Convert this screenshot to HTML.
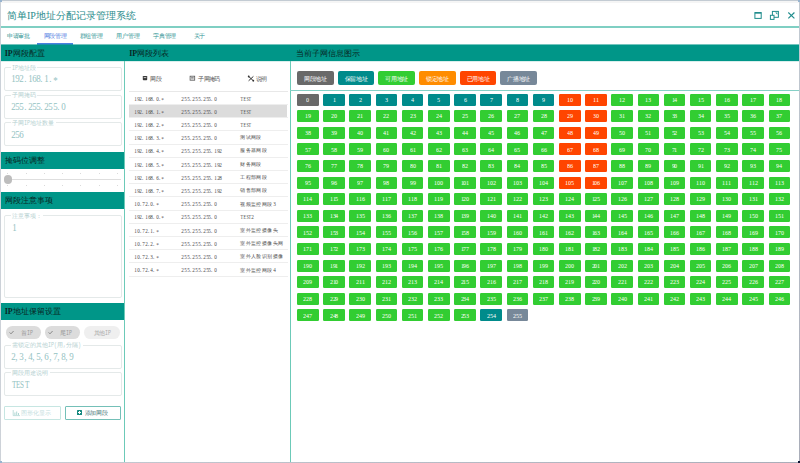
<!DOCTYPE html>
<html><head><meta charset="utf-8"><style>
*{box-sizing:border-box}
html,body{margin:0;padding:0;width:800px;height:463px;overflow:hidden;background:#fff}
body{position:relative;font-family:"Liberation Sans",sans-serif}
.a{position:absolute}
.t{line-height:1;white-space:nowrap}
.m{display:inline-block}
.g{display:inline-block;text-align:center}
.gi{display:inline-block;font-family:'Liberation Serif',serif;transform-origin:50% 50%}
.mi{display:inline-block;font-family:'Liberation Mono',monospace;transform-origin:0 50%}
.hdr{position:absolute;background:#009688}
.fs{position:absolute;border:1px solid #e4e9e9;border-radius:2px}
.vl{position:absolute;background:#6ccab8;width:1.3px}
.c{position:absolute;width:21.5px;height:12px;border-radius:1.2px}
.lb{position:absolute;top:71.3px;width:36.8px;height:13.4px;border-radius:2px}
.chip{position:absolute;top:326px;height:12.7px;border-radius:6.4px}
</style></head><body>

<div class="a" style="left:0;top:0;width:800px;height:1px;background:#c3cbd3"></div>
<div class="a" style="left:1px;top:1px;width:798px;height:2px;background:#f5f5f5"></div>
<div class="a" style="left:0;top:0;width:1px;height:463px;background:linear-gradient(#cbd1d8,#cdd2d8)"></div>
<div class="a" style="left:799px;top:0;width:1px;height:463px;background:linear-gradient(#c3cbd3,#a9adb9)"></div>
<div class="a" style="left:0;top:462px;width:800px;height:1px;background:linear-gradient(90deg,#c6ccd4,#a9adb9)"></div>
<div class="a" style="left:0;top:0;width:2px;height:2px;background:#98b4d0"></div>
<div class="a" style="left:798px;top:0;width:2px;height:2px;background:#98b4d0"></div>
<div class="a" style="left:0;top:461px;width:2px;height:2px;background:#98b4d0"></div>
<div class="a" style="left:798px;top:461px;width:2px;height:2px;background:#0c1232"></div>
<div class="a t" style="left:7.00px;top:10.55px;font-size:10.00px;color:#2a8c8c;font-weight:normal;">简单<span style="font-family:'Liberation Serif',serif;">IP</span>地址分配记录管理系统</div>
<div class="a" style="left:1px;top:26.1px;width:798px;height:1.8px;background:#7fcfc3"></div>
<svg class="a" style="left:750px;top:5px" width="50" height="20" viewBox="0 0 50 20">
<g fill="none" stroke="#1f8c8c" stroke-width="1">
<rect x="4.9" y="7.6" width="6.3" height="5.8"/>
<line x1="4.9" y1="7.9" x2="11.2" y2="7.9" stroke-width="1.5"/>
<rect x="22.4" y="6.4" width="6" height="5.9"/>
<rect x="20.4" y="10.3" width="3.6" height="4.1" fill="#fff"/>
<line x1="38.3" y1="7.5" x2="44.4" y2="13.4" stroke-width="1.1"/>
<line x1="44.4" y1="7.5" x2="38.3" y2="13.4" stroke-width="1.1"/>
</g>
<path d="M25.2 7.5 L27.4 7.5 L27.4 9.7 Z" fill="#1f8c8c"/>
</svg>
<div class="a t" style="left:6.75px;top:33.06px;font-size:5.80px;color:#2e9494;font-weight:normal;"><span style="font-size:6px;letter-spacing:-0.20px">申请审批</span></div>
<div class="a t" style="left:43.50px;top:33.06px;font-size:5.80px;color:#4d7be2;font-weight:normal;"><span style="font-size:6px;letter-spacing:-0.20px">网段管理</span></div>
<div class="a t" style="left:79.50px;top:33.06px;font-size:5.80px;color:#2e9494;font-weight:normal;"><span style="font-size:6px;letter-spacing:-0.20px">群组管理</span></div>
<div class="a t" style="left:116.40px;top:33.06px;font-size:5.80px;color:#2e9494;font-weight:normal;"><span style="font-size:6px;letter-spacing:-0.20px">用户管理</span></div>
<div class="a t" style="left:153.00px;top:33.06px;font-size:5.80px;color:#2e9494;font-weight:normal;"><span style="font-size:6px;letter-spacing:-0.20px">字典管理</span></div>
<div class="a t" style="left:193.50px;top:33.06px;font-size:5.80px;color:#2e9494;font-weight:normal;"><span style="font-size:6px;letter-spacing:-0.20px">关于</span></div>
<div class="a" style="left:37.2px;top:43.4px;width:36.3px;height:1.3px;background:#4a80e0"></div>
<div class="hdr" style="left:1px;top:45px;width:798px;height:16px"></div>
<div class="a" style="left:1px;top:44px;width:798px;height:1px;background:rgba(0,150,136,0.55)"></div>
<div class="a" style="left:1px;top:61px;width:798px;height:1px;background:rgba(0,150,136,0.15)"></div>
<div class="a t" style="left:4.70px;top:49.88px;font-size:8.00px;color:#082624;font-weight:500;"><span style="font-family:'Liberation Serif',serif;font-weight:bold">IP</span>网段配置</div>
<div class="a t" style="left:129.20px;top:49.88px;font-size:8.00px;color:#082624;font-weight:500;"><span style="font-family:'Liberation Serif',serif;font-weight:bold">IP</span>网段列表</div>
<div class="a t" style="left:296.00px;top:49.88px;font-size:8.00px;color:#082624;font-weight:500;">当前子网信息图示</div>
<div class="vl" style="left:123.8px;top:61px;height:401px"></div>
<div class="vl" style="left:289.8px;top:61px;height:401px"></div>
<div class="fs" style="left:4.3px;top:67.0px;width:117.3px;height:24.0px"></div>
<div class="a" style="left:11px;top:66.0px;width:26.4px;height:3px;background:#fff"></div>
<div class="a t" style="left:12.20px;top:64.56px;font-size:6.00px;color:#b4d0d0;font-weight:normal;"><span class="m" style="width:6.00px"><span class="mi" style="font-size:6.45px;transform:scaleX(0.775)">IP</span></span>地址段</div>
<div class="a t" style="left:11.20px;top:74.43px;font-size:8.30px;color:#94c2c2;font-weight:normal;"><span class="g" style="width:4.15px"><span class="gi" style="font-size:10.38px;transform:scaleX(0.860);">1</span></span><span class="g" style="width:4.15px"><span class="gi" style="font-size:10.38px;transform:scaleX(0.860);">9</span></span><span class="g" style="width:4.15px"><span class="gi" style="font-size:10.38px;transform:scaleX(0.860);">2</span></span><span class="g" style="width:4.15px"><span class="gi" style="font-size:10.38px;transform:scaleX(0.860);position:relative;left:-0.06em;">.</span></span><span class="g" style="width:4.15px"><span class="gi" style="font-size:10.38px;transform:scaleX(0.860);">1</span></span><span class="g" style="width:4.15px"><span class="gi" style="font-size:10.38px;transform:scaleX(0.860);">6</span></span><span class="g" style="width:4.15px"><span class="gi" style="font-size:10.38px;transform:scaleX(0.860);">8</span></span><span class="g" style="width:4.15px"><span class="gi" style="font-size:10.38px;transform:scaleX(0.860);position:relative;left:-0.06em;">.</span></span><span class="g" style="width:4.15px"><span class="gi" style="font-size:10.38px;transform:scaleX(0.860);">1</span></span><span class="g" style="width:4.15px"><span class="gi" style="font-size:10.38px;transform:scaleX(0.860);position:relative;left:-0.06em;">.</span></span><span class="g" style="width:4.15px"><span class="gi" style="font-size:10.38px;transform:scaleX(0.860);position:relative;top:0.15em;">*</span></span></div>
<div class="fs" style="left:4.3px;top:94.9px;width:117.3px;height:24.2px"></div>
<div class="a" style="left:11px;top:93.9px;width:26.4px;height:3px;background:#fff"></div>
<div class="a t" style="left:12.20px;top:92.46px;font-size:6.00px;color:#b4d0d0;font-weight:normal;">子网掩码</div>
<div class="a t" style="left:11.20px;top:102.33px;font-size:8.30px;color:#94c2c2;font-weight:normal;"><span class="g" style="width:4.15px"><span class="gi" style="font-size:10.38px;transform:scaleX(0.860);">2</span></span><span class="g" style="width:4.15px"><span class="gi" style="font-size:10.38px;transform:scaleX(0.860);">5</span></span><span class="g" style="width:4.15px"><span class="gi" style="font-size:10.38px;transform:scaleX(0.860);">5</span></span><span class="g" style="width:4.15px"><span class="gi" style="font-size:10.38px;transform:scaleX(0.860);position:relative;left:-0.06em;">.</span></span><span class="g" style="width:4.15px"><span class="gi" style="font-size:10.38px;transform:scaleX(0.860);">2</span></span><span class="g" style="width:4.15px"><span class="gi" style="font-size:10.38px;transform:scaleX(0.860);">5</span></span><span class="g" style="width:4.15px"><span class="gi" style="font-size:10.38px;transform:scaleX(0.860);">5</span></span><span class="g" style="width:4.15px"><span class="gi" style="font-size:10.38px;transform:scaleX(0.860);position:relative;left:-0.06em;">.</span></span><span class="g" style="width:4.15px"><span class="gi" style="font-size:10.38px;transform:scaleX(0.860);">2</span></span><span class="g" style="width:4.15px"><span class="gi" style="font-size:10.38px;transform:scaleX(0.860);">5</span></span><span class="g" style="width:4.15px"><span class="gi" style="font-size:10.38px;transform:scaleX(0.860);">5</span></span><span class="g" style="width:4.15px"><span class="gi" style="font-size:10.38px;transform:scaleX(0.860);position:relative;left:-0.06em;">.</span></span><span class="g" style="width:4.15px"><span class="gi" style="font-size:10.38px;transform:scaleX(0.860);">0</span></span></div>
<div class="fs" style="left:4.3px;top:122.1px;width:117.3px;height:23.6px"></div>
<div class="a" style="left:11px;top:121.1px;width:44.7px;height:3px;background:#fff"></div>
<div class="a t" style="left:12.20px;top:119.66px;font-size:6.00px;color:#b4d0d0;font-weight:normal;">子网<span class="m" style="width:6.00px"><span class="mi" style="font-size:6.45px;transform:scaleX(0.775)">IP</span></span>地址数量</div>
<div class="a t" style="left:11.20px;top:129.53px;font-size:8.30px;color:#94c2c2;font-weight:normal;"><span class="g" style="width:4.15px"><span class="gi" style="font-size:10.38px;transform:scaleX(0.860);">2</span></span><span class="g" style="width:4.15px"><span class="gi" style="font-size:10.38px;transform:scaleX(0.860);">5</span></span><span class="g" style="width:4.15px"><span class="gi" style="font-size:10.38px;transform:scaleX(0.860);">6</span></span></div>
<div class="hdr" style="left:1px;top:151.9px;width:123px;height:16.9px"></div>
<div class="a t" style="left:4.70px;top:156.78px;font-size:8.00px;color:#082624;font-weight:500;">掩码位调整</div>
<div class="a" style="left:7.8px;top:178.9px;width:113.4px;height:1.2px;background:#dedede"></div>
<div class="a" style="left:7.40px;top:173.2px;width:0.8px;height:1px;background:#dadada"></div>
<div class="a" style="left:7.40px;top:184.6px;width:0.8px;height:1px;background:#dadada"></div>
<div class="a" style="left:25.65px;top:173.2px;width:0.8px;height:1px;background:#dadada"></div>
<div class="a" style="left:25.65px;top:184.6px;width:0.8px;height:1px;background:#dadada"></div>
<div class="a" style="left:43.90px;top:173.2px;width:0.8px;height:1px;background:#dadada"></div>
<div class="a" style="left:43.90px;top:184.6px;width:0.8px;height:1px;background:#dadada"></div>
<div class="a" style="left:62.15px;top:173.2px;width:0.8px;height:1px;background:#dadada"></div>
<div class="a" style="left:62.15px;top:184.6px;width:0.8px;height:1px;background:#dadada"></div>
<div class="a" style="left:80.40px;top:173.2px;width:0.8px;height:1px;background:#dadada"></div>
<div class="a" style="left:80.40px;top:184.6px;width:0.8px;height:1px;background:#dadada"></div>
<div class="a" style="left:98.65px;top:173.2px;width:0.8px;height:1px;background:#dadada"></div>
<div class="a" style="left:98.65px;top:184.6px;width:0.8px;height:1px;background:#dadada"></div>
<div class="a" style="left:116.90px;top:173.2px;width:0.8px;height:1px;background:#dadada"></div>
<div class="a" style="left:116.90px;top:184.6px;width:0.8px;height:1px;background:#dadada"></div>
<div class="a" style="left:3.6px;top:175.3px;width:8.4px;height:8.4px;border-radius:50%;background:#bdbdbd"></div>
<div class="hdr" style="left:1px;top:191.7px;width:123px;height:17.1px"></div>
<div class="a t" style="left:4.70px;top:196.78px;font-size:8.00px;color:#082624;font-weight:500;">网段注意事项</div>
<div class="fs" style="left:4.2px;top:214.6px;width:117.5px;height:83.0px"></div>
<div class="a" style="left:11px;top:213.6px;width:32px;height:3px;background:#fff"></div>
<div class="a t" style="left:12.30px;top:212.66px;font-size:6.00px;color:#b4d0d0;font-weight:normal;">注意事项：</div>
<div class="a t" style="left:12.00px;top:222.93px;font-size:8.30px;color:#94c2c2;font-weight:normal;"><span class="g" style="width:4.15px"><span class="gi" style="font-size:10.38px;transform:scaleX(0.860);">1</span></span></div>
<div class="hdr" style="left:1px;top:303.3px;width:123px;height:16.6px"></div>
<div class="a t" style="left:4.70px;top:308.48px;font-size:8.00px;color:#082624;font-weight:500;"><span style="font-family:'Liberation Serif',serif;font-weight:bold">IP</span>地址保留设置</div>
<div class="chip" style="left:6px;width:35.4px;background:#dcdcdc"></div>
<div class="chip" style="left:45px;width:35.4px;background:#dcdcdc"></div>
<div class="chip" style="left:84px;width:35.8px;background:#efefef"></div>
<svg class="a" style="left:0;top:320px" width="60" height="20"><path d="M9.6 12.4 L11 13.8 L13.6 11" fill="none" stroke="#666" stroke-width="0.7"/><path d="M48.6 12.4 L50 13.8 L52.6 11" fill="none" stroke="#666" stroke-width="0.7"/></svg>
<div class="a t" style="left:21.40px;top:329.51px;font-size:5.90px;color:#999999;font-weight:normal;"><span style="font-size:6px;letter-spacing:-0.10px">首</span><span class="m" style="width:5.90px"><span class="mi" style="font-size:6.34px;transform:scaleX(0.775)">IP</span></span></div>
<div class="a t" style="left:60.40px;top:329.51px;font-size:5.90px;color:#999999;font-weight:normal;"><span style="font-size:6px;letter-spacing:-0.10px">尾</span><span class="m" style="width:5.90px"><span class="mi" style="font-size:6.34px;transform:scaleX(0.775)">IP</span></span></div>
<div class="a t" style="left:93.60px;top:329.51px;font-size:5.90px;color:#aaaaaa;font-weight:normal;"><span style="font-size:6px;letter-spacing:-0.10px">其他</span><span class="m" style="width:5.90px"><span class="mi" style="font-size:6.34px;transform:scaleX(0.775)">IP</span></span></div>
<div class="fs" style="left:4.3px;top:344.7px;width:117.3px;height:24.3px"></div>
<div class="a" style="left:11px;top:343.7px;width:72.1px;height:3px;background:#fff"></div>
<div class="a t" style="left:12.20px;top:342.26px;font-size:6.00px;color:#b4d0d0;font-weight:normal;">需锁定的其他<span class="m" style="width:9.00px"><span class="mi" style="font-size:6.45px;transform:scaleX(0.775)">IP(</span></span>用<span class="m" style="width:3.00px"><span class="mi" style="font-size:6.45px;transform:scaleX(0.775)">,</span></span>分隔<span class="m" style="width:3.00px"><span class="mi" style="font-size:6.45px;transform:scaleX(0.775)">)</span></span></div>
<div class="a t" style="left:11.20px;top:352.13px;font-size:8.30px;color:#94c2c2;font-weight:normal;"><span class="g" style="width:4.15px"><span class="gi" style="font-size:10.38px;transform:scaleX(0.860);">2</span></span><span class="g" style="width:4.15px"><span class="gi" style="font-size:10.38px;transform:scaleX(0.860);position:relative;left:-0.06em;">,</span></span><span class="g" style="width:4.15px"><span class="gi" style="font-size:10.38px;transform:scaleX(0.860);">3</span></span><span class="g" style="width:4.15px"><span class="gi" style="font-size:10.38px;transform:scaleX(0.860);position:relative;left:-0.06em;">,</span></span><span class="g" style="width:4.15px"><span class="gi" style="font-size:10.38px;transform:scaleX(0.860);">4</span></span><span class="g" style="width:4.15px"><span class="gi" style="font-size:10.38px;transform:scaleX(0.860);position:relative;left:-0.06em;">,</span></span><span class="g" style="width:4.15px"><span class="gi" style="font-size:10.38px;transform:scaleX(0.860);">5</span></span><span class="g" style="width:4.15px"><span class="gi" style="font-size:10.38px;transform:scaleX(0.860);position:relative;left:-0.06em;">,</span></span><span class="g" style="width:4.15px"><span class="gi" style="font-size:10.38px;transform:scaleX(0.860);">6</span></span><span class="g" style="width:4.15px"><span class="gi" style="font-size:10.38px;transform:scaleX(0.860);position:relative;left:-0.06em;">,</span></span><span class="g" style="width:4.15px"><span class="gi" style="font-size:10.38px;transform:scaleX(0.860);">7</span></span><span class="g" style="width:4.15px"><span class="gi" style="font-size:10.38px;transform:scaleX(0.860);position:relative;left:-0.06em;">,</span></span><span class="g" style="width:4.15px"><span class="gi" style="font-size:10.38px;transform:scaleX(0.860);">8</span></span><span class="g" style="width:4.15px"><span class="gi" style="font-size:10.38px;transform:scaleX(0.860);position:relative;left:-0.06em;">,</span></span><span class="g" style="width:4.15px"><span class="gi" style="font-size:10.38px;transform:scaleX(0.860);">9</span></span></div>
<div class="fs" style="left:4.3px;top:372.3px;width:117.3px;height:23.4px"></div>
<div class="a" style="left:11px;top:371.3px;width:38.6px;height:3px;background:#fff"></div>
<div class="a t" style="left:12.20px;top:369.86px;font-size:6.00px;color:#b4d0d0;font-weight:normal;">网段用途说明</div>
<div class="a t" style="left:11.20px;top:379.73px;font-size:8.30px;color:#94c2c2;font-weight:normal;"><span class="g" style="width:4.15px"><span class="gi" style="font-size:10.38px;transform:scaleX(0.688);">T</span></span><span class="g" style="width:4.15px"><span class="gi" style="font-size:10.38px;transform:scaleX(0.688);">E</span></span><span class="g" style="width:4.15px"><span class="gi" style="font-size:10.38px;transform:scaleX(0.688);">S</span></span><span class="g" style="width:4.15px"><span class="gi" style="font-size:10.38px;transform:scaleX(0.688);">T</span></span></div>
<div class="a" style="left:4.4px;top:406px;width:56.2px;height:13.6px;border:1px solid #c6e6e2;border-radius:1px"></div>
<svg class="a" style="left:12px;top:408px" width="10" height="10"><path d="M1.2 2 L1.2 7.6 L8 7.6" fill="none" stroke="#b0d8d4" stroke-width="0.8"/><rect x="2.4" y="4.5" width="1" height="2.6" fill="#b0d8d4"/><rect x="4.2" y="3.5" width="1" height="3.6" fill="#b0d8d4"/><rect x="6" y="5" width="1" height="2.1" fill="#b0d8d4"/></svg>
<div class="a t" style="left:21.00px;top:410.41px;font-size:5.90px;color:#c4dede;font-weight:normal;"><span style="font-size:6px;letter-spacing:-0.10px">图形化显示</span></div>
<div class="a" style="left:64.7px;top:406px;width:56.3px;height:13.6px;border:1.1px solid #74c0b8;border-radius:1px"></div>
<div class="a" style="left:76.9px;top:410.2px;width:5px;height:5px;background:#16897f;border-radius:0.6px"></div>
<div class="a" style="left:77.9px;top:412.3px;width:3px;height:0.8px;background:#fff"></div>
<div class="a" style="left:79px;top:411.2px;width:0.8px;height:3px;background:#fff"></div>
<div class="a t" style="left:84.50px;top:410.41px;font-size:5.90px;color:#4c7c7c;font-weight:normal;"><span style="font-size:6px;letter-spacing:-0.10px">添加网段</span></div>
<svg class="a" style="left:142px;top:75px" width="6" height="6" viewBox="0 0 6 6"><rect x="0.8" y="0.9" width="4.4" height="4.4" rx="0.7" fill="#3a3a3a"/><rect x="1.7" y="2" width="2.6" height="1.1" fill="#bbb"/></svg>
<div class="a t" style="left:150.40px;top:75.73px;font-size:5.45px;color:#555;font-weight:normal;"><span style="font-size:6px;letter-spacing:-0.55px">网段</span></div>
<svg class="a" style="left:189px;top:75px" width="7" height="6" viewBox="0 0 7 6"><rect x="1.1" y="1.2" width="4.6" height="4" fill="none" stroke="#555" stroke-width="0.8"/><rect x="2.1" y="2.1" width="2.6" height="0.7" fill="#666"/><rect x="2.1" y="3.5" width="2.6" height="0.7" fill="#666"/></svg>
<div class="a t" style="left:198.10px;top:75.73px;font-size:5.45px;color:#555;font-weight:normal;"><span style="font-size:6px;letter-spacing:-0.55px">子网掩码</span></div>
<svg class="a" style="left:247px;top:74.8px" width="8" height="7" viewBox="0 0 8 7"><path d="M1.6 1.4 L6.4 5.8 M6.4 1.4 L1.6 5.8" stroke="#333" stroke-width="1"/><circle cx="1.7" cy="1.5" r="0.9" fill="#333"/><circle cx="6.3" cy="5.7" r="0.9" fill="#333"/></svg>
<div class="a t" style="left:255.80px;top:75.73px;font-size:5.45px;color:#555;font-weight:normal;"><span style="font-size:6px;letter-spacing:-0.55px">说明</span></div>
<div class="a" style="left:129px;top:90.8px;width:158.5px;height:0.8px;background:#e8e8e8"></div>
<div class="a" style="left:129px;top:104.00px;width:158.5px;height:0.8px;background:#eeeeee"></div>
<div class="a t" style="left:134.00px;top:95.64px;font-size:5.42px;color:#4a4a4a;font-weight:normal;"><span class="g" style="width:2.71px"><span class="gi" style="font-size:6.07px;transform:scaleX(0.850);">1</span></span><span class="g" style="width:2.71px"><span class="gi" style="font-size:6.07px;transform:scaleX(0.850);">9</span></span><span class="g" style="width:2.71px"><span class="gi" style="font-size:6.07px;transform:scaleX(0.850);">2</span></span><span class="g" style="width:2.71px"><span class="gi" style="font-size:6.07px;transform:scaleX(0.850);position:relative;left:-0.06em;">.</span></span><span class="g" style="width:2.71px"><span class="gi" style="font-size:6.07px;transform:scaleX(0.850);">1</span></span><span class="g" style="width:2.71px"><span class="gi" style="font-size:6.07px;transform:scaleX(0.850);">6</span></span><span class="g" style="width:2.71px"><span class="gi" style="font-size:6.07px;transform:scaleX(0.850);">8</span></span><span class="g" style="width:2.71px"><span class="gi" style="font-size:6.07px;transform:scaleX(0.850);position:relative;left:-0.06em;">.</span></span><span class="g" style="width:2.71px"><span class="gi" style="font-size:6.07px;transform:scaleX(0.850);">0</span></span><span class="g" style="width:2.71px"><span class="gi" style="font-size:6.07px;transform:scaleX(0.850);position:relative;left:-0.06em;">.</span></span><span class="g" style="width:2.71px"><span class="gi" style="font-size:6.07px;transform:scaleX(0.850);position:relative;top:0.15em;">*</span></span></div>
<div class="a t" style="left:181.40px;top:95.64px;font-size:5.42px;color:#4a4a4a;font-weight:normal;"><span class="g" style="width:2.71px"><span class="gi" style="font-size:6.07px;transform:scaleX(0.850);">2</span></span><span class="g" style="width:2.71px"><span class="gi" style="font-size:6.07px;transform:scaleX(0.850);">5</span></span><span class="g" style="width:2.71px"><span class="gi" style="font-size:6.07px;transform:scaleX(0.850);">5</span></span><span class="g" style="width:2.71px"><span class="gi" style="font-size:6.07px;transform:scaleX(0.850);position:relative;left:-0.06em;">.</span></span><span class="g" style="width:2.71px"><span class="gi" style="font-size:6.07px;transform:scaleX(0.850);">2</span></span><span class="g" style="width:2.71px"><span class="gi" style="font-size:6.07px;transform:scaleX(0.850);">5</span></span><span class="g" style="width:2.71px"><span class="gi" style="font-size:6.07px;transform:scaleX(0.850);">5</span></span><span class="g" style="width:2.71px"><span class="gi" style="font-size:6.07px;transform:scaleX(0.850);position:relative;left:-0.06em;">.</span></span><span class="g" style="width:2.71px"><span class="gi" style="font-size:6.07px;transform:scaleX(0.850);">2</span></span><span class="g" style="width:2.71px"><span class="gi" style="font-size:6.07px;transform:scaleX(0.850);">5</span></span><span class="g" style="width:2.71px"><span class="gi" style="font-size:6.07px;transform:scaleX(0.850);">5</span></span><span class="g" style="width:2.71px"><span class="gi" style="font-size:6.07px;transform:scaleX(0.850);position:relative;left:-0.06em;">.</span></span><span class="g" style="width:2.71px"><span class="gi" style="font-size:6.07px;transform:scaleX(0.850);">0</span></span></div>
<div class="a t" style="left:240.20px;top:95.64px;font-size:5.42px;color:#4a4a4a;font-weight:normal;"><span class="g" style="width:2.71px"><span class="gi" style="font-size:6.07px;transform:scaleX(0.680);">T</span></span><span class="g" style="width:2.71px"><span class="gi" style="font-size:6.07px;transform:scaleX(0.680);">E</span></span><span class="g" style="width:2.71px"><span class="gi" style="font-size:6.07px;transform:scaleX(0.680);">S</span></span><span class="g" style="width:2.71px"><span class="gi" style="font-size:6.07px;transform:scaleX(0.680);">T</span></span></div>
<div class="a" style="left:128.9px;top:105.30px;width:158.6px;height:12.8px;background:#dcdcdc"></div>
<div class="a" style="left:129px;top:117.20px;width:158.5px;height:0.8px;background:#eeeeee"></div>
<div class="a t" style="left:134.00px;top:108.84px;font-size:5.42px;color:#4a4a4a;font-weight:normal;"><span class="g" style="width:2.71px"><span class="gi" style="font-size:6.07px;transform:scaleX(0.850);">1</span></span><span class="g" style="width:2.71px"><span class="gi" style="font-size:6.07px;transform:scaleX(0.850);">9</span></span><span class="g" style="width:2.71px"><span class="gi" style="font-size:6.07px;transform:scaleX(0.850);">2</span></span><span class="g" style="width:2.71px"><span class="gi" style="font-size:6.07px;transform:scaleX(0.850);position:relative;left:-0.06em;">.</span></span><span class="g" style="width:2.71px"><span class="gi" style="font-size:6.07px;transform:scaleX(0.850);">1</span></span><span class="g" style="width:2.71px"><span class="gi" style="font-size:6.07px;transform:scaleX(0.850);">6</span></span><span class="g" style="width:2.71px"><span class="gi" style="font-size:6.07px;transform:scaleX(0.850);">8</span></span><span class="g" style="width:2.71px"><span class="gi" style="font-size:6.07px;transform:scaleX(0.850);position:relative;left:-0.06em;">.</span></span><span class="g" style="width:2.71px"><span class="gi" style="font-size:6.07px;transform:scaleX(0.850);">1</span></span><span class="g" style="width:2.71px"><span class="gi" style="font-size:6.07px;transform:scaleX(0.850);position:relative;left:-0.06em;">.</span></span><span class="g" style="width:2.71px"><span class="gi" style="font-size:6.07px;transform:scaleX(0.850);position:relative;top:0.15em;">*</span></span></div>
<div class="a t" style="left:181.40px;top:108.84px;font-size:5.42px;color:#4a4a4a;font-weight:normal;"><span class="g" style="width:2.71px"><span class="gi" style="font-size:6.07px;transform:scaleX(0.850);">2</span></span><span class="g" style="width:2.71px"><span class="gi" style="font-size:6.07px;transform:scaleX(0.850);">5</span></span><span class="g" style="width:2.71px"><span class="gi" style="font-size:6.07px;transform:scaleX(0.850);">5</span></span><span class="g" style="width:2.71px"><span class="gi" style="font-size:6.07px;transform:scaleX(0.850);position:relative;left:-0.06em;">.</span></span><span class="g" style="width:2.71px"><span class="gi" style="font-size:6.07px;transform:scaleX(0.850);">2</span></span><span class="g" style="width:2.71px"><span class="gi" style="font-size:6.07px;transform:scaleX(0.850);">5</span></span><span class="g" style="width:2.71px"><span class="gi" style="font-size:6.07px;transform:scaleX(0.850);">5</span></span><span class="g" style="width:2.71px"><span class="gi" style="font-size:6.07px;transform:scaleX(0.850);position:relative;left:-0.06em;">.</span></span><span class="g" style="width:2.71px"><span class="gi" style="font-size:6.07px;transform:scaleX(0.850);">2</span></span><span class="g" style="width:2.71px"><span class="gi" style="font-size:6.07px;transform:scaleX(0.850);">5</span></span><span class="g" style="width:2.71px"><span class="gi" style="font-size:6.07px;transform:scaleX(0.850);">5</span></span><span class="g" style="width:2.71px"><span class="gi" style="font-size:6.07px;transform:scaleX(0.850);position:relative;left:-0.06em;">.</span></span><span class="g" style="width:2.71px"><span class="gi" style="font-size:6.07px;transform:scaleX(0.850);">0</span></span></div>
<div class="a t" style="left:240.20px;top:108.84px;font-size:5.42px;color:#4a4a4a;font-weight:normal;"><span class="g" style="width:2.71px"><span class="gi" style="font-size:6.07px;transform:scaleX(0.680);">T</span></span><span class="g" style="width:2.71px"><span class="gi" style="font-size:6.07px;transform:scaleX(0.680);">E</span></span><span class="g" style="width:2.71px"><span class="gi" style="font-size:6.07px;transform:scaleX(0.680);">S</span></span><span class="g" style="width:2.71px"><span class="gi" style="font-size:6.07px;transform:scaleX(0.680);">T</span></span></div>
<div class="a" style="left:129px;top:130.40px;width:158.5px;height:0.8px;background:#eeeeee"></div>
<div class="a t" style="left:134.00px;top:122.04px;font-size:5.42px;color:#4a4a4a;font-weight:normal;"><span class="g" style="width:2.71px"><span class="gi" style="font-size:6.07px;transform:scaleX(0.850);">1</span></span><span class="g" style="width:2.71px"><span class="gi" style="font-size:6.07px;transform:scaleX(0.850);">9</span></span><span class="g" style="width:2.71px"><span class="gi" style="font-size:6.07px;transform:scaleX(0.850);">2</span></span><span class="g" style="width:2.71px"><span class="gi" style="font-size:6.07px;transform:scaleX(0.850);position:relative;left:-0.06em;">.</span></span><span class="g" style="width:2.71px"><span class="gi" style="font-size:6.07px;transform:scaleX(0.850);">1</span></span><span class="g" style="width:2.71px"><span class="gi" style="font-size:6.07px;transform:scaleX(0.850);">6</span></span><span class="g" style="width:2.71px"><span class="gi" style="font-size:6.07px;transform:scaleX(0.850);">8</span></span><span class="g" style="width:2.71px"><span class="gi" style="font-size:6.07px;transform:scaleX(0.850);position:relative;left:-0.06em;">.</span></span><span class="g" style="width:2.71px"><span class="gi" style="font-size:6.07px;transform:scaleX(0.850);">2</span></span><span class="g" style="width:2.71px"><span class="gi" style="font-size:6.07px;transform:scaleX(0.850);position:relative;left:-0.06em;">.</span></span><span class="g" style="width:2.71px"><span class="gi" style="font-size:6.07px;transform:scaleX(0.850);position:relative;top:0.15em;">*</span></span></div>
<div class="a t" style="left:181.40px;top:122.04px;font-size:5.42px;color:#4a4a4a;font-weight:normal;"><span class="g" style="width:2.71px"><span class="gi" style="font-size:6.07px;transform:scaleX(0.850);">2</span></span><span class="g" style="width:2.71px"><span class="gi" style="font-size:6.07px;transform:scaleX(0.850);">5</span></span><span class="g" style="width:2.71px"><span class="gi" style="font-size:6.07px;transform:scaleX(0.850);">5</span></span><span class="g" style="width:2.71px"><span class="gi" style="font-size:6.07px;transform:scaleX(0.850);position:relative;left:-0.06em;">.</span></span><span class="g" style="width:2.71px"><span class="gi" style="font-size:6.07px;transform:scaleX(0.850);">2</span></span><span class="g" style="width:2.71px"><span class="gi" style="font-size:6.07px;transform:scaleX(0.850);">5</span></span><span class="g" style="width:2.71px"><span class="gi" style="font-size:6.07px;transform:scaleX(0.850);">5</span></span><span class="g" style="width:2.71px"><span class="gi" style="font-size:6.07px;transform:scaleX(0.850);position:relative;left:-0.06em;">.</span></span><span class="g" style="width:2.71px"><span class="gi" style="font-size:6.07px;transform:scaleX(0.850);">2</span></span><span class="g" style="width:2.71px"><span class="gi" style="font-size:6.07px;transform:scaleX(0.850);">5</span></span><span class="g" style="width:2.71px"><span class="gi" style="font-size:6.07px;transform:scaleX(0.850);">5</span></span><span class="g" style="width:2.71px"><span class="gi" style="font-size:6.07px;transform:scaleX(0.850);position:relative;left:-0.06em;">.</span></span><span class="g" style="width:2.71px"><span class="gi" style="font-size:6.07px;transform:scaleX(0.850);">0</span></span></div>
<div class="a t" style="left:240.20px;top:122.04px;font-size:5.42px;color:#4a4a4a;font-weight:normal;"><span class="g" style="width:2.71px"><span class="gi" style="font-size:6.07px;transform:scaleX(0.680);">T</span></span><span class="g" style="width:2.71px"><span class="gi" style="font-size:6.07px;transform:scaleX(0.680);">E</span></span><span class="g" style="width:2.71px"><span class="gi" style="font-size:6.07px;transform:scaleX(0.680);">S</span></span><span class="g" style="width:2.71px"><span class="gi" style="font-size:6.07px;transform:scaleX(0.680);">T</span></span></div>
<div class="a" style="left:129px;top:143.60px;width:158.5px;height:0.8px;background:#eeeeee"></div>
<div class="a t" style="left:134.00px;top:135.24px;font-size:5.42px;color:#4a4a4a;font-weight:normal;"><span class="g" style="width:2.71px"><span class="gi" style="font-size:6.07px;transform:scaleX(0.850);">1</span></span><span class="g" style="width:2.71px"><span class="gi" style="font-size:6.07px;transform:scaleX(0.850);">9</span></span><span class="g" style="width:2.71px"><span class="gi" style="font-size:6.07px;transform:scaleX(0.850);">2</span></span><span class="g" style="width:2.71px"><span class="gi" style="font-size:6.07px;transform:scaleX(0.850);position:relative;left:-0.06em;">.</span></span><span class="g" style="width:2.71px"><span class="gi" style="font-size:6.07px;transform:scaleX(0.850);">1</span></span><span class="g" style="width:2.71px"><span class="gi" style="font-size:6.07px;transform:scaleX(0.850);">6</span></span><span class="g" style="width:2.71px"><span class="gi" style="font-size:6.07px;transform:scaleX(0.850);">8</span></span><span class="g" style="width:2.71px"><span class="gi" style="font-size:6.07px;transform:scaleX(0.850);position:relative;left:-0.06em;">.</span></span><span class="g" style="width:2.71px"><span class="gi" style="font-size:6.07px;transform:scaleX(0.850);">3</span></span><span class="g" style="width:2.71px"><span class="gi" style="font-size:6.07px;transform:scaleX(0.850);position:relative;left:-0.06em;">.</span></span><span class="g" style="width:2.71px"><span class="gi" style="font-size:6.07px;transform:scaleX(0.850);position:relative;top:0.15em;">*</span></span></div>
<div class="a t" style="left:181.40px;top:135.24px;font-size:5.42px;color:#4a4a4a;font-weight:normal;"><span class="g" style="width:2.71px"><span class="gi" style="font-size:6.07px;transform:scaleX(0.850);">2</span></span><span class="g" style="width:2.71px"><span class="gi" style="font-size:6.07px;transform:scaleX(0.850);">5</span></span><span class="g" style="width:2.71px"><span class="gi" style="font-size:6.07px;transform:scaleX(0.850);">5</span></span><span class="g" style="width:2.71px"><span class="gi" style="font-size:6.07px;transform:scaleX(0.850);position:relative;left:-0.06em;">.</span></span><span class="g" style="width:2.71px"><span class="gi" style="font-size:6.07px;transform:scaleX(0.850);">2</span></span><span class="g" style="width:2.71px"><span class="gi" style="font-size:6.07px;transform:scaleX(0.850);">5</span></span><span class="g" style="width:2.71px"><span class="gi" style="font-size:6.07px;transform:scaleX(0.850);">5</span></span><span class="g" style="width:2.71px"><span class="gi" style="font-size:6.07px;transform:scaleX(0.850);position:relative;left:-0.06em;">.</span></span><span class="g" style="width:2.71px"><span class="gi" style="font-size:6.07px;transform:scaleX(0.850);">2</span></span><span class="g" style="width:2.71px"><span class="gi" style="font-size:6.07px;transform:scaleX(0.850);">5</span></span><span class="g" style="width:2.71px"><span class="gi" style="font-size:6.07px;transform:scaleX(0.850);">5</span></span><span class="g" style="width:2.71px"><span class="gi" style="font-size:6.07px;transform:scaleX(0.850);position:relative;left:-0.06em;">.</span></span><span class="g" style="width:2.71px"><span class="gi" style="font-size:6.07px;transform:scaleX(0.850);">0</span></span></div>
<div class="a t" style="left:240.20px;top:135.24px;font-size:5.42px;color:#4a4a4a;font-weight:normal;"><span style="font-size:5px;letter-spacing:0.42px">测试网段</span></div>
<div class="a" style="left:129px;top:156.80px;width:158.5px;height:0.8px;background:#eeeeee"></div>
<div class="a t" style="left:134.00px;top:148.44px;font-size:5.42px;color:#4a4a4a;font-weight:normal;"><span class="g" style="width:2.71px"><span class="gi" style="font-size:6.07px;transform:scaleX(0.850);">1</span></span><span class="g" style="width:2.71px"><span class="gi" style="font-size:6.07px;transform:scaleX(0.850);">9</span></span><span class="g" style="width:2.71px"><span class="gi" style="font-size:6.07px;transform:scaleX(0.850);">2</span></span><span class="g" style="width:2.71px"><span class="gi" style="font-size:6.07px;transform:scaleX(0.850);position:relative;left:-0.06em;">.</span></span><span class="g" style="width:2.71px"><span class="gi" style="font-size:6.07px;transform:scaleX(0.850);">1</span></span><span class="g" style="width:2.71px"><span class="gi" style="font-size:6.07px;transform:scaleX(0.850);">6</span></span><span class="g" style="width:2.71px"><span class="gi" style="font-size:6.07px;transform:scaleX(0.850);">8</span></span><span class="g" style="width:2.71px"><span class="gi" style="font-size:6.07px;transform:scaleX(0.850);position:relative;left:-0.06em;">.</span></span><span class="g" style="width:2.71px"><span class="gi" style="font-size:6.07px;transform:scaleX(0.850);">4</span></span><span class="g" style="width:2.71px"><span class="gi" style="font-size:6.07px;transform:scaleX(0.850);position:relative;left:-0.06em;">.</span></span><span class="g" style="width:2.71px"><span class="gi" style="font-size:6.07px;transform:scaleX(0.850);position:relative;top:0.15em;">*</span></span></div>
<div class="a t" style="left:181.40px;top:148.44px;font-size:5.42px;color:#4a4a4a;font-weight:normal;"><span class="g" style="width:2.71px"><span class="gi" style="font-size:6.07px;transform:scaleX(0.850);">2</span></span><span class="g" style="width:2.71px"><span class="gi" style="font-size:6.07px;transform:scaleX(0.850);">5</span></span><span class="g" style="width:2.71px"><span class="gi" style="font-size:6.07px;transform:scaleX(0.850);">5</span></span><span class="g" style="width:2.71px"><span class="gi" style="font-size:6.07px;transform:scaleX(0.850);position:relative;left:-0.06em;">.</span></span><span class="g" style="width:2.71px"><span class="gi" style="font-size:6.07px;transform:scaleX(0.850);">2</span></span><span class="g" style="width:2.71px"><span class="gi" style="font-size:6.07px;transform:scaleX(0.850);">5</span></span><span class="g" style="width:2.71px"><span class="gi" style="font-size:6.07px;transform:scaleX(0.850);">5</span></span><span class="g" style="width:2.71px"><span class="gi" style="font-size:6.07px;transform:scaleX(0.850);position:relative;left:-0.06em;">.</span></span><span class="g" style="width:2.71px"><span class="gi" style="font-size:6.07px;transform:scaleX(0.850);">2</span></span><span class="g" style="width:2.71px"><span class="gi" style="font-size:6.07px;transform:scaleX(0.850);">5</span></span><span class="g" style="width:2.71px"><span class="gi" style="font-size:6.07px;transform:scaleX(0.850);">5</span></span><span class="g" style="width:2.71px"><span class="gi" style="font-size:6.07px;transform:scaleX(0.850);position:relative;left:-0.06em;">.</span></span><span class="g" style="width:2.71px"><span class="gi" style="font-size:6.07px;transform:scaleX(0.850);">1</span></span><span class="g" style="width:2.71px"><span class="gi" style="font-size:6.07px;transform:scaleX(0.850);">9</span></span><span class="g" style="width:2.71px"><span class="gi" style="font-size:6.07px;transform:scaleX(0.850);">2</span></span></div>
<div class="a t" style="left:240.20px;top:148.44px;font-size:5.42px;color:#4a4a4a;font-weight:normal;"><span style="font-size:5px;letter-spacing:0.42px">服务器网段</span></div>
<div class="a" style="left:129px;top:170.00px;width:158.5px;height:0.8px;background:#eeeeee"></div>
<div class="a t" style="left:134.00px;top:161.64px;font-size:5.42px;color:#4a4a4a;font-weight:normal;"><span class="g" style="width:2.71px"><span class="gi" style="font-size:6.07px;transform:scaleX(0.850);">1</span></span><span class="g" style="width:2.71px"><span class="gi" style="font-size:6.07px;transform:scaleX(0.850);">9</span></span><span class="g" style="width:2.71px"><span class="gi" style="font-size:6.07px;transform:scaleX(0.850);">2</span></span><span class="g" style="width:2.71px"><span class="gi" style="font-size:6.07px;transform:scaleX(0.850);position:relative;left:-0.06em;">.</span></span><span class="g" style="width:2.71px"><span class="gi" style="font-size:6.07px;transform:scaleX(0.850);">1</span></span><span class="g" style="width:2.71px"><span class="gi" style="font-size:6.07px;transform:scaleX(0.850);">6</span></span><span class="g" style="width:2.71px"><span class="gi" style="font-size:6.07px;transform:scaleX(0.850);">8</span></span><span class="g" style="width:2.71px"><span class="gi" style="font-size:6.07px;transform:scaleX(0.850);position:relative;left:-0.06em;">.</span></span><span class="g" style="width:2.71px"><span class="gi" style="font-size:6.07px;transform:scaleX(0.850);">5</span></span><span class="g" style="width:2.71px"><span class="gi" style="font-size:6.07px;transform:scaleX(0.850);position:relative;left:-0.06em;">.</span></span><span class="g" style="width:2.71px"><span class="gi" style="font-size:6.07px;transform:scaleX(0.850);position:relative;top:0.15em;">*</span></span></div>
<div class="a t" style="left:181.40px;top:161.64px;font-size:5.42px;color:#4a4a4a;font-weight:normal;"><span class="g" style="width:2.71px"><span class="gi" style="font-size:6.07px;transform:scaleX(0.850);">2</span></span><span class="g" style="width:2.71px"><span class="gi" style="font-size:6.07px;transform:scaleX(0.850);">5</span></span><span class="g" style="width:2.71px"><span class="gi" style="font-size:6.07px;transform:scaleX(0.850);">5</span></span><span class="g" style="width:2.71px"><span class="gi" style="font-size:6.07px;transform:scaleX(0.850);position:relative;left:-0.06em;">.</span></span><span class="g" style="width:2.71px"><span class="gi" style="font-size:6.07px;transform:scaleX(0.850);">2</span></span><span class="g" style="width:2.71px"><span class="gi" style="font-size:6.07px;transform:scaleX(0.850);">5</span></span><span class="g" style="width:2.71px"><span class="gi" style="font-size:6.07px;transform:scaleX(0.850);">5</span></span><span class="g" style="width:2.71px"><span class="gi" style="font-size:6.07px;transform:scaleX(0.850);position:relative;left:-0.06em;">.</span></span><span class="g" style="width:2.71px"><span class="gi" style="font-size:6.07px;transform:scaleX(0.850);">2</span></span><span class="g" style="width:2.71px"><span class="gi" style="font-size:6.07px;transform:scaleX(0.850);">5</span></span><span class="g" style="width:2.71px"><span class="gi" style="font-size:6.07px;transform:scaleX(0.850);">5</span></span><span class="g" style="width:2.71px"><span class="gi" style="font-size:6.07px;transform:scaleX(0.850);position:relative;left:-0.06em;">.</span></span><span class="g" style="width:2.71px"><span class="gi" style="font-size:6.07px;transform:scaleX(0.850);">1</span></span><span class="g" style="width:2.71px"><span class="gi" style="font-size:6.07px;transform:scaleX(0.850);">9</span></span><span class="g" style="width:2.71px"><span class="gi" style="font-size:6.07px;transform:scaleX(0.850);">2</span></span></div>
<div class="a t" style="left:240.20px;top:161.64px;font-size:5.42px;color:#4a4a4a;font-weight:normal;"><span style="font-size:5px;letter-spacing:0.42px">财务网段</span></div>
<div class="a" style="left:129px;top:183.20px;width:158.5px;height:0.8px;background:#eeeeee"></div>
<div class="a t" style="left:134.00px;top:174.84px;font-size:5.42px;color:#4a4a4a;font-weight:normal;"><span class="g" style="width:2.71px"><span class="gi" style="font-size:6.07px;transform:scaleX(0.850);">1</span></span><span class="g" style="width:2.71px"><span class="gi" style="font-size:6.07px;transform:scaleX(0.850);">9</span></span><span class="g" style="width:2.71px"><span class="gi" style="font-size:6.07px;transform:scaleX(0.850);">2</span></span><span class="g" style="width:2.71px"><span class="gi" style="font-size:6.07px;transform:scaleX(0.850);position:relative;left:-0.06em;">.</span></span><span class="g" style="width:2.71px"><span class="gi" style="font-size:6.07px;transform:scaleX(0.850);">1</span></span><span class="g" style="width:2.71px"><span class="gi" style="font-size:6.07px;transform:scaleX(0.850);">6</span></span><span class="g" style="width:2.71px"><span class="gi" style="font-size:6.07px;transform:scaleX(0.850);">8</span></span><span class="g" style="width:2.71px"><span class="gi" style="font-size:6.07px;transform:scaleX(0.850);position:relative;left:-0.06em;">.</span></span><span class="g" style="width:2.71px"><span class="gi" style="font-size:6.07px;transform:scaleX(0.850);">6</span></span><span class="g" style="width:2.71px"><span class="gi" style="font-size:6.07px;transform:scaleX(0.850);position:relative;left:-0.06em;">.</span></span><span class="g" style="width:2.71px"><span class="gi" style="font-size:6.07px;transform:scaleX(0.850);position:relative;top:0.15em;">*</span></span></div>
<div class="a t" style="left:181.40px;top:174.84px;font-size:5.42px;color:#4a4a4a;font-weight:normal;"><span class="g" style="width:2.71px"><span class="gi" style="font-size:6.07px;transform:scaleX(0.850);">2</span></span><span class="g" style="width:2.71px"><span class="gi" style="font-size:6.07px;transform:scaleX(0.850);">5</span></span><span class="g" style="width:2.71px"><span class="gi" style="font-size:6.07px;transform:scaleX(0.850);">5</span></span><span class="g" style="width:2.71px"><span class="gi" style="font-size:6.07px;transform:scaleX(0.850);position:relative;left:-0.06em;">.</span></span><span class="g" style="width:2.71px"><span class="gi" style="font-size:6.07px;transform:scaleX(0.850);">2</span></span><span class="g" style="width:2.71px"><span class="gi" style="font-size:6.07px;transform:scaleX(0.850);">5</span></span><span class="g" style="width:2.71px"><span class="gi" style="font-size:6.07px;transform:scaleX(0.850);">5</span></span><span class="g" style="width:2.71px"><span class="gi" style="font-size:6.07px;transform:scaleX(0.850);position:relative;left:-0.06em;">.</span></span><span class="g" style="width:2.71px"><span class="gi" style="font-size:6.07px;transform:scaleX(0.850);">2</span></span><span class="g" style="width:2.71px"><span class="gi" style="font-size:6.07px;transform:scaleX(0.850);">5</span></span><span class="g" style="width:2.71px"><span class="gi" style="font-size:6.07px;transform:scaleX(0.850);">5</span></span><span class="g" style="width:2.71px"><span class="gi" style="font-size:6.07px;transform:scaleX(0.850);position:relative;left:-0.06em;">.</span></span><span class="g" style="width:2.71px"><span class="gi" style="font-size:6.07px;transform:scaleX(0.850);">1</span></span><span class="g" style="width:2.71px"><span class="gi" style="font-size:6.07px;transform:scaleX(0.850);">2</span></span><span class="g" style="width:2.71px"><span class="gi" style="font-size:6.07px;transform:scaleX(0.850);">8</span></span></div>
<div class="a t" style="left:240.20px;top:174.84px;font-size:5.42px;color:#4a4a4a;font-weight:normal;"><span style="font-size:5px;letter-spacing:0.42px">工程部网段</span></div>
<div class="a" style="left:129px;top:196.40px;width:158.5px;height:0.8px;background:#eeeeee"></div>
<div class="a t" style="left:134.00px;top:188.04px;font-size:5.42px;color:#4a4a4a;font-weight:normal;"><span class="g" style="width:2.71px"><span class="gi" style="font-size:6.07px;transform:scaleX(0.850);">1</span></span><span class="g" style="width:2.71px"><span class="gi" style="font-size:6.07px;transform:scaleX(0.850);">9</span></span><span class="g" style="width:2.71px"><span class="gi" style="font-size:6.07px;transform:scaleX(0.850);">2</span></span><span class="g" style="width:2.71px"><span class="gi" style="font-size:6.07px;transform:scaleX(0.850);position:relative;left:-0.06em;">.</span></span><span class="g" style="width:2.71px"><span class="gi" style="font-size:6.07px;transform:scaleX(0.850);">1</span></span><span class="g" style="width:2.71px"><span class="gi" style="font-size:6.07px;transform:scaleX(0.850);">6</span></span><span class="g" style="width:2.71px"><span class="gi" style="font-size:6.07px;transform:scaleX(0.850);">8</span></span><span class="g" style="width:2.71px"><span class="gi" style="font-size:6.07px;transform:scaleX(0.850);position:relative;left:-0.06em;">.</span></span><span class="g" style="width:2.71px"><span class="gi" style="font-size:6.07px;transform:scaleX(0.850);">7</span></span><span class="g" style="width:2.71px"><span class="gi" style="font-size:6.07px;transform:scaleX(0.850);position:relative;left:-0.06em;">.</span></span><span class="g" style="width:2.71px"><span class="gi" style="font-size:6.07px;transform:scaleX(0.850);position:relative;top:0.15em;">*</span></span></div>
<div class="a t" style="left:181.40px;top:188.04px;font-size:5.42px;color:#4a4a4a;font-weight:normal;"><span class="g" style="width:2.71px"><span class="gi" style="font-size:6.07px;transform:scaleX(0.850);">2</span></span><span class="g" style="width:2.71px"><span class="gi" style="font-size:6.07px;transform:scaleX(0.850);">5</span></span><span class="g" style="width:2.71px"><span class="gi" style="font-size:6.07px;transform:scaleX(0.850);">5</span></span><span class="g" style="width:2.71px"><span class="gi" style="font-size:6.07px;transform:scaleX(0.850);position:relative;left:-0.06em;">.</span></span><span class="g" style="width:2.71px"><span class="gi" style="font-size:6.07px;transform:scaleX(0.850);">2</span></span><span class="g" style="width:2.71px"><span class="gi" style="font-size:6.07px;transform:scaleX(0.850);">5</span></span><span class="g" style="width:2.71px"><span class="gi" style="font-size:6.07px;transform:scaleX(0.850);">5</span></span><span class="g" style="width:2.71px"><span class="gi" style="font-size:6.07px;transform:scaleX(0.850);position:relative;left:-0.06em;">.</span></span><span class="g" style="width:2.71px"><span class="gi" style="font-size:6.07px;transform:scaleX(0.850);">2</span></span><span class="g" style="width:2.71px"><span class="gi" style="font-size:6.07px;transform:scaleX(0.850);">5</span></span><span class="g" style="width:2.71px"><span class="gi" style="font-size:6.07px;transform:scaleX(0.850);">5</span></span><span class="g" style="width:2.71px"><span class="gi" style="font-size:6.07px;transform:scaleX(0.850);position:relative;left:-0.06em;">.</span></span><span class="g" style="width:2.71px"><span class="gi" style="font-size:6.07px;transform:scaleX(0.850);">1</span></span><span class="g" style="width:2.71px"><span class="gi" style="font-size:6.07px;transform:scaleX(0.850);">9</span></span><span class="g" style="width:2.71px"><span class="gi" style="font-size:6.07px;transform:scaleX(0.850);">2</span></span></div>
<div class="a t" style="left:240.20px;top:188.04px;font-size:5.42px;color:#4a4a4a;font-weight:normal;"><span style="font-size:5px;letter-spacing:0.42px">销售部网段</span></div>
<div class="a" style="left:129px;top:209.60px;width:158.5px;height:0.8px;background:#eeeeee"></div>
<div class="a t" style="left:134.00px;top:201.24px;font-size:5.42px;color:#4a4a4a;font-weight:normal;"><span class="g" style="width:2.71px"><span class="gi" style="font-size:6.07px;transform:scaleX(0.850);">1</span></span><span class="g" style="width:2.71px"><span class="gi" style="font-size:6.07px;transform:scaleX(0.850);">0</span></span><span class="g" style="width:2.71px"><span class="gi" style="font-size:6.07px;transform:scaleX(0.850);position:relative;left:-0.06em;">.</span></span><span class="g" style="width:2.71px"><span class="gi" style="font-size:6.07px;transform:scaleX(0.850);">7</span></span><span class="g" style="width:2.71px"><span class="gi" style="font-size:6.07px;transform:scaleX(0.850);">2</span></span><span class="g" style="width:2.71px"><span class="gi" style="font-size:6.07px;transform:scaleX(0.850);position:relative;left:-0.06em;">.</span></span><span class="g" style="width:2.71px"><span class="gi" style="font-size:6.07px;transform:scaleX(0.850);">0</span></span><span class="g" style="width:2.71px"><span class="gi" style="font-size:6.07px;transform:scaleX(0.850);position:relative;left:-0.06em;">.</span></span><span class="g" style="width:2.71px"><span class="gi" style="font-size:6.07px;transform:scaleX(0.850);position:relative;top:0.15em;">*</span></span></div>
<div class="a t" style="left:181.40px;top:201.24px;font-size:5.42px;color:#4a4a4a;font-weight:normal;"><span class="g" style="width:2.71px"><span class="gi" style="font-size:6.07px;transform:scaleX(0.850);">2</span></span><span class="g" style="width:2.71px"><span class="gi" style="font-size:6.07px;transform:scaleX(0.850);">5</span></span><span class="g" style="width:2.71px"><span class="gi" style="font-size:6.07px;transform:scaleX(0.850);">5</span></span><span class="g" style="width:2.71px"><span class="gi" style="font-size:6.07px;transform:scaleX(0.850);position:relative;left:-0.06em;">.</span></span><span class="g" style="width:2.71px"><span class="gi" style="font-size:6.07px;transform:scaleX(0.850);">2</span></span><span class="g" style="width:2.71px"><span class="gi" style="font-size:6.07px;transform:scaleX(0.850);">5</span></span><span class="g" style="width:2.71px"><span class="gi" style="font-size:6.07px;transform:scaleX(0.850);">5</span></span><span class="g" style="width:2.71px"><span class="gi" style="font-size:6.07px;transform:scaleX(0.850);position:relative;left:-0.06em;">.</span></span><span class="g" style="width:2.71px"><span class="gi" style="font-size:6.07px;transform:scaleX(0.850);">2</span></span><span class="g" style="width:2.71px"><span class="gi" style="font-size:6.07px;transform:scaleX(0.850);">5</span></span><span class="g" style="width:2.71px"><span class="gi" style="font-size:6.07px;transform:scaleX(0.850);">5</span></span><span class="g" style="width:2.71px"><span class="gi" style="font-size:6.07px;transform:scaleX(0.850);position:relative;left:-0.06em;">.</span></span><span class="g" style="width:2.71px"><span class="gi" style="font-size:6.07px;transform:scaleX(0.850);">0</span></span></div>
<div class="a t" style="left:240.20px;top:201.24px;font-size:5.42px;color:#4a4a4a;font-weight:normal;"><span style="font-size:5px;letter-spacing:0.42px">视频监控网段</span><span class="g" style="width:2.71px"><span class="gi" style="font-size:6.07px;transform:scaleX(0.850);">3</span></span></div>
<div class="a" style="left:129px;top:222.80px;width:158.5px;height:0.8px;background:#eeeeee"></div>
<div class="a t" style="left:134.00px;top:214.44px;font-size:5.42px;color:#4a4a4a;font-weight:normal;"><span class="g" style="width:2.71px"><span class="gi" style="font-size:6.07px;transform:scaleX(0.850);">1</span></span><span class="g" style="width:2.71px"><span class="gi" style="font-size:6.07px;transform:scaleX(0.850);">9</span></span><span class="g" style="width:2.71px"><span class="gi" style="font-size:6.07px;transform:scaleX(0.850);">2</span></span><span class="g" style="width:2.71px"><span class="gi" style="font-size:6.07px;transform:scaleX(0.850);position:relative;left:-0.06em;">.</span></span><span class="g" style="width:2.71px"><span class="gi" style="font-size:6.07px;transform:scaleX(0.850);">1</span></span><span class="g" style="width:2.71px"><span class="gi" style="font-size:6.07px;transform:scaleX(0.850);">6</span></span><span class="g" style="width:2.71px"><span class="gi" style="font-size:6.07px;transform:scaleX(0.850);">8</span></span><span class="g" style="width:2.71px"><span class="gi" style="font-size:6.07px;transform:scaleX(0.850);position:relative;left:-0.06em;">.</span></span><span class="g" style="width:2.71px"><span class="gi" style="font-size:6.07px;transform:scaleX(0.850);">0</span></span><span class="g" style="width:2.71px"><span class="gi" style="font-size:6.07px;transform:scaleX(0.850);position:relative;left:-0.06em;">.</span></span><span class="g" style="width:2.71px"><span class="gi" style="font-size:6.07px;transform:scaleX(0.850);position:relative;top:0.15em;">*</span></span></div>
<div class="a t" style="left:181.40px;top:214.44px;font-size:5.42px;color:#4a4a4a;font-weight:normal;"><span class="g" style="width:2.71px"><span class="gi" style="font-size:6.07px;transform:scaleX(0.850);">2</span></span><span class="g" style="width:2.71px"><span class="gi" style="font-size:6.07px;transform:scaleX(0.850);">5</span></span><span class="g" style="width:2.71px"><span class="gi" style="font-size:6.07px;transform:scaleX(0.850);">5</span></span><span class="g" style="width:2.71px"><span class="gi" style="font-size:6.07px;transform:scaleX(0.850);position:relative;left:-0.06em;">.</span></span><span class="g" style="width:2.71px"><span class="gi" style="font-size:6.07px;transform:scaleX(0.850);">2</span></span><span class="g" style="width:2.71px"><span class="gi" style="font-size:6.07px;transform:scaleX(0.850);">5</span></span><span class="g" style="width:2.71px"><span class="gi" style="font-size:6.07px;transform:scaleX(0.850);">5</span></span><span class="g" style="width:2.71px"><span class="gi" style="font-size:6.07px;transform:scaleX(0.850);position:relative;left:-0.06em;">.</span></span><span class="g" style="width:2.71px"><span class="gi" style="font-size:6.07px;transform:scaleX(0.850);">2</span></span><span class="g" style="width:2.71px"><span class="gi" style="font-size:6.07px;transform:scaleX(0.850);">5</span></span><span class="g" style="width:2.71px"><span class="gi" style="font-size:6.07px;transform:scaleX(0.850);">5</span></span><span class="g" style="width:2.71px"><span class="gi" style="font-size:6.07px;transform:scaleX(0.850);position:relative;left:-0.06em;">.</span></span><span class="g" style="width:2.71px"><span class="gi" style="font-size:6.07px;transform:scaleX(0.850);">0</span></span></div>
<div class="a t" style="left:240.20px;top:214.44px;font-size:5.42px;color:#4a4a4a;font-weight:normal;"><span class="g" style="width:2.71px"><span class="gi" style="font-size:6.07px;transform:scaleX(0.680);">T</span></span><span class="g" style="width:2.71px"><span class="gi" style="font-size:6.07px;transform:scaleX(0.680);">E</span></span><span class="g" style="width:2.71px"><span class="gi" style="font-size:6.07px;transform:scaleX(0.680);">S</span></span><span class="g" style="width:2.71px"><span class="gi" style="font-size:6.07px;transform:scaleX(0.680);">T</span></span><span class="g" style="width:2.71px"><span class="gi" style="font-size:6.07px;transform:scaleX(0.850);">2</span></span></div>
<div class="a" style="left:129px;top:236.00px;width:158.5px;height:0.8px;background:#eeeeee"></div>
<div class="a t" style="left:134.00px;top:227.64px;font-size:5.42px;color:#4a4a4a;font-weight:normal;"><span class="g" style="width:2.71px"><span class="gi" style="font-size:6.07px;transform:scaleX(0.850);">1</span></span><span class="g" style="width:2.71px"><span class="gi" style="font-size:6.07px;transform:scaleX(0.850);">0</span></span><span class="g" style="width:2.71px"><span class="gi" style="font-size:6.07px;transform:scaleX(0.850);position:relative;left:-0.06em;">.</span></span><span class="g" style="width:2.71px"><span class="gi" style="font-size:6.07px;transform:scaleX(0.850);">7</span></span><span class="g" style="width:2.71px"><span class="gi" style="font-size:6.07px;transform:scaleX(0.850);">2</span></span><span class="g" style="width:2.71px"><span class="gi" style="font-size:6.07px;transform:scaleX(0.850);position:relative;left:-0.06em;">.</span></span><span class="g" style="width:2.71px"><span class="gi" style="font-size:6.07px;transform:scaleX(0.850);">1</span></span><span class="g" style="width:2.71px"><span class="gi" style="font-size:6.07px;transform:scaleX(0.850);position:relative;left:-0.06em;">.</span></span><span class="g" style="width:2.71px"><span class="gi" style="font-size:6.07px;transform:scaleX(0.850);position:relative;top:0.15em;">*</span></span></div>
<div class="a t" style="left:181.40px;top:227.64px;font-size:5.42px;color:#4a4a4a;font-weight:normal;"><span class="g" style="width:2.71px"><span class="gi" style="font-size:6.07px;transform:scaleX(0.850);">2</span></span><span class="g" style="width:2.71px"><span class="gi" style="font-size:6.07px;transform:scaleX(0.850);">5</span></span><span class="g" style="width:2.71px"><span class="gi" style="font-size:6.07px;transform:scaleX(0.850);">5</span></span><span class="g" style="width:2.71px"><span class="gi" style="font-size:6.07px;transform:scaleX(0.850);position:relative;left:-0.06em;">.</span></span><span class="g" style="width:2.71px"><span class="gi" style="font-size:6.07px;transform:scaleX(0.850);">2</span></span><span class="g" style="width:2.71px"><span class="gi" style="font-size:6.07px;transform:scaleX(0.850);">5</span></span><span class="g" style="width:2.71px"><span class="gi" style="font-size:6.07px;transform:scaleX(0.850);">5</span></span><span class="g" style="width:2.71px"><span class="gi" style="font-size:6.07px;transform:scaleX(0.850);position:relative;left:-0.06em;">.</span></span><span class="g" style="width:2.71px"><span class="gi" style="font-size:6.07px;transform:scaleX(0.850);">2</span></span><span class="g" style="width:2.71px"><span class="gi" style="font-size:6.07px;transform:scaleX(0.850);">5</span></span><span class="g" style="width:2.71px"><span class="gi" style="font-size:6.07px;transform:scaleX(0.850);">5</span></span><span class="g" style="width:2.71px"><span class="gi" style="font-size:6.07px;transform:scaleX(0.850);position:relative;left:-0.06em;">.</span></span><span class="g" style="width:2.71px"><span class="gi" style="font-size:6.07px;transform:scaleX(0.850);">0</span></span></div>
<div class="a t" style="left:240.20px;top:227.64px;font-size:5.42px;color:#4a4a4a;font-weight:normal;"><span style="font-size:5px;letter-spacing:0.42px">室外监控摄像头</span></div>
<div class="a" style="left:129px;top:249.20px;width:158.5px;height:0.8px;background:#eeeeee"></div>
<div class="a t" style="left:134.00px;top:240.84px;font-size:5.42px;color:#4a4a4a;font-weight:normal;"><span class="g" style="width:2.71px"><span class="gi" style="font-size:6.07px;transform:scaleX(0.850);">1</span></span><span class="g" style="width:2.71px"><span class="gi" style="font-size:6.07px;transform:scaleX(0.850);">0</span></span><span class="g" style="width:2.71px"><span class="gi" style="font-size:6.07px;transform:scaleX(0.850);position:relative;left:-0.06em;">.</span></span><span class="g" style="width:2.71px"><span class="gi" style="font-size:6.07px;transform:scaleX(0.850);">7</span></span><span class="g" style="width:2.71px"><span class="gi" style="font-size:6.07px;transform:scaleX(0.850);">2</span></span><span class="g" style="width:2.71px"><span class="gi" style="font-size:6.07px;transform:scaleX(0.850);position:relative;left:-0.06em;">.</span></span><span class="g" style="width:2.71px"><span class="gi" style="font-size:6.07px;transform:scaleX(0.850);">2</span></span><span class="g" style="width:2.71px"><span class="gi" style="font-size:6.07px;transform:scaleX(0.850);position:relative;left:-0.06em;">.</span></span><span class="g" style="width:2.71px"><span class="gi" style="font-size:6.07px;transform:scaleX(0.850);position:relative;top:0.15em;">*</span></span></div>
<div class="a t" style="left:181.40px;top:240.84px;font-size:5.42px;color:#4a4a4a;font-weight:normal;"><span class="g" style="width:2.71px"><span class="gi" style="font-size:6.07px;transform:scaleX(0.850);">2</span></span><span class="g" style="width:2.71px"><span class="gi" style="font-size:6.07px;transform:scaleX(0.850);">5</span></span><span class="g" style="width:2.71px"><span class="gi" style="font-size:6.07px;transform:scaleX(0.850);">5</span></span><span class="g" style="width:2.71px"><span class="gi" style="font-size:6.07px;transform:scaleX(0.850);position:relative;left:-0.06em;">.</span></span><span class="g" style="width:2.71px"><span class="gi" style="font-size:6.07px;transform:scaleX(0.850);">2</span></span><span class="g" style="width:2.71px"><span class="gi" style="font-size:6.07px;transform:scaleX(0.850);">5</span></span><span class="g" style="width:2.71px"><span class="gi" style="font-size:6.07px;transform:scaleX(0.850);">5</span></span><span class="g" style="width:2.71px"><span class="gi" style="font-size:6.07px;transform:scaleX(0.850);position:relative;left:-0.06em;">.</span></span><span class="g" style="width:2.71px"><span class="gi" style="font-size:6.07px;transform:scaleX(0.850);">2</span></span><span class="g" style="width:2.71px"><span class="gi" style="font-size:6.07px;transform:scaleX(0.850);">5</span></span><span class="g" style="width:2.71px"><span class="gi" style="font-size:6.07px;transform:scaleX(0.850);">5</span></span><span class="g" style="width:2.71px"><span class="gi" style="font-size:6.07px;transform:scaleX(0.850);position:relative;left:-0.06em;">.</span></span><span class="g" style="width:2.71px"><span class="gi" style="font-size:6.07px;transform:scaleX(0.850);">0</span></span></div>
<div class="a t" style="left:240.20px;top:240.84px;font-size:5.42px;color:#4a4a4a;font-weight:normal;"><span style="font-size:5px;letter-spacing:0.42px">室外监控摄像头网</span></div>
<div class="a" style="left:129px;top:262.40px;width:158.5px;height:0.8px;background:#eeeeee"></div>
<div class="a t" style="left:134.00px;top:254.04px;font-size:5.42px;color:#4a4a4a;font-weight:normal;"><span class="g" style="width:2.71px"><span class="gi" style="font-size:6.07px;transform:scaleX(0.850);">1</span></span><span class="g" style="width:2.71px"><span class="gi" style="font-size:6.07px;transform:scaleX(0.850);">0</span></span><span class="g" style="width:2.71px"><span class="gi" style="font-size:6.07px;transform:scaleX(0.850);position:relative;left:-0.06em;">.</span></span><span class="g" style="width:2.71px"><span class="gi" style="font-size:6.07px;transform:scaleX(0.850);">7</span></span><span class="g" style="width:2.71px"><span class="gi" style="font-size:6.07px;transform:scaleX(0.850);">2</span></span><span class="g" style="width:2.71px"><span class="gi" style="font-size:6.07px;transform:scaleX(0.850);position:relative;left:-0.06em;">.</span></span><span class="g" style="width:2.71px"><span class="gi" style="font-size:6.07px;transform:scaleX(0.850);">3</span></span><span class="g" style="width:2.71px"><span class="gi" style="font-size:6.07px;transform:scaleX(0.850);position:relative;left:-0.06em;">.</span></span><span class="g" style="width:2.71px"><span class="gi" style="font-size:6.07px;transform:scaleX(0.850);position:relative;top:0.15em;">*</span></span></div>
<div class="a t" style="left:181.40px;top:254.04px;font-size:5.42px;color:#4a4a4a;font-weight:normal;"><span class="g" style="width:2.71px"><span class="gi" style="font-size:6.07px;transform:scaleX(0.850);">2</span></span><span class="g" style="width:2.71px"><span class="gi" style="font-size:6.07px;transform:scaleX(0.850);">5</span></span><span class="g" style="width:2.71px"><span class="gi" style="font-size:6.07px;transform:scaleX(0.850);">5</span></span><span class="g" style="width:2.71px"><span class="gi" style="font-size:6.07px;transform:scaleX(0.850);position:relative;left:-0.06em;">.</span></span><span class="g" style="width:2.71px"><span class="gi" style="font-size:6.07px;transform:scaleX(0.850);">2</span></span><span class="g" style="width:2.71px"><span class="gi" style="font-size:6.07px;transform:scaleX(0.850);">5</span></span><span class="g" style="width:2.71px"><span class="gi" style="font-size:6.07px;transform:scaleX(0.850);">5</span></span><span class="g" style="width:2.71px"><span class="gi" style="font-size:6.07px;transform:scaleX(0.850);position:relative;left:-0.06em;">.</span></span><span class="g" style="width:2.71px"><span class="gi" style="font-size:6.07px;transform:scaleX(0.850);">2</span></span><span class="g" style="width:2.71px"><span class="gi" style="font-size:6.07px;transform:scaleX(0.850);">5</span></span><span class="g" style="width:2.71px"><span class="gi" style="font-size:6.07px;transform:scaleX(0.850);">5</span></span><span class="g" style="width:2.71px"><span class="gi" style="font-size:6.07px;transform:scaleX(0.850);position:relative;left:-0.06em;">.</span></span><span class="g" style="width:2.71px"><span class="gi" style="font-size:6.07px;transform:scaleX(0.850);">0</span></span></div>
<div class="a t" style="left:240.20px;top:254.04px;font-size:5.42px;color:#4a4a4a;font-weight:normal;"><span style="font-size:5px;letter-spacing:0.42px">室外人脸识别摄像</span></div>
<div class="a" style="left:129px;top:275.60px;width:158.5px;height:0.8px;background:#eeeeee"></div>
<div class="a t" style="left:134.00px;top:267.24px;font-size:5.42px;color:#4a4a4a;font-weight:normal;"><span class="g" style="width:2.71px"><span class="gi" style="font-size:6.07px;transform:scaleX(0.850);">1</span></span><span class="g" style="width:2.71px"><span class="gi" style="font-size:6.07px;transform:scaleX(0.850);">0</span></span><span class="g" style="width:2.71px"><span class="gi" style="font-size:6.07px;transform:scaleX(0.850);position:relative;left:-0.06em;">.</span></span><span class="g" style="width:2.71px"><span class="gi" style="font-size:6.07px;transform:scaleX(0.850);">7</span></span><span class="g" style="width:2.71px"><span class="gi" style="font-size:6.07px;transform:scaleX(0.850);">2</span></span><span class="g" style="width:2.71px"><span class="gi" style="font-size:6.07px;transform:scaleX(0.850);position:relative;left:-0.06em;">.</span></span><span class="g" style="width:2.71px"><span class="gi" style="font-size:6.07px;transform:scaleX(0.850);">4</span></span><span class="g" style="width:2.71px"><span class="gi" style="font-size:6.07px;transform:scaleX(0.850);position:relative;left:-0.06em;">.</span></span><span class="g" style="width:2.71px"><span class="gi" style="font-size:6.07px;transform:scaleX(0.850);position:relative;top:0.15em;">*</span></span></div>
<div class="a t" style="left:181.40px;top:267.24px;font-size:5.42px;color:#4a4a4a;font-weight:normal;"><span class="g" style="width:2.71px"><span class="gi" style="font-size:6.07px;transform:scaleX(0.850);">2</span></span><span class="g" style="width:2.71px"><span class="gi" style="font-size:6.07px;transform:scaleX(0.850);">5</span></span><span class="g" style="width:2.71px"><span class="gi" style="font-size:6.07px;transform:scaleX(0.850);">5</span></span><span class="g" style="width:2.71px"><span class="gi" style="font-size:6.07px;transform:scaleX(0.850);position:relative;left:-0.06em;">.</span></span><span class="g" style="width:2.71px"><span class="gi" style="font-size:6.07px;transform:scaleX(0.850);">2</span></span><span class="g" style="width:2.71px"><span class="gi" style="font-size:6.07px;transform:scaleX(0.850);">5</span></span><span class="g" style="width:2.71px"><span class="gi" style="font-size:6.07px;transform:scaleX(0.850);">5</span></span><span class="g" style="width:2.71px"><span class="gi" style="font-size:6.07px;transform:scaleX(0.850);position:relative;left:-0.06em;">.</span></span><span class="g" style="width:2.71px"><span class="gi" style="font-size:6.07px;transform:scaleX(0.850);">2</span></span><span class="g" style="width:2.71px"><span class="gi" style="font-size:6.07px;transform:scaleX(0.850);">5</span></span><span class="g" style="width:2.71px"><span class="gi" style="font-size:6.07px;transform:scaleX(0.850);">5</span></span><span class="g" style="width:2.71px"><span class="gi" style="font-size:6.07px;transform:scaleX(0.850);position:relative;left:-0.06em;">.</span></span><span class="g" style="width:2.71px"><span class="gi" style="font-size:6.07px;transform:scaleX(0.850);">0</span></span></div>
<div class="a t" style="left:240.20px;top:267.24px;font-size:5.42px;color:#4a4a4a;font-weight:normal;"><span style="font-size:5px;letter-spacing:0.42px">室外监控网段</span><span class="g" style="width:2.71px"><span class="gi" style="font-size:6.07px;transform:scaleX(0.850);">4</span></span></div>
<div class="lb" style="left:297.00px;background:#696969"></div>
<div class="a t" style="left:304.00px;top:75.91px;font-size:5.70px;color:#ffffff;font-weight:normal;"><span style="font-size:6px;letter-spacing:-0.30px">网段地址</span></div>
<div class="lb" style="left:337.65px;background:#008b8b"></div>
<div class="a t" style="left:344.65px;top:75.91px;font-size:5.70px;color:#ffffff;font-weight:normal;"><span style="font-size:6px;letter-spacing:-0.30px">保留地址</span></div>
<div class="lb" style="left:378.30px;background:#32cd32"></div>
<div class="a t" style="left:385.30px;top:75.91px;font-size:5.70px;color:#ffffff;font-weight:normal;"><span style="font-size:6px;letter-spacing:-0.30px">可用地址</span></div>
<div class="lb" style="left:418.95px;background:#ff8c00"></div>
<div class="a t" style="left:425.95px;top:75.91px;font-size:5.70px;color:#ffffff;font-weight:normal;"><span style="font-size:6px;letter-spacing:-0.30px">锁定地址</span></div>
<div class="lb" style="left:459.60px;background:#ff4500"></div>
<div class="a t" style="left:466.60px;top:75.91px;font-size:5.70px;color:#ffffff;font-weight:normal;"><span style="font-size:6px;letter-spacing:-0.30px">已用地址</span></div>
<div class="lb" style="left:500.25px;background:#778899"></div>
<div class="a t" style="left:507.25px;top:75.91px;font-size:5.70px;color:#ffffff;font-weight:normal;"><span style="font-size:6px;letter-spacing:-0.30px">广播地址</span></div>
<div class="a" style="left:290px;top:90.1px;width:509px;height:1.3px;background:#86d0c6"></div>
<div class="c" style="left:297.10px;top:93.50px;background:#696969"></div>
<div class="a t" style="left:306.38px;top:96.71px;font-size:5.90px;color:#ffffff;font-weight:normal;"><span class="g" style="width:2.95px"><span class="gi" style="font-size:6.37px;transform:scaleX(0.950);">0</span></span></div>
<div class="c" style="left:323.29px;top:93.50px;background:#008b8b"></div>
<div class="a t" style="left:332.56px;top:96.71px;font-size:5.90px;color:#ffffff;font-weight:normal;"><span class="g" style="width:2.95px"><span class="gi" style="font-size:6.37px;transform:scaleX(0.950);">1</span></span></div>
<div class="c" style="left:349.48px;top:93.50px;background:#008b8b"></div>
<div class="a t" style="left:358.75px;top:96.71px;font-size:5.90px;color:#ffffff;font-weight:normal;"><span class="g" style="width:2.95px"><span class="gi" style="font-size:6.37px;transform:scaleX(0.950);">2</span></span></div>
<div class="c" style="left:375.67px;top:93.50px;background:#008b8b"></div>
<div class="a t" style="left:384.94px;top:96.71px;font-size:5.90px;color:#ffffff;font-weight:normal;"><span class="g" style="width:2.95px"><span class="gi" style="font-size:6.37px;transform:scaleX(0.950);">3</span></span></div>
<div class="c" style="left:401.86px;top:93.50px;background:#008b8b"></div>
<div class="a t" style="left:411.13px;top:96.71px;font-size:5.90px;color:#ffffff;font-weight:normal;"><span class="g" style="width:2.95px"><span class="gi" style="font-size:6.37px;transform:scaleX(0.950);">4</span></span></div>
<div class="c" style="left:428.05px;top:93.50px;background:#008b8b"></div>
<div class="a t" style="left:437.33px;top:96.71px;font-size:5.90px;color:#ffffff;font-weight:normal;"><span class="g" style="width:2.95px"><span class="gi" style="font-size:6.37px;transform:scaleX(0.950);">5</span></span></div>
<div class="c" style="left:454.24px;top:93.50px;background:#008b8b"></div>
<div class="a t" style="left:463.51px;top:96.71px;font-size:5.90px;color:#ffffff;font-weight:normal;"><span class="g" style="width:2.95px"><span class="gi" style="font-size:6.37px;transform:scaleX(0.950);">6</span></span></div>
<div class="c" style="left:480.43px;top:93.50px;background:#008b8b"></div>
<div class="a t" style="left:489.71px;top:96.71px;font-size:5.90px;color:#ffffff;font-weight:normal;"><span class="g" style="width:2.95px"><span class="gi" style="font-size:6.37px;transform:scaleX(0.950);">7</span></span></div>
<div class="c" style="left:506.62px;top:93.50px;background:#008b8b"></div>
<div class="a t" style="left:515.89px;top:96.71px;font-size:5.90px;color:#ffffff;font-weight:normal;"><span class="g" style="width:2.95px"><span class="gi" style="font-size:6.37px;transform:scaleX(0.950);">8</span></span></div>
<div class="c" style="left:532.81px;top:93.50px;background:#008b8b"></div>
<div class="a t" style="left:542.09px;top:96.71px;font-size:5.90px;color:#ffffff;font-weight:normal;"><span class="g" style="width:2.95px"><span class="gi" style="font-size:6.37px;transform:scaleX(0.950);">9</span></span></div>
<div class="c" style="left:559.00px;top:93.50px;background:#ff4500"></div>
<div class="a t" style="left:566.80px;top:96.71px;font-size:5.90px;color:#ffffff;font-weight:normal;"><span class="g" style="width:2.95px"><span class="gi" style="font-size:6.37px;transform:scaleX(0.950);">1</span></span><span class="g" style="width:2.95px"><span class="gi" style="font-size:6.37px;transform:scaleX(0.950);">0</span></span></div>
<div class="c" style="left:585.19px;top:93.50px;background:#ff4500"></div>
<div class="a t" style="left:592.99px;top:96.71px;font-size:5.90px;color:#ffffff;font-weight:normal;"><span class="g" style="width:2.95px"><span class="gi" style="font-size:6.37px;transform:scaleX(0.950);">1</span></span><span class="g" style="width:2.95px"><span class="gi" style="font-size:6.37px;transform:scaleX(0.950);">1</span></span></div>
<div class="c" style="left:611.38px;top:93.50px;background:#32cd32"></div>
<div class="a t" style="left:619.18px;top:96.71px;font-size:5.90px;color:#ffffff;font-weight:normal;"><span class="g" style="width:2.95px"><span class="gi" style="font-size:6.37px;transform:scaleX(0.950);">1</span></span><span class="g" style="width:2.95px"><span class="gi" style="font-size:6.37px;transform:scaleX(0.950);">2</span></span></div>
<div class="c" style="left:637.57px;top:93.50px;background:#32cd32"></div>
<div class="a t" style="left:645.37px;top:96.71px;font-size:5.90px;color:#ffffff;font-weight:normal;"><span class="g" style="width:2.95px"><span class="gi" style="font-size:6.37px;transform:scaleX(0.950);">1</span></span><span class="g" style="width:2.95px"><span class="gi" style="font-size:6.37px;transform:scaleX(0.950);">3</span></span></div>
<div class="c" style="left:663.76px;top:93.50px;background:#32cd32"></div>
<div class="a t" style="left:671.56px;top:96.71px;font-size:5.90px;color:#ffffff;font-weight:normal;"><span class="g" style="width:2.95px"><span class="gi" style="font-size:6.37px;transform:scaleX(0.950);">1</span></span><span class="g" style="width:2.95px"><span class="gi" style="font-size:6.37px;transform:scaleX(0.950);">4</span></span></div>
<div class="c" style="left:689.95px;top:93.50px;background:#32cd32"></div>
<div class="a t" style="left:697.75px;top:96.71px;font-size:5.90px;color:#ffffff;font-weight:normal;"><span class="g" style="width:2.95px"><span class="gi" style="font-size:6.37px;transform:scaleX(0.950);">1</span></span><span class="g" style="width:2.95px"><span class="gi" style="font-size:6.37px;transform:scaleX(0.950);">5</span></span></div>
<div class="c" style="left:716.14px;top:93.50px;background:#32cd32"></div>
<div class="a t" style="left:723.94px;top:96.71px;font-size:5.90px;color:#ffffff;font-weight:normal;"><span class="g" style="width:2.95px"><span class="gi" style="font-size:6.37px;transform:scaleX(0.950);">1</span></span><span class="g" style="width:2.95px"><span class="gi" style="font-size:6.37px;transform:scaleX(0.950);">6</span></span></div>
<div class="c" style="left:742.33px;top:93.50px;background:#32cd32"></div>
<div class="a t" style="left:750.13px;top:96.71px;font-size:5.90px;color:#ffffff;font-weight:normal;"><span class="g" style="width:2.95px"><span class="gi" style="font-size:6.37px;transform:scaleX(0.950);">1</span></span><span class="g" style="width:2.95px"><span class="gi" style="font-size:6.37px;transform:scaleX(0.950);">7</span></span></div>
<div class="c" style="left:768.52px;top:93.50px;background:#32cd32"></div>
<div class="a t" style="left:776.32px;top:96.71px;font-size:5.90px;color:#ffffff;font-weight:normal;"><span class="g" style="width:2.95px"><span class="gi" style="font-size:6.37px;transform:scaleX(0.950);">1</span></span><span class="g" style="width:2.95px"><span class="gi" style="font-size:6.37px;transform:scaleX(0.950);">8</span></span></div>
<div class="c" style="left:297.10px;top:110.10px;background:#32cd32"></div>
<div class="a t" style="left:304.90px;top:113.31px;font-size:5.90px;color:#ffffff;font-weight:normal;"><span class="g" style="width:2.95px"><span class="gi" style="font-size:6.37px;transform:scaleX(0.950);">1</span></span><span class="g" style="width:2.95px"><span class="gi" style="font-size:6.37px;transform:scaleX(0.950);">9</span></span></div>
<div class="c" style="left:323.29px;top:110.10px;background:#32cd32"></div>
<div class="a t" style="left:331.09px;top:113.31px;font-size:5.90px;color:#ffffff;font-weight:normal;"><span class="g" style="width:2.95px"><span class="gi" style="font-size:6.37px;transform:scaleX(0.950);">2</span></span><span class="g" style="width:2.95px"><span class="gi" style="font-size:6.37px;transform:scaleX(0.950);">0</span></span></div>
<div class="c" style="left:349.48px;top:110.10px;background:#32cd32"></div>
<div class="a t" style="left:357.28px;top:113.31px;font-size:5.90px;color:#ffffff;font-weight:normal;"><span class="g" style="width:2.95px"><span class="gi" style="font-size:6.37px;transform:scaleX(0.950);">2</span></span><span class="g" style="width:2.95px"><span class="gi" style="font-size:6.37px;transform:scaleX(0.950);">1</span></span></div>
<div class="c" style="left:375.67px;top:110.10px;background:#32cd32"></div>
<div class="a t" style="left:383.47px;top:113.31px;font-size:5.90px;color:#ffffff;font-weight:normal;"><span class="g" style="width:2.95px"><span class="gi" style="font-size:6.37px;transform:scaleX(0.950);">2</span></span><span class="g" style="width:2.95px"><span class="gi" style="font-size:6.37px;transform:scaleX(0.950);">2</span></span></div>
<div class="c" style="left:401.86px;top:110.10px;background:#32cd32"></div>
<div class="a t" style="left:409.66px;top:113.31px;font-size:5.90px;color:#ffffff;font-weight:normal;"><span class="g" style="width:2.95px"><span class="gi" style="font-size:6.37px;transform:scaleX(0.950);">2</span></span><span class="g" style="width:2.95px"><span class="gi" style="font-size:6.37px;transform:scaleX(0.950);">3</span></span></div>
<div class="c" style="left:428.05px;top:110.10px;background:#32cd32"></div>
<div class="a t" style="left:435.85px;top:113.31px;font-size:5.90px;color:#ffffff;font-weight:normal;"><span class="g" style="width:2.95px"><span class="gi" style="font-size:6.37px;transform:scaleX(0.950);">2</span></span><span class="g" style="width:2.95px"><span class="gi" style="font-size:6.37px;transform:scaleX(0.950);">4</span></span></div>
<div class="c" style="left:454.24px;top:110.10px;background:#32cd32"></div>
<div class="a t" style="left:462.04px;top:113.31px;font-size:5.90px;color:#ffffff;font-weight:normal;"><span class="g" style="width:2.95px"><span class="gi" style="font-size:6.37px;transform:scaleX(0.950);">2</span></span><span class="g" style="width:2.95px"><span class="gi" style="font-size:6.37px;transform:scaleX(0.950);">5</span></span></div>
<div class="c" style="left:480.43px;top:110.10px;background:#32cd32"></div>
<div class="a t" style="left:488.23px;top:113.31px;font-size:5.90px;color:#ffffff;font-weight:normal;"><span class="g" style="width:2.95px"><span class="gi" style="font-size:6.37px;transform:scaleX(0.950);">2</span></span><span class="g" style="width:2.95px"><span class="gi" style="font-size:6.37px;transform:scaleX(0.950);">6</span></span></div>
<div class="c" style="left:506.62px;top:110.10px;background:#32cd32"></div>
<div class="a t" style="left:514.42px;top:113.31px;font-size:5.90px;color:#ffffff;font-weight:normal;"><span class="g" style="width:2.95px"><span class="gi" style="font-size:6.37px;transform:scaleX(0.950);">2</span></span><span class="g" style="width:2.95px"><span class="gi" style="font-size:6.37px;transform:scaleX(0.950);">7</span></span></div>
<div class="c" style="left:532.81px;top:110.10px;background:#32cd32"></div>
<div class="a t" style="left:540.61px;top:113.31px;font-size:5.90px;color:#ffffff;font-weight:normal;"><span class="g" style="width:2.95px"><span class="gi" style="font-size:6.37px;transform:scaleX(0.950);">2</span></span><span class="g" style="width:2.95px"><span class="gi" style="font-size:6.37px;transform:scaleX(0.950);">8</span></span></div>
<div class="c" style="left:559.00px;top:110.10px;background:#ff4500"></div>
<div class="a t" style="left:566.80px;top:113.31px;font-size:5.90px;color:#ffffff;font-weight:normal;"><span class="g" style="width:2.95px"><span class="gi" style="font-size:6.37px;transform:scaleX(0.950);">2</span></span><span class="g" style="width:2.95px"><span class="gi" style="font-size:6.37px;transform:scaleX(0.950);">9</span></span></div>
<div class="c" style="left:585.19px;top:110.10px;background:#ff4500"></div>
<div class="a t" style="left:592.99px;top:113.31px;font-size:5.90px;color:#ffffff;font-weight:normal;"><span class="g" style="width:2.95px"><span class="gi" style="font-size:6.37px;transform:scaleX(0.950);">3</span></span><span class="g" style="width:2.95px"><span class="gi" style="font-size:6.37px;transform:scaleX(0.950);">0</span></span></div>
<div class="c" style="left:611.38px;top:110.10px;background:#32cd32"></div>
<div class="a t" style="left:619.18px;top:113.31px;font-size:5.90px;color:#ffffff;font-weight:normal;"><span class="g" style="width:2.95px"><span class="gi" style="font-size:6.37px;transform:scaleX(0.950);">3</span></span><span class="g" style="width:2.95px"><span class="gi" style="font-size:6.37px;transform:scaleX(0.950);">1</span></span></div>
<div class="c" style="left:637.57px;top:110.10px;background:#32cd32"></div>
<div class="a t" style="left:645.37px;top:113.31px;font-size:5.90px;color:#ffffff;font-weight:normal;"><span class="g" style="width:2.95px"><span class="gi" style="font-size:6.37px;transform:scaleX(0.950);">3</span></span><span class="g" style="width:2.95px"><span class="gi" style="font-size:6.37px;transform:scaleX(0.950);">2</span></span></div>
<div class="c" style="left:663.76px;top:110.10px;background:#32cd32"></div>
<div class="a t" style="left:671.56px;top:113.31px;font-size:5.90px;color:#ffffff;font-weight:normal;"><span class="g" style="width:2.95px"><span class="gi" style="font-size:6.37px;transform:scaleX(0.950);">3</span></span><span class="g" style="width:2.95px"><span class="gi" style="font-size:6.37px;transform:scaleX(0.950);">3</span></span></div>
<div class="c" style="left:689.95px;top:110.10px;background:#32cd32"></div>
<div class="a t" style="left:697.75px;top:113.31px;font-size:5.90px;color:#ffffff;font-weight:normal;"><span class="g" style="width:2.95px"><span class="gi" style="font-size:6.37px;transform:scaleX(0.950);">3</span></span><span class="g" style="width:2.95px"><span class="gi" style="font-size:6.37px;transform:scaleX(0.950);">4</span></span></div>
<div class="c" style="left:716.14px;top:110.10px;background:#32cd32"></div>
<div class="a t" style="left:723.94px;top:113.31px;font-size:5.90px;color:#ffffff;font-weight:normal;"><span class="g" style="width:2.95px"><span class="gi" style="font-size:6.37px;transform:scaleX(0.950);">3</span></span><span class="g" style="width:2.95px"><span class="gi" style="font-size:6.37px;transform:scaleX(0.950);">5</span></span></div>
<div class="c" style="left:742.33px;top:110.10px;background:#32cd32"></div>
<div class="a t" style="left:750.13px;top:113.31px;font-size:5.90px;color:#ffffff;font-weight:normal;"><span class="g" style="width:2.95px"><span class="gi" style="font-size:6.37px;transform:scaleX(0.950);">3</span></span><span class="g" style="width:2.95px"><span class="gi" style="font-size:6.37px;transform:scaleX(0.950);">6</span></span></div>
<div class="c" style="left:768.52px;top:110.10px;background:#32cd32"></div>
<div class="a t" style="left:776.32px;top:113.31px;font-size:5.90px;color:#ffffff;font-weight:normal;"><span class="g" style="width:2.95px"><span class="gi" style="font-size:6.37px;transform:scaleX(0.950);">3</span></span><span class="g" style="width:2.95px"><span class="gi" style="font-size:6.37px;transform:scaleX(0.950);">7</span></span></div>
<div class="c" style="left:297.10px;top:126.70px;background:#32cd32"></div>
<div class="a t" style="left:304.90px;top:129.91px;font-size:5.90px;color:#ffffff;font-weight:normal;"><span class="g" style="width:2.95px"><span class="gi" style="font-size:6.37px;transform:scaleX(0.950);">3</span></span><span class="g" style="width:2.95px"><span class="gi" style="font-size:6.37px;transform:scaleX(0.950);">8</span></span></div>
<div class="c" style="left:323.29px;top:126.70px;background:#32cd32"></div>
<div class="a t" style="left:331.09px;top:129.91px;font-size:5.90px;color:#ffffff;font-weight:normal;"><span class="g" style="width:2.95px"><span class="gi" style="font-size:6.37px;transform:scaleX(0.950);">3</span></span><span class="g" style="width:2.95px"><span class="gi" style="font-size:6.37px;transform:scaleX(0.950);">9</span></span></div>
<div class="c" style="left:349.48px;top:126.70px;background:#32cd32"></div>
<div class="a t" style="left:357.28px;top:129.91px;font-size:5.90px;color:#ffffff;font-weight:normal;"><span class="g" style="width:2.95px"><span class="gi" style="font-size:6.37px;transform:scaleX(0.950);">4</span></span><span class="g" style="width:2.95px"><span class="gi" style="font-size:6.37px;transform:scaleX(0.950);">0</span></span></div>
<div class="c" style="left:375.67px;top:126.70px;background:#32cd32"></div>
<div class="a t" style="left:383.47px;top:129.91px;font-size:5.90px;color:#ffffff;font-weight:normal;"><span class="g" style="width:2.95px"><span class="gi" style="font-size:6.37px;transform:scaleX(0.950);">4</span></span><span class="g" style="width:2.95px"><span class="gi" style="font-size:6.37px;transform:scaleX(0.950);">1</span></span></div>
<div class="c" style="left:401.86px;top:126.70px;background:#32cd32"></div>
<div class="a t" style="left:409.66px;top:129.91px;font-size:5.90px;color:#ffffff;font-weight:normal;"><span class="g" style="width:2.95px"><span class="gi" style="font-size:6.37px;transform:scaleX(0.950);">4</span></span><span class="g" style="width:2.95px"><span class="gi" style="font-size:6.37px;transform:scaleX(0.950);">2</span></span></div>
<div class="c" style="left:428.05px;top:126.70px;background:#32cd32"></div>
<div class="a t" style="left:435.85px;top:129.91px;font-size:5.90px;color:#ffffff;font-weight:normal;"><span class="g" style="width:2.95px"><span class="gi" style="font-size:6.37px;transform:scaleX(0.950);">4</span></span><span class="g" style="width:2.95px"><span class="gi" style="font-size:6.37px;transform:scaleX(0.950);">3</span></span></div>
<div class="c" style="left:454.24px;top:126.70px;background:#32cd32"></div>
<div class="a t" style="left:462.04px;top:129.91px;font-size:5.90px;color:#ffffff;font-weight:normal;"><span class="g" style="width:2.95px"><span class="gi" style="font-size:6.37px;transform:scaleX(0.950);">4</span></span><span class="g" style="width:2.95px"><span class="gi" style="font-size:6.37px;transform:scaleX(0.950);">4</span></span></div>
<div class="c" style="left:480.43px;top:126.70px;background:#32cd32"></div>
<div class="a t" style="left:488.23px;top:129.91px;font-size:5.90px;color:#ffffff;font-weight:normal;"><span class="g" style="width:2.95px"><span class="gi" style="font-size:6.37px;transform:scaleX(0.950);">4</span></span><span class="g" style="width:2.95px"><span class="gi" style="font-size:6.37px;transform:scaleX(0.950);">5</span></span></div>
<div class="c" style="left:506.62px;top:126.70px;background:#32cd32"></div>
<div class="a t" style="left:514.42px;top:129.91px;font-size:5.90px;color:#ffffff;font-weight:normal;"><span class="g" style="width:2.95px"><span class="gi" style="font-size:6.37px;transform:scaleX(0.950);">4</span></span><span class="g" style="width:2.95px"><span class="gi" style="font-size:6.37px;transform:scaleX(0.950);">6</span></span></div>
<div class="c" style="left:532.81px;top:126.70px;background:#32cd32"></div>
<div class="a t" style="left:540.61px;top:129.91px;font-size:5.90px;color:#ffffff;font-weight:normal;"><span class="g" style="width:2.95px"><span class="gi" style="font-size:6.37px;transform:scaleX(0.950);">4</span></span><span class="g" style="width:2.95px"><span class="gi" style="font-size:6.37px;transform:scaleX(0.950);">7</span></span></div>
<div class="c" style="left:559.00px;top:126.70px;background:#ff4500"></div>
<div class="a t" style="left:566.80px;top:129.91px;font-size:5.90px;color:#ffffff;font-weight:normal;"><span class="g" style="width:2.95px"><span class="gi" style="font-size:6.37px;transform:scaleX(0.950);">4</span></span><span class="g" style="width:2.95px"><span class="gi" style="font-size:6.37px;transform:scaleX(0.950);">8</span></span></div>
<div class="c" style="left:585.19px;top:126.70px;background:#ff4500"></div>
<div class="a t" style="left:592.99px;top:129.91px;font-size:5.90px;color:#ffffff;font-weight:normal;"><span class="g" style="width:2.95px"><span class="gi" style="font-size:6.37px;transform:scaleX(0.950);">4</span></span><span class="g" style="width:2.95px"><span class="gi" style="font-size:6.37px;transform:scaleX(0.950);">9</span></span></div>
<div class="c" style="left:611.38px;top:126.70px;background:#32cd32"></div>
<div class="a t" style="left:619.18px;top:129.91px;font-size:5.90px;color:#ffffff;font-weight:normal;"><span class="g" style="width:2.95px"><span class="gi" style="font-size:6.37px;transform:scaleX(0.950);">5</span></span><span class="g" style="width:2.95px"><span class="gi" style="font-size:6.37px;transform:scaleX(0.950);">0</span></span></div>
<div class="c" style="left:637.57px;top:126.70px;background:#32cd32"></div>
<div class="a t" style="left:645.37px;top:129.91px;font-size:5.90px;color:#ffffff;font-weight:normal;"><span class="g" style="width:2.95px"><span class="gi" style="font-size:6.37px;transform:scaleX(0.950);">5</span></span><span class="g" style="width:2.95px"><span class="gi" style="font-size:6.37px;transform:scaleX(0.950);">1</span></span></div>
<div class="c" style="left:663.76px;top:126.70px;background:#32cd32"></div>
<div class="a t" style="left:671.56px;top:129.91px;font-size:5.90px;color:#ffffff;font-weight:normal;"><span class="g" style="width:2.95px"><span class="gi" style="font-size:6.37px;transform:scaleX(0.950);">5</span></span><span class="g" style="width:2.95px"><span class="gi" style="font-size:6.37px;transform:scaleX(0.950);">2</span></span></div>
<div class="c" style="left:689.95px;top:126.70px;background:#32cd32"></div>
<div class="a t" style="left:697.75px;top:129.91px;font-size:5.90px;color:#ffffff;font-weight:normal;"><span class="g" style="width:2.95px"><span class="gi" style="font-size:6.37px;transform:scaleX(0.950);">5</span></span><span class="g" style="width:2.95px"><span class="gi" style="font-size:6.37px;transform:scaleX(0.950);">3</span></span></div>
<div class="c" style="left:716.14px;top:126.70px;background:#32cd32"></div>
<div class="a t" style="left:723.94px;top:129.91px;font-size:5.90px;color:#ffffff;font-weight:normal;"><span class="g" style="width:2.95px"><span class="gi" style="font-size:6.37px;transform:scaleX(0.950);">5</span></span><span class="g" style="width:2.95px"><span class="gi" style="font-size:6.37px;transform:scaleX(0.950);">4</span></span></div>
<div class="c" style="left:742.33px;top:126.70px;background:#32cd32"></div>
<div class="a t" style="left:750.13px;top:129.91px;font-size:5.90px;color:#ffffff;font-weight:normal;"><span class="g" style="width:2.95px"><span class="gi" style="font-size:6.37px;transform:scaleX(0.950);">5</span></span><span class="g" style="width:2.95px"><span class="gi" style="font-size:6.37px;transform:scaleX(0.950);">5</span></span></div>
<div class="c" style="left:768.52px;top:126.70px;background:#32cd32"></div>
<div class="a t" style="left:776.32px;top:129.91px;font-size:5.90px;color:#ffffff;font-weight:normal;"><span class="g" style="width:2.95px"><span class="gi" style="font-size:6.37px;transform:scaleX(0.950);">5</span></span><span class="g" style="width:2.95px"><span class="gi" style="font-size:6.37px;transform:scaleX(0.950);">6</span></span></div>
<div class="c" style="left:297.10px;top:143.30px;background:#32cd32"></div>
<div class="a t" style="left:304.90px;top:146.51px;font-size:5.90px;color:#ffffff;font-weight:normal;"><span class="g" style="width:2.95px"><span class="gi" style="font-size:6.37px;transform:scaleX(0.950);">5</span></span><span class="g" style="width:2.95px"><span class="gi" style="font-size:6.37px;transform:scaleX(0.950);">7</span></span></div>
<div class="c" style="left:323.29px;top:143.30px;background:#32cd32"></div>
<div class="a t" style="left:331.09px;top:146.51px;font-size:5.90px;color:#ffffff;font-weight:normal;"><span class="g" style="width:2.95px"><span class="gi" style="font-size:6.37px;transform:scaleX(0.950);">5</span></span><span class="g" style="width:2.95px"><span class="gi" style="font-size:6.37px;transform:scaleX(0.950);">8</span></span></div>
<div class="c" style="left:349.48px;top:143.30px;background:#32cd32"></div>
<div class="a t" style="left:357.28px;top:146.51px;font-size:5.90px;color:#ffffff;font-weight:normal;"><span class="g" style="width:2.95px"><span class="gi" style="font-size:6.37px;transform:scaleX(0.950);">5</span></span><span class="g" style="width:2.95px"><span class="gi" style="font-size:6.37px;transform:scaleX(0.950);">9</span></span></div>
<div class="c" style="left:375.67px;top:143.30px;background:#32cd32"></div>
<div class="a t" style="left:383.47px;top:146.51px;font-size:5.90px;color:#ffffff;font-weight:normal;"><span class="g" style="width:2.95px"><span class="gi" style="font-size:6.37px;transform:scaleX(0.950);">6</span></span><span class="g" style="width:2.95px"><span class="gi" style="font-size:6.37px;transform:scaleX(0.950);">0</span></span></div>
<div class="c" style="left:401.86px;top:143.30px;background:#32cd32"></div>
<div class="a t" style="left:409.66px;top:146.51px;font-size:5.90px;color:#ffffff;font-weight:normal;"><span class="g" style="width:2.95px"><span class="gi" style="font-size:6.37px;transform:scaleX(0.950);">6</span></span><span class="g" style="width:2.95px"><span class="gi" style="font-size:6.37px;transform:scaleX(0.950);">1</span></span></div>
<div class="c" style="left:428.05px;top:143.30px;background:#32cd32"></div>
<div class="a t" style="left:435.85px;top:146.51px;font-size:5.90px;color:#ffffff;font-weight:normal;"><span class="g" style="width:2.95px"><span class="gi" style="font-size:6.37px;transform:scaleX(0.950);">6</span></span><span class="g" style="width:2.95px"><span class="gi" style="font-size:6.37px;transform:scaleX(0.950);">2</span></span></div>
<div class="c" style="left:454.24px;top:143.30px;background:#32cd32"></div>
<div class="a t" style="left:462.04px;top:146.51px;font-size:5.90px;color:#ffffff;font-weight:normal;"><span class="g" style="width:2.95px"><span class="gi" style="font-size:6.37px;transform:scaleX(0.950);">6</span></span><span class="g" style="width:2.95px"><span class="gi" style="font-size:6.37px;transform:scaleX(0.950);">3</span></span></div>
<div class="c" style="left:480.43px;top:143.30px;background:#32cd32"></div>
<div class="a t" style="left:488.23px;top:146.51px;font-size:5.90px;color:#ffffff;font-weight:normal;"><span class="g" style="width:2.95px"><span class="gi" style="font-size:6.37px;transform:scaleX(0.950);">6</span></span><span class="g" style="width:2.95px"><span class="gi" style="font-size:6.37px;transform:scaleX(0.950);">4</span></span></div>
<div class="c" style="left:506.62px;top:143.30px;background:#32cd32"></div>
<div class="a t" style="left:514.42px;top:146.51px;font-size:5.90px;color:#ffffff;font-weight:normal;"><span class="g" style="width:2.95px"><span class="gi" style="font-size:6.37px;transform:scaleX(0.950);">6</span></span><span class="g" style="width:2.95px"><span class="gi" style="font-size:6.37px;transform:scaleX(0.950);">5</span></span></div>
<div class="c" style="left:532.81px;top:143.30px;background:#32cd32"></div>
<div class="a t" style="left:540.61px;top:146.51px;font-size:5.90px;color:#ffffff;font-weight:normal;"><span class="g" style="width:2.95px"><span class="gi" style="font-size:6.37px;transform:scaleX(0.950);">6</span></span><span class="g" style="width:2.95px"><span class="gi" style="font-size:6.37px;transform:scaleX(0.950);">6</span></span></div>
<div class="c" style="left:559.00px;top:143.30px;background:#ff4500"></div>
<div class="a t" style="left:566.80px;top:146.51px;font-size:5.90px;color:#ffffff;font-weight:normal;"><span class="g" style="width:2.95px"><span class="gi" style="font-size:6.37px;transform:scaleX(0.950);">6</span></span><span class="g" style="width:2.95px"><span class="gi" style="font-size:6.37px;transform:scaleX(0.950);">7</span></span></div>
<div class="c" style="left:585.19px;top:143.30px;background:#ff4500"></div>
<div class="a t" style="left:592.99px;top:146.51px;font-size:5.90px;color:#ffffff;font-weight:normal;"><span class="g" style="width:2.95px"><span class="gi" style="font-size:6.37px;transform:scaleX(0.950);">6</span></span><span class="g" style="width:2.95px"><span class="gi" style="font-size:6.37px;transform:scaleX(0.950);">8</span></span></div>
<div class="c" style="left:611.38px;top:143.30px;background:#32cd32"></div>
<div class="a t" style="left:619.18px;top:146.51px;font-size:5.90px;color:#ffffff;font-weight:normal;"><span class="g" style="width:2.95px"><span class="gi" style="font-size:6.37px;transform:scaleX(0.950);">6</span></span><span class="g" style="width:2.95px"><span class="gi" style="font-size:6.37px;transform:scaleX(0.950);">9</span></span></div>
<div class="c" style="left:637.57px;top:143.30px;background:#32cd32"></div>
<div class="a t" style="left:645.37px;top:146.51px;font-size:5.90px;color:#ffffff;font-weight:normal;"><span class="g" style="width:2.95px"><span class="gi" style="font-size:6.37px;transform:scaleX(0.950);">7</span></span><span class="g" style="width:2.95px"><span class="gi" style="font-size:6.37px;transform:scaleX(0.950);">0</span></span></div>
<div class="c" style="left:663.76px;top:143.30px;background:#32cd32"></div>
<div class="a t" style="left:671.56px;top:146.51px;font-size:5.90px;color:#ffffff;font-weight:normal;"><span class="g" style="width:2.95px"><span class="gi" style="font-size:6.37px;transform:scaleX(0.950);">7</span></span><span class="g" style="width:2.95px"><span class="gi" style="font-size:6.37px;transform:scaleX(0.950);">1</span></span></div>
<div class="c" style="left:689.95px;top:143.30px;background:#32cd32"></div>
<div class="a t" style="left:697.75px;top:146.51px;font-size:5.90px;color:#ffffff;font-weight:normal;"><span class="g" style="width:2.95px"><span class="gi" style="font-size:6.37px;transform:scaleX(0.950);">7</span></span><span class="g" style="width:2.95px"><span class="gi" style="font-size:6.37px;transform:scaleX(0.950);">2</span></span></div>
<div class="c" style="left:716.14px;top:143.30px;background:#32cd32"></div>
<div class="a t" style="left:723.94px;top:146.51px;font-size:5.90px;color:#ffffff;font-weight:normal;"><span class="g" style="width:2.95px"><span class="gi" style="font-size:6.37px;transform:scaleX(0.950);">7</span></span><span class="g" style="width:2.95px"><span class="gi" style="font-size:6.37px;transform:scaleX(0.950);">3</span></span></div>
<div class="c" style="left:742.33px;top:143.30px;background:#32cd32"></div>
<div class="a t" style="left:750.13px;top:146.51px;font-size:5.90px;color:#ffffff;font-weight:normal;"><span class="g" style="width:2.95px"><span class="gi" style="font-size:6.37px;transform:scaleX(0.950);">7</span></span><span class="g" style="width:2.95px"><span class="gi" style="font-size:6.37px;transform:scaleX(0.950);">4</span></span></div>
<div class="c" style="left:768.52px;top:143.30px;background:#32cd32"></div>
<div class="a t" style="left:776.32px;top:146.51px;font-size:5.90px;color:#ffffff;font-weight:normal;"><span class="g" style="width:2.95px"><span class="gi" style="font-size:6.37px;transform:scaleX(0.950);">7</span></span><span class="g" style="width:2.95px"><span class="gi" style="font-size:6.37px;transform:scaleX(0.950);">5</span></span></div>
<div class="c" style="left:297.10px;top:159.90px;background:#32cd32"></div>
<div class="a t" style="left:304.90px;top:163.11px;font-size:5.90px;color:#ffffff;font-weight:normal;"><span class="g" style="width:2.95px"><span class="gi" style="font-size:6.37px;transform:scaleX(0.950);">7</span></span><span class="g" style="width:2.95px"><span class="gi" style="font-size:6.37px;transform:scaleX(0.950);">6</span></span></div>
<div class="c" style="left:323.29px;top:159.90px;background:#32cd32"></div>
<div class="a t" style="left:331.09px;top:163.11px;font-size:5.90px;color:#ffffff;font-weight:normal;"><span class="g" style="width:2.95px"><span class="gi" style="font-size:6.37px;transform:scaleX(0.950);">7</span></span><span class="g" style="width:2.95px"><span class="gi" style="font-size:6.37px;transform:scaleX(0.950);">7</span></span></div>
<div class="c" style="left:349.48px;top:159.90px;background:#32cd32"></div>
<div class="a t" style="left:357.28px;top:163.11px;font-size:5.90px;color:#ffffff;font-weight:normal;"><span class="g" style="width:2.95px"><span class="gi" style="font-size:6.37px;transform:scaleX(0.950);">7</span></span><span class="g" style="width:2.95px"><span class="gi" style="font-size:6.37px;transform:scaleX(0.950);">8</span></span></div>
<div class="c" style="left:375.67px;top:159.90px;background:#32cd32"></div>
<div class="a t" style="left:383.47px;top:163.11px;font-size:5.90px;color:#ffffff;font-weight:normal;"><span class="g" style="width:2.95px"><span class="gi" style="font-size:6.37px;transform:scaleX(0.950);">7</span></span><span class="g" style="width:2.95px"><span class="gi" style="font-size:6.37px;transform:scaleX(0.950);">9</span></span></div>
<div class="c" style="left:401.86px;top:159.90px;background:#32cd32"></div>
<div class="a t" style="left:409.66px;top:163.11px;font-size:5.90px;color:#ffffff;font-weight:normal;"><span class="g" style="width:2.95px"><span class="gi" style="font-size:6.37px;transform:scaleX(0.950);">8</span></span><span class="g" style="width:2.95px"><span class="gi" style="font-size:6.37px;transform:scaleX(0.950);">0</span></span></div>
<div class="c" style="left:428.05px;top:159.90px;background:#32cd32"></div>
<div class="a t" style="left:435.85px;top:163.11px;font-size:5.90px;color:#ffffff;font-weight:normal;"><span class="g" style="width:2.95px"><span class="gi" style="font-size:6.37px;transform:scaleX(0.950);">8</span></span><span class="g" style="width:2.95px"><span class="gi" style="font-size:6.37px;transform:scaleX(0.950);">1</span></span></div>
<div class="c" style="left:454.24px;top:159.90px;background:#32cd32"></div>
<div class="a t" style="left:462.04px;top:163.11px;font-size:5.90px;color:#ffffff;font-weight:normal;"><span class="g" style="width:2.95px"><span class="gi" style="font-size:6.37px;transform:scaleX(0.950);">8</span></span><span class="g" style="width:2.95px"><span class="gi" style="font-size:6.37px;transform:scaleX(0.950);">2</span></span></div>
<div class="c" style="left:480.43px;top:159.90px;background:#32cd32"></div>
<div class="a t" style="left:488.23px;top:163.11px;font-size:5.90px;color:#ffffff;font-weight:normal;"><span class="g" style="width:2.95px"><span class="gi" style="font-size:6.37px;transform:scaleX(0.950);">8</span></span><span class="g" style="width:2.95px"><span class="gi" style="font-size:6.37px;transform:scaleX(0.950);">3</span></span></div>
<div class="c" style="left:506.62px;top:159.90px;background:#32cd32"></div>
<div class="a t" style="left:514.42px;top:163.11px;font-size:5.90px;color:#ffffff;font-weight:normal;"><span class="g" style="width:2.95px"><span class="gi" style="font-size:6.37px;transform:scaleX(0.950);">8</span></span><span class="g" style="width:2.95px"><span class="gi" style="font-size:6.37px;transform:scaleX(0.950);">4</span></span></div>
<div class="c" style="left:532.81px;top:159.90px;background:#32cd32"></div>
<div class="a t" style="left:540.61px;top:163.11px;font-size:5.90px;color:#ffffff;font-weight:normal;"><span class="g" style="width:2.95px"><span class="gi" style="font-size:6.37px;transform:scaleX(0.950);">8</span></span><span class="g" style="width:2.95px"><span class="gi" style="font-size:6.37px;transform:scaleX(0.950);">5</span></span></div>
<div class="c" style="left:559.00px;top:159.90px;background:#ff4500"></div>
<div class="a t" style="left:566.80px;top:163.11px;font-size:5.90px;color:#ffffff;font-weight:normal;"><span class="g" style="width:2.95px"><span class="gi" style="font-size:6.37px;transform:scaleX(0.950);">8</span></span><span class="g" style="width:2.95px"><span class="gi" style="font-size:6.37px;transform:scaleX(0.950);">6</span></span></div>
<div class="c" style="left:585.19px;top:159.90px;background:#ff4500"></div>
<div class="a t" style="left:592.99px;top:163.11px;font-size:5.90px;color:#ffffff;font-weight:normal;"><span class="g" style="width:2.95px"><span class="gi" style="font-size:6.37px;transform:scaleX(0.950);">8</span></span><span class="g" style="width:2.95px"><span class="gi" style="font-size:6.37px;transform:scaleX(0.950);">7</span></span></div>
<div class="c" style="left:611.38px;top:159.90px;background:#32cd32"></div>
<div class="a t" style="left:619.18px;top:163.11px;font-size:5.90px;color:#ffffff;font-weight:normal;"><span class="g" style="width:2.95px"><span class="gi" style="font-size:6.37px;transform:scaleX(0.950);">8</span></span><span class="g" style="width:2.95px"><span class="gi" style="font-size:6.37px;transform:scaleX(0.950);">8</span></span></div>
<div class="c" style="left:637.57px;top:159.90px;background:#32cd32"></div>
<div class="a t" style="left:645.37px;top:163.11px;font-size:5.90px;color:#ffffff;font-weight:normal;"><span class="g" style="width:2.95px"><span class="gi" style="font-size:6.37px;transform:scaleX(0.950);">8</span></span><span class="g" style="width:2.95px"><span class="gi" style="font-size:6.37px;transform:scaleX(0.950);">9</span></span></div>
<div class="c" style="left:663.76px;top:159.90px;background:#32cd32"></div>
<div class="a t" style="left:671.56px;top:163.11px;font-size:5.90px;color:#ffffff;font-weight:normal;"><span class="g" style="width:2.95px"><span class="gi" style="font-size:6.37px;transform:scaleX(0.950);">9</span></span><span class="g" style="width:2.95px"><span class="gi" style="font-size:6.37px;transform:scaleX(0.950);">0</span></span></div>
<div class="c" style="left:689.95px;top:159.90px;background:#32cd32"></div>
<div class="a t" style="left:697.75px;top:163.11px;font-size:5.90px;color:#ffffff;font-weight:normal;"><span class="g" style="width:2.95px"><span class="gi" style="font-size:6.37px;transform:scaleX(0.950);">9</span></span><span class="g" style="width:2.95px"><span class="gi" style="font-size:6.37px;transform:scaleX(0.950);">1</span></span></div>
<div class="c" style="left:716.14px;top:159.90px;background:#32cd32"></div>
<div class="a t" style="left:723.94px;top:163.11px;font-size:5.90px;color:#ffffff;font-weight:normal;"><span class="g" style="width:2.95px"><span class="gi" style="font-size:6.37px;transform:scaleX(0.950);">9</span></span><span class="g" style="width:2.95px"><span class="gi" style="font-size:6.37px;transform:scaleX(0.950);">2</span></span></div>
<div class="c" style="left:742.33px;top:159.90px;background:#32cd32"></div>
<div class="a t" style="left:750.13px;top:163.11px;font-size:5.90px;color:#ffffff;font-weight:normal;"><span class="g" style="width:2.95px"><span class="gi" style="font-size:6.37px;transform:scaleX(0.950);">9</span></span><span class="g" style="width:2.95px"><span class="gi" style="font-size:6.37px;transform:scaleX(0.950);">3</span></span></div>
<div class="c" style="left:768.52px;top:159.90px;background:#32cd32"></div>
<div class="a t" style="left:776.32px;top:163.11px;font-size:5.90px;color:#ffffff;font-weight:normal;"><span class="g" style="width:2.95px"><span class="gi" style="font-size:6.37px;transform:scaleX(0.950);">9</span></span><span class="g" style="width:2.95px"><span class="gi" style="font-size:6.37px;transform:scaleX(0.950);">4</span></span></div>
<div class="c" style="left:297.10px;top:176.50px;background:#32cd32"></div>
<div class="a t" style="left:304.90px;top:179.71px;font-size:5.90px;color:#ffffff;font-weight:normal;"><span class="g" style="width:2.95px"><span class="gi" style="font-size:6.37px;transform:scaleX(0.950);">9</span></span><span class="g" style="width:2.95px"><span class="gi" style="font-size:6.37px;transform:scaleX(0.950);">5</span></span></div>
<div class="c" style="left:323.29px;top:176.50px;background:#32cd32"></div>
<div class="a t" style="left:331.09px;top:179.71px;font-size:5.90px;color:#ffffff;font-weight:normal;"><span class="g" style="width:2.95px"><span class="gi" style="font-size:6.37px;transform:scaleX(0.950);">9</span></span><span class="g" style="width:2.95px"><span class="gi" style="font-size:6.37px;transform:scaleX(0.950);">6</span></span></div>
<div class="c" style="left:349.48px;top:176.50px;background:#32cd32"></div>
<div class="a t" style="left:357.28px;top:179.71px;font-size:5.90px;color:#ffffff;font-weight:normal;"><span class="g" style="width:2.95px"><span class="gi" style="font-size:6.37px;transform:scaleX(0.950);">9</span></span><span class="g" style="width:2.95px"><span class="gi" style="font-size:6.37px;transform:scaleX(0.950);">7</span></span></div>
<div class="c" style="left:375.67px;top:176.50px;background:#32cd32"></div>
<div class="a t" style="left:383.47px;top:179.71px;font-size:5.90px;color:#ffffff;font-weight:normal;"><span class="g" style="width:2.95px"><span class="gi" style="font-size:6.37px;transform:scaleX(0.950);">9</span></span><span class="g" style="width:2.95px"><span class="gi" style="font-size:6.37px;transform:scaleX(0.950);">8</span></span></div>
<div class="c" style="left:401.86px;top:176.50px;background:#32cd32"></div>
<div class="a t" style="left:409.66px;top:179.71px;font-size:5.90px;color:#ffffff;font-weight:normal;"><span class="g" style="width:2.95px"><span class="gi" style="font-size:6.37px;transform:scaleX(0.950);">9</span></span><span class="g" style="width:2.95px"><span class="gi" style="font-size:6.37px;transform:scaleX(0.950);">9</span></span></div>
<div class="c" style="left:428.05px;top:176.50px;background:#32cd32"></div>
<div class="a t" style="left:434.38px;top:179.71px;font-size:5.90px;color:#ffffff;font-weight:normal;"><span class="g" style="width:2.95px"><span class="gi" style="font-size:6.37px;transform:scaleX(0.950);">1</span></span><span class="g" style="width:2.95px"><span class="gi" style="font-size:6.37px;transform:scaleX(0.950);">0</span></span><span class="g" style="width:2.95px"><span class="gi" style="font-size:6.37px;transform:scaleX(0.950);">0</span></span></div>
<div class="c" style="left:454.24px;top:176.50px;background:#32cd32"></div>
<div class="a t" style="left:460.56px;top:179.71px;font-size:5.90px;color:#ffffff;font-weight:normal;"><span class="g" style="width:2.95px"><span class="gi" style="font-size:6.37px;transform:scaleX(0.950);">1</span></span><span class="g" style="width:2.95px"><span class="gi" style="font-size:6.37px;transform:scaleX(0.950);">0</span></span><span class="g" style="width:2.95px"><span class="gi" style="font-size:6.37px;transform:scaleX(0.950);">1</span></span></div>
<div class="c" style="left:480.43px;top:176.50px;background:#32cd32"></div>
<div class="a t" style="left:486.76px;top:179.71px;font-size:5.90px;color:#ffffff;font-weight:normal;"><span class="g" style="width:2.95px"><span class="gi" style="font-size:6.37px;transform:scaleX(0.950);">1</span></span><span class="g" style="width:2.95px"><span class="gi" style="font-size:6.37px;transform:scaleX(0.950);">0</span></span><span class="g" style="width:2.95px"><span class="gi" style="font-size:6.37px;transform:scaleX(0.950);">2</span></span></div>
<div class="c" style="left:506.62px;top:176.50px;background:#32cd32"></div>
<div class="a t" style="left:512.95px;top:179.71px;font-size:5.90px;color:#ffffff;font-weight:normal;"><span class="g" style="width:2.95px"><span class="gi" style="font-size:6.37px;transform:scaleX(0.950);">1</span></span><span class="g" style="width:2.95px"><span class="gi" style="font-size:6.37px;transform:scaleX(0.950);">0</span></span><span class="g" style="width:2.95px"><span class="gi" style="font-size:6.37px;transform:scaleX(0.950);">3</span></span></div>
<div class="c" style="left:532.81px;top:176.50px;background:#32cd32"></div>
<div class="a t" style="left:539.14px;top:179.71px;font-size:5.90px;color:#ffffff;font-weight:normal;"><span class="g" style="width:2.95px"><span class="gi" style="font-size:6.37px;transform:scaleX(0.950);">1</span></span><span class="g" style="width:2.95px"><span class="gi" style="font-size:6.37px;transform:scaleX(0.950);">0</span></span><span class="g" style="width:2.95px"><span class="gi" style="font-size:6.37px;transform:scaleX(0.950);">4</span></span></div>
<div class="c" style="left:559.00px;top:176.50px;background:#ff4500"></div>
<div class="a t" style="left:565.33px;top:179.71px;font-size:5.90px;color:#ffffff;font-weight:normal;"><span class="g" style="width:2.95px"><span class="gi" style="font-size:6.37px;transform:scaleX(0.950);">1</span></span><span class="g" style="width:2.95px"><span class="gi" style="font-size:6.37px;transform:scaleX(0.950);">0</span></span><span class="g" style="width:2.95px"><span class="gi" style="font-size:6.37px;transform:scaleX(0.950);">5</span></span></div>
<div class="c" style="left:585.19px;top:176.50px;background:#ff4500"></div>
<div class="a t" style="left:591.52px;top:179.71px;font-size:5.90px;color:#ffffff;font-weight:normal;"><span class="g" style="width:2.95px"><span class="gi" style="font-size:6.37px;transform:scaleX(0.950);">1</span></span><span class="g" style="width:2.95px"><span class="gi" style="font-size:6.37px;transform:scaleX(0.950);">0</span></span><span class="g" style="width:2.95px"><span class="gi" style="font-size:6.37px;transform:scaleX(0.950);">6</span></span></div>
<div class="c" style="left:611.38px;top:176.50px;background:#32cd32"></div>
<div class="a t" style="left:617.71px;top:179.71px;font-size:5.90px;color:#ffffff;font-weight:normal;"><span class="g" style="width:2.95px"><span class="gi" style="font-size:6.37px;transform:scaleX(0.950);">1</span></span><span class="g" style="width:2.95px"><span class="gi" style="font-size:6.37px;transform:scaleX(0.950);">0</span></span><span class="g" style="width:2.95px"><span class="gi" style="font-size:6.37px;transform:scaleX(0.950);">7</span></span></div>
<div class="c" style="left:637.57px;top:176.50px;background:#32cd32"></div>
<div class="a t" style="left:643.90px;top:179.71px;font-size:5.90px;color:#ffffff;font-weight:normal;"><span class="g" style="width:2.95px"><span class="gi" style="font-size:6.37px;transform:scaleX(0.950);">1</span></span><span class="g" style="width:2.95px"><span class="gi" style="font-size:6.37px;transform:scaleX(0.950);">0</span></span><span class="g" style="width:2.95px"><span class="gi" style="font-size:6.37px;transform:scaleX(0.950);">8</span></span></div>
<div class="c" style="left:663.76px;top:176.50px;background:#32cd32"></div>
<div class="a t" style="left:670.09px;top:179.71px;font-size:5.90px;color:#ffffff;font-weight:normal;"><span class="g" style="width:2.95px"><span class="gi" style="font-size:6.37px;transform:scaleX(0.950);">1</span></span><span class="g" style="width:2.95px"><span class="gi" style="font-size:6.37px;transform:scaleX(0.950);">0</span></span><span class="g" style="width:2.95px"><span class="gi" style="font-size:6.37px;transform:scaleX(0.950);">9</span></span></div>
<div class="c" style="left:689.95px;top:176.50px;background:#32cd32"></div>
<div class="a t" style="left:696.28px;top:179.71px;font-size:5.90px;color:#ffffff;font-weight:normal;"><span class="g" style="width:2.95px"><span class="gi" style="font-size:6.37px;transform:scaleX(0.950);">1</span></span><span class="g" style="width:2.95px"><span class="gi" style="font-size:6.37px;transform:scaleX(0.950);">1</span></span><span class="g" style="width:2.95px"><span class="gi" style="font-size:6.37px;transform:scaleX(0.950);">0</span></span></div>
<div class="c" style="left:716.14px;top:176.50px;background:#32cd32"></div>
<div class="a t" style="left:722.47px;top:179.71px;font-size:5.90px;color:#ffffff;font-weight:normal;"><span class="g" style="width:2.95px"><span class="gi" style="font-size:6.37px;transform:scaleX(0.950);">1</span></span><span class="g" style="width:2.95px"><span class="gi" style="font-size:6.37px;transform:scaleX(0.950);">1</span></span><span class="g" style="width:2.95px"><span class="gi" style="font-size:6.37px;transform:scaleX(0.950);">1</span></span></div>
<div class="c" style="left:742.33px;top:176.50px;background:#32cd32"></div>
<div class="a t" style="left:748.66px;top:179.71px;font-size:5.90px;color:#ffffff;font-weight:normal;"><span class="g" style="width:2.95px"><span class="gi" style="font-size:6.37px;transform:scaleX(0.950);">1</span></span><span class="g" style="width:2.95px"><span class="gi" style="font-size:6.37px;transform:scaleX(0.950);">1</span></span><span class="g" style="width:2.95px"><span class="gi" style="font-size:6.37px;transform:scaleX(0.950);">2</span></span></div>
<div class="c" style="left:768.52px;top:176.50px;background:#32cd32"></div>
<div class="a t" style="left:774.85px;top:179.71px;font-size:5.90px;color:#ffffff;font-weight:normal;"><span class="g" style="width:2.95px"><span class="gi" style="font-size:6.37px;transform:scaleX(0.950);">1</span></span><span class="g" style="width:2.95px"><span class="gi" style="font-size:6.37px;transform:scaleX(0.950);">1</span></span><span class="g" style="width:2.95px"><span class="gi" style="font-size:6.37px;transform:scaleX(0.950);">3</span></span></div>
<div class="c" style="left:297.10px;top:193.10px;background:#32cd32"></div>
<div class="a t" style="left:303.43px;top:196.31px;font-size:5.90px;color:#ffffff;font-weight:normal;"><span class="g" style="width:2.95px"><span class="gi" style="font-size:6.37px;transform:scaleX(0.950);">1</span></span><span class="g" style="width:2.95px"><span class="gi" style="font-size:6.37px;transform:scaleX(0.950);">1</span></span><span class="g" style="width:2.95px"><span class="gi" style="font-size:6.37px;transform:scaleX(0.950);">4</span></span></div>
<div class="c" style="left:323.29px;top:193.10px;background:#32cd32"></div>
<div class="a t" style="left:329.62px;top:196.31px;font-size:5.90px;color:#ffffff;font-weight:normal;"><span class="g" style="width:2.95px"><span class="gi" style="font-size:6.37px;transform:scaleX(0.950);">1</span></span><span class="g" style="width:2.95px"><span class="gi" style="font-size:6.37px;transform:scaleX(0.950);">1</span></span><span class="g" style="width:2.95px"><span class="gi" style="font-size:6.37px;transform:scaleX(0.950);">5</span></span></div>
<div class="c" style="left:349.48px;top:193.10px;background:#32cd32"></div>
<div class="a t" style="left:355.81px;top:196.31px;font-size:5.90px;color:#ffffff;font-weight:normal;"><span class="g" style="width:2.95px"><span class="gi" style="font-size:6.37px;transform:scaleX(0.950);">1</span></span><span class="g" style="width:2.95px"><span class="gi" style="font-size:6.37px;transform:scaleX(0.950);">1</span></span><span class="g" style="width:2.95px"><span class="gi" style="font-size:6.37px;transform:scaleX(0.950);">6</span></span></div>
<div class="c" style="left:375.67px;top:193.10px;background:#32cd32"></div>
<div class="a t" style="left:382.00px;top:196.31px;font-size:5.90px;color:#ffffff;font-weight:normal;"><span class="g" style="width:2.95px"><span class="gi" style="font-size:6.37px;transform:scaleX(0.950);">1</span></span><span class="g" style="width:2.95px"><span class="gi" style="font-size:6.37px;transform:scaleX(0.950);">1</span></span><span class="g" style="width:2.95px"><span class="gi" style="font-size:6.37px;transform:scaleX(0.950);">7</span></span></div>
<div class="c" style="left:401.86px;top:193.10px;background:#32cd32"></div>
<div class="a t" style="left:408.19px;top:196.31px;font-size:5.90px;color:#ffffff;font-weight:normal;"><span class="g" style="width:2.95px"><span class="gi" style="font-size:6.37px;transform:scaleX(0.950);">1</span></span><span class="g" style="width:2.95px"><span class="gi" style="font-size:6.37px;transform:scaleX(0.950);">1</span></span><span class="g" style="width:2.95px"><span class="gi" style="font-size:6.37px;transform:scaleX(0.950);">8</span></span></div>
<div class="c" style="left:428.05px;top:193.10px;background:#32cd32"></div>
<div class="a t" style="left:434.38px;top:196.31px;font-size:5.90px;color:#ffffff;font-weight:normal;"><span class="g" style="width:2.95px"><span class="gi" style="font-size:6.37px;transform:scaleX(0.950);">1</span></span><span class="g" style="width:2.95px"><span class="gi" style="font-size:6.37px;transform:scaleX(0.950);">1</span></span><span class="g" style="width:2.95px"><span class="gi" style="font-size:6.37px;transform:scaleX(0.950);">9</span></span></div>
<div class="c" style="left:454.24px;top:193.10px;background:#32cd32"></div>
<div class="a t" style="left:460.56px;top:196.31px;font-size:5.90px;color:#ffffff;font-weight:normal;"><span class="g" style="width:2.95px"><span class="gi" style="font-size:6.37px;transform:scaleX(0.950);">1</span></span><span class="g" style="width:2.95px"><span class="gi" style="font-size:6.37px;transform:scaleX(0.950);">2</span></span><span class="g" style="width:2.95px"><span class="gi" style="font-size:6.37px;transform:scaleX(0.950);">0</span></span></div>
<div class="c" style="left:480.43px;top:193.10px;background:#32cd32"></div>
<div class="a t" style="left:486.76px;top:196.31px;font-size:5.90px;color:#ffffff;font-weight:normal;"><span class="g" style="width:2.95px"><span class="gi" style="font-size:6.37px;transform:scaleX(0.950);">1</span></span><span class="g" style="width:2.95px"><span class="gi" style="font-size:6.37px;transform:scaleX(0.950);">2</span></span><span class="g" style="width:2.95px"><span class="gi" style="font-size:6.37px;transform:scaleX(0.950);">1</span></span></div>
<div class="c" style="left:506.62px;top:193.10px;background:#32cd32"></div>
<div class="a t" style="left:512.95px;top:196.31px;font-size:5.90px;color:#ffffff;font-weight:normal;"><span class="g" style="width:2.95px"><span class="gi" style="font-size:6.37px;transform:scaleX(0.950);">1</span></span><span class="g" style="width:2.95px"><span class="gi" style="font-size:6.37px;transform:scaleX(0.950);">2</span></span><span class="g" style="width:2.95px"><span class="gi" style="font-size:6.37px;transform:scaleX(0.950);">2</span></span></div>
<div class="c" style="left:532.81px;top:193.10px;background:#32cd32"></div>
<div class="a t" style="left:539.14px;top:196.31px;font-size:5.90px;color:#ffffff;font-weight:normal;"><span class="g" style="width:2.95px"><span class="gi" style="font-size:6.37px;transform:scaleX(0.950);">1</span></span><span class="g" style="width:2.95px"><span class="gi" style="font-size:6.37px;transform:scaleX(0.950);">2</span></span><span class="g" style="width:2.95px"><span class="gi" style="font-size:6.37px;transform:scaleX(0.950);">3</span></span></div>
<div class="c" style="left:559.00px;top:193.10px;background:#32cd32"></div>
<div class="a t" style="left:565.33px;top:196.31px;font-size:5.90px;color:#ffffff;font-weight:normal;"><span class="g" style="width:2.95px"><span class="gi" style="font-size:6.37px;transform:scaleX(0.950);">1</span></span><span class="g" style="width:2.95px"><span class="gi" style="font-size:6.37px;transform:scaleX(0.950);">2</span></span><span class="g" style="width:2.95px"><span class="gi" style="font-size:6.37px;transform:scaleX(0.950);">4</span></span></div>
<div class="c" style="left:585.19px;top:193.10px;background:#32cd32"></div>
<div class="a t" style="left:591.52px;top:196.31px;font-size:5.90px;color:#ffffff;font-weight:normal;"><span class="g" style="width:2.95px"><span class="gi" style="font-size:6.37px;transform:scaleX(0.950);">1</span></span><span class="g" style="width:2.95px"><span class="gi" style="font-size:6.37px;transform:scaleX(0.950);">2</span></span><span class="g" style="width:2.95px"><span class="gi" style="font-size:6.37px;transform:scaleX(0.950);">5</span></span></div>
<div class="c" style="left:611.38px;top:193.10px;background:#32cd32"></div>
<div class="a t" style="left:617.71px;top:196.31px;font-size:5.90px;color:#ffffff;font-weight:normal;"><span class="g" style="width:2.95px"><span class="gi" style="font-size:6.37px;transform:scaleX(0.950);">1</span></span><span class="g" style="width:2.95px"><span class="gi" style="font-size:6.37px;transform:scaleX(0.950);">2</span></span><span class="g" style="width:2.95px"><span class="gi" style="font-size:6.37px;transform:scaleX(0.950);">6</span></span></div>
<div class="c" style="left:637.57px;top:193.10px;background:#32cd32"></div>
<div class="a t" style="left:643.90px;top:196.31px;font-size:5.90px;color:#ffffff;font-weight:normal;"><span class="g" style="width:2.95px"><span class="gi" style="font-size:6.37px;transform:scaleX(0.950);">1</span></span><span class="g" style="width:2.95px"><span class="gi" style="font-size:6.37px;transform:scaleX(0.950);">2</span></span><span class="g" style="width:2.95px"><span class="gi" style="font-size:6.37px;transform:scaleX(0.950);">7</span></span></div>
<div class="c" style="left:663.76px;top:193.10px;background:#32cd32"></div>
<div class="a t" style="left:670.09px;top:196.31px;font-size:5.90px;color:#ffffff;font-weight:normal;"><span class="g" style="width:2.95px"><span class="gi" style="font-size:6.37px;transform:scaleX(0.950);">1</span></span><span class="g" style="width:2.95px"><span class="gi" style="font-size:6.37px;transform:scaleX(0.950);">2</span></span><span class="g" style="width:2.95px"><span class="gi" style="font-size:6.37px;transform:scaleX(0.950);">8</span></span></div>
<div class="c" style="left:689.95px;top:193.10px;background:#32cd32"></div>
<div class="a t" style="left:696.28px;top:196.31px;font-size:5.90px;color:#ffffff;font-weight:normal;"><span class="g" style="width:2.95px"><span class="gi" style="font-size:6.37px;transform:scaleX(0.950);">1</span></span><span class="g" style="width:2.95px"><span class="gi" style="font-size:6.37px;transform:scaleX(0.950);">2</span></span><span class="g" style="width:2.95px"><span class="gi" style="font-size:6.37px;transform:scaleX(0.950);">9</span></span></div>
<div class="c" style="left:716.14px;top:193.10px;background:#32cd32"></div>
<div class="a t" style="left:722.47px;top:196.31px;font-size:5.90px;color:#ffffff;font-weight:normal;"><span class="g" style="width:2.95px"><span class="gi" style="font-size:6.37px;transform:scaleX(0.950);">1</span></span><span class="g" style="width:2.95px"><span class="gi" style="font-size:6.37px;transform:scaleX(0.950);">3</span></span><span class="g" style="width:2.95px"><span class="gi" style="font-size:6.37px;transform:scaleX(0.950);">0</span></span></div>
<div class="c" style="left:742.33px;top:193.10px;background:#32cd32"></div>
<div class="a t" style="left:748.66px;top:196.31px;font-size:5.90px;color:#ffffff;font-weight:normal;"><span class="g" style="width:2.95px"><span class="gi" style="font-size:6.37px;transform:scaleX(0.950);">1</span></span><span class="g" style="width:2.95px"><span class="gi" style="font-size:6.37px;transform:scaleX(0.950);">3</span></span><span class="g" style="width:2.95px"><span class="gi" style="font-size:6.37px;transform:scaleX(0.950);">1</span></span></div>
<div class="c" style="left:768.52px;top:193.10px;background:#32cd32"></div>
<div class="a t" style="left:774.85px;top:196.31px;font-size:5.90px;color:#ffffff;font-weight:normal;"><span class="g" style="width:2.95px"><span class="gi" style="font-size:6.37px;transform:scaleX(0.950);">1</span></span><span class="g" style="width:2.95px"><span class="gi" style="font-size:6.37px;transform:scaleX(0.950);">3</span></span><span class="g" style="width:2.95px"><span class="gi" style="font-size:6.37px;transform:scaleX(0.950);">2</span></span></div>
<div class="c" style="left:297.10px;top:209.70px;background:#32cd32"></div>
<div class="a t" style="left:303.43px;top:212.91px;font-size:5.90px;color:#ffffff;font-weight:normal;"><span class="g" style="width:2.95px"><span class="gi" style="font-size:6.37px;transform:scaleX(0.950);">1</span></span><span class="g" style="width:2.95px"><span class="gi" style="font-size:6.37px;transform:scaleX(0.950);">3</span></span><span class="g" style="width:2.95px"><span class="gi" style="font-size:6.37px;transform:scaleX(0.950);">3</span></span></div>
<div class="c" style="left:323.29px;top:209.70px;background:#32cd32"></div>
<div class="a t" style="left:329.62px;top:212.91px;font-size:5.90px;color:#ffffff;font-weight:normal;"><span class="g" style="width:2.95px"><span class="gi" style="font-size:6.37px;transform:scaleX(0.950);">1</span></span><span class="g" style="width:2.95px"><span class="gi" style="font-size:6.37px;transform:scaleX(0.950);">3</span></span><span class="g" style="width:2.95px"><span class="gi" style="font-size:6.37px;transform:scaleX(0.950);">4</span></span></div>
<div class="c" style="left:349.48px;top:209.70px;background:#32cd32"></div>
<div class="a t" style="left:355.81px;top:212.91px;font-size:5.90px;color:#ffffff;font-weight:normal;"><span class="g" style="width:2.95px"><span class="gi" style="font-size:6.37px;transform:scaleX(0.950);">1</span></span><span class="g" style="width:2.95px"><span class="gi" style="font-size:6.37px;transform:scaleX(0.950);">3</span></span><span class="g" style="width:2.95px"><span class="gi" style="font-size:6.37px;transform:scaleX(0.950);">5</span></span></div>
<div class="c" style="left:375.67px;top:209.70px;background:#32cd32"></div>
<div class="a t" style="left:382.00px;top:212.91px;font-size:5.90px;color:#ffffff;font-weight:normal;"><span class="g" style="width:2.95px"><span class="gi" style="font-size:6.37px;transform:scaleX(0.950);">1</span></span><span class="g" style="width:2.95px"><span class="gi" style="font-size:6.37px;transform:scaleX(0.950);">3</span></span><span class="g" style="width:2.95px"><span class="gi" style="font-size:6.37px;transform:scaleX(0.950);">6</span></span></div>
<div class="c" style="left:401.86px;top:209.70px;background:#32cd32"></div>
<div class="a t" style="left:408.19px;top:212.91px;font-size:5.90px;color:#ffffff;font-weight:normal;"><span class="g" style="width:2.95px"><span class="gi" style="font-size:6.37px;transform:scaleX(0.950);">1</span></span><span class="g" style="width:2.95px"><span class="gi" style="font-size:6.37px;transform:scaleX(0.950);">3</span></span><span class="g" style="width:2.95px"><span class="gi" style="font-size:6.37px;transform:scaleX(0.950);">7</span></span></div>
<div class="c" style="left:428.05px;top:209.70px;background:#32cd32"></div>
<div class="a t" style="left:434.38px;top:212.91px;font-size:5.90px;color:#ffffff;font-weight:normal;"><span class="g" style="width:2.95px"><span class="gi" style="font-size:6.37px;transform:scaleX(0.950);">1</span></span><span class="g" style="width:2.95px"><span class="gi" style="font-size:6.37px;transform:scaleX(0.950);">3</span></span><span class="g" style="width:2.95px"><span class="gi" style="font-size:6.37px;transform:scaleX(0.950);">8</span></span></div>
<div class="c" style="left:454.24px;top:209.70px;background:#32cd32"></div>
<div class="a t" style="left:460.56px;top:212.91px;font-size:5.90px;color:#ffffff;font-weight:normal;"><span class="g" style="width:2.95px"><span class="gi" style="font-size:6.37px;transform:scaleX(0.950);">1</span></span><span class="g" style="width:2.95px"><span class="gi" style="font-size:6.37px;transform:scaleX(0.950);">3</span></span><span class="g" style="width:2.95px"><span class="gi" style="font-size:6.37px;transform:scaleX(0.950);">9</span></span></div>
<div class="c" style="left:480.43px;top:209.70px;background:#32cd32"></div>
<div class="a t" style="left:486.76px;top:212.91px;font-size:5.90px;color:#ffffff;font-weight:normal;"><span class="g" style="width:2.95px"><span class="gi" style="font-size:6.37px;transform:scaleX(0.950);">1</span></span><span class="g" style="width:2.95px"><span class="gi" style="font-size:6.37px;transform:scaleX(0.950);">4</span></span><span class="g" style="width:2.95px"><span class="gi" style="font-size:6.37px;transform:scaleX(0.950);">0</span></span></div>
<div class="c" style="left:506.62px;top:209.70px;background:#32cd32"></div>
<div class="a t" style="left:512.95px;top:212.91px;font-size:5.90px;color:#ffffff;font-weight:normal;"><span class="g" style="width:2.95px"><span class="gi" style="font-size:6.37px;transform:scaleX(0.950);">1</span></span><span class="g" style="width:2.95px"><span class="gi" style="font-size:6.37px;transform:scaleX(0.950);">4</span></span><span class="g" style="width:2.95px"><span class="gi" style="font-size:6.37px;transform:scaleX(0.950);">1</span></span></div>
<div class="c" style="left:532.81px;top:209.70px;background:#32cd32"></div>
<div class="a t" style="left:539.14px;top:212.91px;font-size:5.90px;color:#ffffff;font-weight:normal;"><span class="g" style="width:2.95px"><span class="gi" style="font-size:6.37px;transform:scaleX(0.950);">1</span></span><span class="g" style="width:2.95px"><span class="gi" style="font-size:6.37px;transform:scaleX(0.950);">4</span></span><span class="g" style="width:2.95px"><span class="gi" style="font-size:6.37px;transform:scaleX(0.950);">2</span></span></div>
<div class="c" style="left:559.00px;top:209.70px;background:#32cd32"></div>
<div class="a t" style="left:565.33px;top:212.91px;font-size:5.90px;color:#ffffff;font-weight:normal;"><span class="g" style="width:2.95px"><span class="gi" style="font-size:6.37px;transform:scaleX(0.950);">1</span></span><span class="g" style="width:2.95px"><span class="gi" style="font-size:6.37px;transform:scaleX(0.950);">4</span></span><span class="g" style="width:2.95px"><span class="gi" style="font-size:6.37px;transform:scaleX(0.950);">3</span></span></div>
<div class="c" style="left:585.19px;top:209.70px;background:#32cd32"></div>
<div class="a t" style="left:591.52px;top:212.91px;font-size:5.90px;color:#ffffff;font-weight:normal;"><span class="g" style="width:2.95px"><span class="gi" style="font-size:6.37px;transform:scaleX(0.950);">1</span></span><span class="g" style="width:2.95px"><span class="gi" style="font-size:6.37px;transform:scaleX(0.950);">4</span></span><span class="g" style="width:2.95px"><span class="gi" style="font-size:6.37px;transform:scaleX(0.950);">4</span></span></div>
<div class="c" style="left:611.38px;top:209.70px;background:#32cd32"></div>
<div class="a t" style="left:617.71px;top:212.91px;font-size:5.90px;color:#ffffff;font-weight:normal;"><span class="g" style="width:2.95px"><span class="gi" style="font-size:6.37px;transform:scaleX(0.950);">1</span></span><span class="g" style="width:2.95px"><span class="gi" style="font-size:6.37px;transform:scaleX(0.950);">4</span></span><span class="g" style="width:2.95px"><span class="gi" style="font-size:6.37px;transform:scaleX(0.950);">5</span></span></div>
<div class="c" style="left:637.57px;top:209.70px;background:#32cd32"></div>
<div class="a t" style="left:643.90px;top:212.91px;font-size:5.90px;color:#ffffff;font-weight:normal;"><span class="g" style="width:2.95px"><span class="gi" style="font-size:6.37px;transform:scaleX(0.950);">1</span></span><span class="g" style="width:2.95px"><span class="gi" style="font-size:6.37px;transform:scaleX(0.950);">4</span></span><span class="g" style="width:2.95px"><span class="gi" style="font-size:6.37px;transform:scaleX(0.950);">6</span></span></div>
<div class="c" style="left:663.76px;top:209.70px;background:#32cd32"></div>
<div class="a t" style="left:670.09px;top:212.91px;font-size:5.90px;color:#ffffff;font-weight:normal;"><span class="g" style="width:2.95px"><span class="gi" style="font-size:6.37px;transform:scaleX(0.950);">1</span></span><span class="g" style="width:2.95px"><span class="gi" style="font-size:6.37px;transform:scaleX(0.950);">4</span></span><span class="g" style="width:2.95px"><span class="gi" style="font-size:6.37px;transform:scaleX(0.950);">7</span></span></div>
<div class="c" style="left:689.95px;top:209.70px;background:#32cd32"></div>
<div class="a t" style="left:696.28px;top:212.91px;font-size:5.90px;color:#ffffff;font-weight:normal;"><span class="g" style="width:2.95px"><span class="gi" style="font-size:6.37px;transform:scaleX(0.950);">1</span></span><span class="g" style="width:2.95px"><span class="gi" style="font-size:6.37px;transform:scaleX(0.950);">4</span></span><span class="g" style="width:2.95px"><span class="gi" style="font-size:6.37px;transform:scaleX(0.950);">8</span></span></div>
<div class="c" style="left:716.14px;top:209.70px;background:#32cd32"></div>
<div class="a t" style="left:722.47px;top:212.91px;font-size:5.90px;color:#ffffff;font-weight:normal;"><span class="g" style="width:2.95px"><span class="gi" style="font-size:6.37px;transform:scaleX(0.950);">1</span></span><span class="g" style="width:2.95px"><span class="gi" style="font-size:6.37px;transform:scaleX(0.950);">4</span></span><span class="g" style="width:2.95px"><span class="gi" style="font-size:6.37px;transform:scaleX(0.950);">9</span></span></div>
<div class="c" style="left:742.33px;top:209.70px;background:#32cd32"></div>
<div class="a t" style="left:748.66px;top:212.91px;font-size:5.90px;color:#ffffff;font-weight:normal;"><span class="g" style="width:2.95px"><span class="gi" style="font-size:6.37px;transform:scaleX(0.950);">1</span></span><span class="g" style="width:2.95px"><span class="gi" style="font-size:6.37px;transform:scaleX(0.950);">5</span></span><span class="g" style="width:2.95px"><span class="gi" style="font-size:6.37px;transform:scaleX(0.950);">0</span></span></div>
<div class="c" style="left:768.52px;top:209.70px;background:#32cd32"></div>
<div class="a t" style="left:774.85px;top:212.91px;font-size:5.90px;color:#ffffff;font-weight:normal;"><span class="g" style="width:2.95px"><span class="gi" style="font-size:6.37px;transform:scaleX(0.950);">1</span></span><span class="g" style="width:2.95px"><span class="gi" style="font-size:6.37px;transform:scaleX(0.950);">5</span></span><span class="g" style="width:2.95px"><span class="gi" style="font-size:6.37px;transform:scaleX(0.950);">1</span></span></div>
<div class="c" style="left:297.10px;top:226.30px;background:#32cd32"></div>
<div class="a t" style="left:303.43px;top:229.51px;font-size:5.90px;color:#ffffff;font-weight:normal;"><span class="g" style="width:2.95px"><span class="gi" style="font-size:6.37px;transform:scaleX(0.950);">1</span></span><span class="g" style="width:2.95px"><span class="gi" style="font-size:6.37px;transform:scaleX(0.950);">5</span></span><span class="g" style="width:2.95px"><span class="gi" style="font-size:6.37px;transform:scaleX(0.950);">2</span></span></div>
<div class="c" style="left:323.29px;top:226.30px;background:#32cd32"></div>
<div class="a t" style="left:329.62px;top:229.51px;font-size:5.90px;color:#ffffff;font-weight:normal;"><span class="g" style="width:2.95px"><span class="gi" style="font-size:6.37px;transform:scaleX(0.950);">1</span></span><span class="g" style="width:2.95px"><span class="gi" style="font-size:6.37px;transform:scaleX(0.950);">5</span></span><span class="g" style="width:2.95px"><span class="gi" style="font-size:6.37px;transform:scaleX(0.950);">3</span></span></div>
<div class="c" style="left:349.48px;top:226.30px;background:#32cd32"></div>
<div class="a t" style="left:355.81px;top:229.51px;font-size:5.90px;color:#ffffff;font-weight:normal;"><span class="g" style="width:2.95px"><span class="gi" style="font-size:6.37px;transform:scaleX(0.950);">1</span></span><span class="g" style="width:2.95px"><span class="gi" style="font-size:6.37px;transform:scaleX(0.950);">5</span></span><span class="g" style="width:2.95px"><span class="gi" style="font-size:6.37px;transform:scaleX(0.950);">4</span></span></div>
<div class="c" style="left:375.67px;top:226.30px;background:#32cd32"></div>
<div class="a t" style="left:382.00px;top:229.51px;font-size:5.90px;color:#ffffff;font-weight:normal;"><span class="g" style="width:2.95px"><span class="gi" style="font-size:6.37px;transform:scaleX(0.950);">1</span></span><span class="g" style="width:2.95px"><span class="gi" style="font-size:6.37px;transform:scaleX(0.950);">5</span></span><span class="g" style="width:2.95px"><span class="gi" style="font-size:6.37px;transform:scaleX(0.950);">5</span></span></div>
<div class="c" style="left:401.86px;top:226.30px;background:#32cd32"></div>
<div class="a t" style="left:408.19px;top:229.51px;font-size:5.90px;color:#ffffff;font-weight:normal;"><span class="g" style="width:2.95px"><span class="gi" style="font-size:6.37px;transform:scaleX(0.950);">1</span></span><span class="g" style="width:2.95px"><span class="gi" style="font-size:6.37px;transform:scaleX(0.950);">5</span></span><span class="g" style="width:2.95px"><span class="gi" style="font-size:6.37px;transform:scaleX(0.950);">6</span></span></div>
<div class="c" style="left:428.05px;top:226.30px;background:#32cd32"></div>
<div class="a t" style="left:434.38px;top:229.51px;font-size:5.90px;color:#ffffff;font-weight:normal;"><span class="g" style="width:2.95px"><span class="gi" style="font-size:6.37px;transform:scaleX(0.950);">1</span></span><span class="g" style="width:2.95px"><span class="gi" style="font-size:6.37px;transform:scaleX(0.950);">5</span></span><span class="g" style="width:2.95px"><span class="gi" style="font-size:6.37px;transform:scaleX(0.950);">7</span></span></div>
<div class="c" style="left:454.24px;top:226.30px;background:#32cd32"></div>
<div class="a t" style="left:460.56px;top:229.51px;font-size:5.90px;color:#ffffff;font-weight:normal;"><span class="g" style="width:2.95px"><span class="gi" style="font-size:6.37px;transform:scaleX(0.950);">1</span></span><span class="g" style="width:2.95px"><span class="gi" style="font-size:6.37px;transform:scaleX(0.950);">5</span></span><span class="g" style="width:2.95px"><span class="gi" style="font-size:6.37px;transform:scaleX(0.950);">8</span></span></div>
<div class="c" style="left:480.43px;top:226.30px;background:#32cd32"></div>
<div class="a t" style="left:486.76px;top:229.51px;font-size:5.90px;color:#ffffff;font-weight:normal;"><span class="g" style="width:2.95px"><span class="gi" style="font-size:6.37px;transform:scaleX(0.950);">1</span></span><span class="g" style="width:2.95px"><span class="gi" style="font-size:6.37px;transform:scaleX(0.950);">5</span></span><span class="g" style="width:2.95px"><span class="gi" style="font-size:6.37px;transform:scaleX(0.950);">9</span></span></div>
<div class="c" style="left:506.62px;top:226.30px;background:#32cd32"></div>
<div class="a t" style="left:512.95px;top:229.51px;font-size:5.90px;color:#ffffff;font-weight:normal;"><span class="g" style="width:2.95px"><span class="gi" style="font-size:6.37px;transform:scaleX(0.950);">1</span></span><span class="g" style="width:2.95px"><span class="gi" style="font-size:6.37px;transform:scaleX(0.950);">6</span></span><span class="g" style="width:2.95px"><span class="gi" style="font-size:6.37px;transform:scaleX(0.950);">0</span></span></div>
<div class="c" style="left:532.81px;top:226.30px;background:#32cd32"></div>
<div class="a t" style="left:539.14px;top:229.51px;font-size:5.90px;color:#ffffff;font-weight:normal;"><span class="g" style="width:2.95px"><span class="gi" style="font-size:6.37px;transform:scaleX(0.950);">1</span></span><span class="g" style="width:2.95px"><span class="gi" style="font-size:6.37px;transform:scaleX(0.950);">6</span></span><span class="g" style="width:2.95px"><span class="gi" style="font-size:6.37px;transform:scaleX(0.950);">1</span></span></div>
<div class="c" style="left:559.00px;top:226.30px;background:#32cd32"></div>
<div class="a t" style="left:565.33px;top:229.51px;font-size:5.90px;color:#ffffff;font-weight:normal;"><span class="g" style="width:2.95px"><span class="gi" style="font-size:6.37px;transform:scaleX(0.950);">1</span></span><span class="g" style="width:2.95px"><span class="gi" style="font-size:6.37px;transform:scaleX(0.950);">6</span></span><span class="g" style="width:2.95px"><span class="gi" style="font-size:6.37px;transform:scaleX(0.950);">2</span></span></div>
<div class="c" style="left:585.19px;top:226.30px;background:#32cd32"></div>
<div class="a t" style="left:591.52px;top:229.51px;font-size:5.90px;color:#ffffff;font-weight:normal;"><span class="g" style="width:2.95px"><span class="gi" style="font-size:6.37px;transform:scaleX(0.950);">1</span></span><span class="g" style="width:2.95px"><span class="gi" style="font-size:6.37px;transform:scaleX(0.950);">6</span></span><span class="g" style="width:2.95px"><span class="gi" style="font-size:6.37px;transform:scaleX(0.950);">3</span></span></div>
<div class="c" style="left:611.38px;top:226.30px;background:#32cd32"></div>
<div class="a t" style="left:617.71px;top:229.51px;font-size:5.90px;color:#ffffff;font-weight:normal;"><span class="g" style="width:2.95px"><span class="gi" style="font-size:6.37px;transform:scaleX(0.950);">1</span></span><span class="g" style="width:2.95px"><span class="gi" style="font-size:6.37px;transform:scaleX(0.950);">6</span></span><span class="g" style="width:2.95px"><span class="gi" style="font-size:6.37px;transform:scaleX(0.950);">4</span></span></div>
<div class="c" style="left:637.57px;top:226.30px;background:#32cd32"></div>
<div class="a t" style="left:643.90px;top:229.51px;font-size:5.90px;color:#ffffff;font-weight:normal;"><span class="g" style="width:2.95px"><span class="gi" style="font-size:6.37px;transform:scaleX(0.950);">1</span></span><span class="g" style="width:2.95px"><span class="gi" style="font-size:6.37px;transform:scaleX(0.950);">6</span></span><span class="g" style="width:2.95px"><span class="gi" style="font-size:6.37px;transform:scaleX(0.950);">5</span></span></div>
<div class="c" style="left:663.76px;top:226.30px;background:#32cd32"></div>
<div class="a t" style="left:670.09px;top:229.51px;font-size:5.90px;color:#ffffff;font-weight:normal;"><span class="g" style="width:2.95px"><span class="gi" style="font-size:6.37px;transform:scaleX(0.950);">1</span></span><span class="g" style="width:2.95px"><span class="gi" style="font-size:6.37px;transform:scaleX(0.950);">6</span></span><span class="g" style="width:2.95px"><span class="gi" style="font-size:6.37px;transform:scaleX(0.950);">6</span></span></div>
<div class="c" style="left:689.95px;top:226.30px;background:#32cd32"></div>
<div class="a t" style="left:696.28px;top:229.51px;font-size:5.90px;color:#ffffff;font-weight:normal;"><span class="g" style="width:2.95px"><span class="gi" style="font-size:6.37px;transform:scaleX(0.950);">1</span></span><span class="g" style="width:2.95px"><span class="gi" style="font-size:6.37px;transform:scaleX(0.950);">6</span></span><span class="g" style="width:2.95px"><span class="gi" style="font-size:6.37px;transform:scaleX(0.950);">7</span></span></div>
<div class="c" style="left:716.14px;top:226.30px;background:#32cd32"></div>
<div class="a t" style="left:722.47px;top:229.51px;font-size:5.90px;color:#ffffff;font-weight:normal;"><span class="g" style="width:2.95px"><span class="gi" style="font-size:6.37px;transform:scaleX(0.950);">1</span></span><span class="g" style="width:2.95px"><span class="gi" style="font-size:6.37px;transform:scaleX(0.950);">6</span></span><span class="g" style="width:2.95px"><span class="gi" style="font-size:6.37px;transform:scaleX(0.950);">8</span></span></div>
<div class="c" style="left:742.33px;top:226.30px;background:#32cd32"></div>
<div class="a t" style="left:748.66px;top:229.51px;font-size:5.90px;color:#ffffff;font-weight:normal;"><span class="g" style="width:2.95px"><span class="gi" style="font-size:6.37px;transform:scaleX(0.950);">1</span></span><span class="g" style="width:2.95px"><span class="gi" style="font-size:6.37px;transform:scaleX(0.950);">6</span></span><span class="g" style="width:2.95px"><span class="gi" style="font-size:6.37px;transform:scaleX(0.950);">9</span></span></div>
<div class="c" style="left:768.52px;top:226.30px;background:#32cd32"></div>
<div class="a t" style="left:774.85px;top:229.51px;font-size:5.90px;color:#ffffff;font-weight:normal;"><span class="g" style="width:2.95px"><span class="gi" style="font-size:6.37px;transform:scaleX(0.950);">1</span></span><span class="g" style="width:2.95px"><span class="gi" style="font-size:6.37px;transform:scaleX(0.950);">7</span></span><span class="g" style="width:2.95px"><span class="gi" style="font-size:6.37px;transform:scaleX(0.950);">0</span></span></div>
<div class="c" style="left:297.10px;top:242.90px;background:#32cd32"></div>
<div class="a t" style="left:303.43px;top:246.11px;font-size:5.90px;color:#ffffff;font-weight:normal;"><span class="g" style="width:2.95px"><span class="gi" style="font-size:6.37px;transform:scaleX(0.950);">1</span></span><span class="g" style="width:2.95px"><span class="gi" style="font-size:6.37px;transform:scaleX(0.950);">7</span></span><span class="g" style="width:2.95px"><span class="gi" style="font-size:6.37px;transform:scaleX(0.950);">1</span></span></div>
<div class="c" style="left:323.29px;top:242.90px;background:#32cd32"></div>
<div class="a t" style="left:329.62px;top:246.11px;font-size:5.90px;color:#ffffff;font-weight:normal;"><span class="g" style="width:2.95px"><span class="gi" style="font-size:6.37px;transform:scaleX(0.950);">1</span></span><span class="g" style="width:2.95px"><span class="gi" style="font-size:6.37px;transform:scaleX(0.950);">7</span></span><span class="g" style="width:2.95px"><span class="gi" style="font-size:6.37px;transform:scaleX(0.950);">2</span></span></div>
<div class="c" style="left:349.48px;top:242.90px;background:#32cd32"></div>
<div class="a t" style="left:355.81px;top:246.11px;font-size:5.90px;color:#ffffff;font-weight:normal;"><span class="g" style="width:2.95px"><span class="gi" style="font-size:6.37px;transform:scaleX(0.950);">1</span></span><span class="g" style="width:2.95px"><span class="gi" style="font-size:6.37px;transform:scaleX(0.950);">7</span></span><span class="g" style="width:2.95px"><span class="gi" style="font-size:6.37px;transform:scaleX(0.950);">3</span></span></div>
<div class="c" style="left:375.67px;top:242.90px;background:#32cd32"></div>
<div class="a t" style="left:382.00px;top:246.11px;font-size:5.90px;color:#ffffff;font-weight:normal;"><span class="g" style="width:2.95px"><span class="gi" style="font-size:6.37px;transform:scaleX(0.950);">1</span></span><span class="g" style="width:2.95px"><span class="gi" style="font-size:6.37px;transform:scaleX(0.950);">7</span></span><span class="g" style="width:2.95px"><span class="gi" style="font-size:6.37px;transform:scaleX(0.950);">4</span></span></div>
<div class="c" style="left:401.86px;top:242.90px;background:#32cd32"></div>
<div class="a t" style="left:408.19px;top:246.11px;font-size:5.90px;color:#ffffff;font-weight:normal;"><span class="g" style="width:2.95px"><span class="gi" style="font-size:6.37px;transform:scaleX(0.950);">1</span></span><span class="g" style="width:2.95px"><span class="gi" style="font-size:6.37px;transform:scaleX(0.950);">7</span></span><span class="g" style="width:2.95px"><span class="gi" style="font-size:6.37px;transform:scaleX(0.950);">5</span></span></div>
<div class="c" style="left:428.05px;top:242.90px;background:#32cd32"></div>
<div class="a t" style="left:434.38px;top:246.11px;font-size:5.90px;color:#ffffff;font-weight:normal;"><span class="g" style="width:2.95px"><span class="gi" style="font-size:6.37px;transform:scaleX(0.950);">1</span></span><span class="g" style="width:2.95px"><span class="gi" style="font-size:6.37px;transform:scaleX(0.950);">7</span></span><span class="g" style="width:2.95px"><span class="gi" style="font-size:6.37px;transform:scaleX(0.950);">6</span></span></div>
<div class="c" style="left:454.24px;top:242.90px;background:#32cd32"></div>
<div class="a t" style="left:460.56px;top:246.11px;font-size:5.90px;color:#ffffff;font-weight:normal;"><span class="g" style="width:2.95px"><span class="gi" style="font-size:6.37px;transform:scaleX(0.950);">1</span></span><span class="g" style="width:2.95px"><span class="gi" style="font-size:6.37px;transform:scaleX(0.950);">7</span></span><span class="g" style="width:2.95px"><span class="gi" style="font-size:6.37px;transform:scaleX(0.950);">7</span></span></div>
<div class="c" style="left:480.43px;top:242.90px;background:#32cd32"></div>
<div class="a t" style="left:486.76px;top:246.11px;font-size:5.90px;color:#ffffff;font-weight:normal;"><span class="g" style="width:2.95px"><span class="gi" style="font-size:6.37px;transform:scaleX(0.950);">1</span></span><span class="g" style="width:2.95px"><span class="gi" style="font-size:6.37px;transform:scaleX(0.950);">7</span></span><span class="g" style="width:2.95px"><span class="gi" style="font-size:6.37px;transform:scaleX(0.950);">8</span></span></div>
<div class="c" style="left:506.62px;top:242.90px;background:#32cd32"></div>
<div class="a t" style="left:512.95px;top:246.11px;font-size:5.90px;color:#ffffff;font-weight:normal;"><span class="g" style="width:2.95px"><span class="gi" style="font-size:6.37px;transform:scaleX(0.950);">1</span></span><span class="g" style="width:2.95px"><span class="gi" style="font-size:6.37px;transform:scaleX(0.950);">7</span></span><span class="g" style="width:2.95px"><span class="gi" style="font-size:6.37px;transform:scaleX(0.950);">9</span></span></div>
<div class="c" style="left:532.81px;top:242.90px;background:#32cd32"></div>
<div class="a t" style="left:539.14px;top:246.11px;font-size:5.90px;color:#ffffff;font-weight:normal;"><span class="g" style="width:2.95px"><span class="gi" style="font-size:6.37px;transform:scaleX(0.950);">1</span></span><span class="g" style="width:2.95px"><span class="gi" style="font-size:6.37px;transform:scaleX(0.950);">8</span></span><span class="g" style="width:2.95px"><span class="gi" style="font-size:6.37px;transform:scaleX(0.950);">0</span></span></div>
<div class="c" style="left:559.00px;top:242.90px;background:#32cd32"></div>
<div class="a t" style="left:565.33px;top:246.11px;font-size:5.90px;color:#ffffff;font-weight:normal;"><span class="g" style="width:2.95px"><span class="gi" style="font-size:6.37px;transform:scaleX(0.950);">1</span></span><span class="g" style="width:2.95px"><span class="gi" style="font-size:6.37px;transform:scaleX(0.950);">8</span></span><span class="g" style="width:2.95px"><span class="gi" style="font-size:6.37px;transform:scaleX(0.950);">1</span></span></div>
<div class="c" style="left:585.19px;top:242.90px;background:#32cd32"></div>
<div class="a t" style="left:591.52px;top:246.11px;font-size:5.90px;color:#ffffff;font-weight:normal;"><span class="g" style="width:2.95px"><span class="gi" style="font-size:6.37px;transform:scaleX(0.950);">1</span></span><span class="g" style="width:2.95px"><span class="gi" style="font-size:6.37px;transform:scaleX(0.950);">8</span></span><span class="g" style="width:2.95px"><span class="gi" style="font-size:6.37px;transform:scaleX(0.950);">2</span></span></div>
<div class="c" style="left:611.38px;top:242.90px;background:#32cd32"></div>
<div class="a t" style="left:617.71px;top:246.11px;font-size:5.90px;color:#ffffff;font-weight:normal;"><span class="g" style="width:2.95px"><span class="gi" style="font-size:6.37px;transform:scaleX(0.950);">1</span></span><span class="g" style="width:2.95px"><span class="gi" style="font-size:6.37px;transform:scaleX(0.950);">8</span></span><span class="g" style="width:2.95px"><span class="gi" style="font-size:6.37px;transform:scaleX(0.950);">3</span></span></div>
<div class="c" style="left:637.57px;top:242.90px;background:#32cd32"></div>
<div class="a t" style="left:643.90px;top:246.11px;font-size:5.90px;color:#ffffff;font-weight:normal;"><span class="g" style="width:2.95px"><span class="gi" style="font-size:6.37px;transform:scaleX(0.950);">1</span></span><span class="g" style="width:2.95px"><span class="gi" style="font-size:6.37px;transform:scaleX(0.950);">8</span></span><span class="g" style="width:2.95px"><span class="gi" style="font-size:6.37px;transform:scaleX(0.950);">4</span></span></div>
<div class="c" style="left:663.76px;top:242.90px;background:#32cd32"></div>
<div class="a t" style="left:670.09px;top:246.11px;font-size:5.90px;color:#ffffff;font-weight:normal;"><span class="g" style="width:2.95px"><span class="gi" style="font-size:6.37px;transform:scaleX(0.950);">1</span></span><span class="g" style="width:2.95px"><span class="gi" style="font-size:6.37px;transform:scaleX(0.950);">8</span></span><span class="g" style="width:2.95px"><span class="gi" style="font-size:6.37px;transform:scaleX(0.950);">5</span></span></div>
<div class="c" style="left:689.95px;top:242.90px;background:#32cd32"></div>
<div class="a t" style="left:696.28px;top:246.11px;font-size:5.90px;color:#ffffff;font-weight:normal;"><span class="g" style="width:2.95px"><span class="gi" style="font-size:6.37px;transform:scaleX(0.950);">1</span></span><span class="g" style="width:2.95px"><span class="gi" style="font-size:6.37px;transform:scaleX(0.950);">8</span></span><span class="g" style="width:2.95px"><span class="gi" style="font-size:6.37px;transform:scaleX(0.950);">6</span></span></div>
<div class="c" style="left:716.14px;top:242.90px;background:#32cd32"></div>
<div class="a t" style="left:722.47px;top:246.11px;font-size:5.90px;color:#ffffff;font-weight:normal;"><span class="g" style="width:2.95px"><span class="gi" style="font-size:6.37px;transform:scaleX(0.950);">1</span></span><span class="g" style="width:2.95px"><span class="gi" style="font-size:6.37px;transform:scaleX(0.950);">8</span></span><span class="g" style="width:2.95px"><span class="gi" style="font-size:6.37px;transform:scaleX(0.950);">7</span></span></div>
<div class="c" style="left:742.33px;top:242.90px;background:#32cd32"></div>
<div class="a t" style="left:748.66px;top:246.11px;font-size:5.90px;color:#ffffff;font-weight:normal;"><span class="g" style="width:2.95px"><span class="gi" style="font-size:6.37px;transform:scaleX(0.950);">1</span></span><span class="g" style="width:2.95px"><span class="gi" style="font-size:6.37px;transform:scaleX(0.950);">8</span></span><span class="g" style="width:2.95px"><span class="gi" style="font-size:6.37px;transform:scaleX(0.950);">8</span></span></div>
<div class="c" style="left:768.52px;top:242.90px;background:#32cd32"></div>
<div class="a t" style="left:774.85px;top:246.11px;font-size:5.90px;color:#ffffff;font-weight:normal;"><span class="g" style="width:2.95px"><span class="gi" style="font-size:6.37px;transform:scaleX(0.950);">1</span></span><span class="g" style="width:2.95px"><span class="gi" style="font-size:6.37px;transform:scaleX(0.950);">8</span></span><span class="g" style="width:2.95px"><span class="gi" style="font-size:6.37px;transform:scaleX(0.950);">9</span></span></div>
<div class="c" style="left:297.10px;top:259.50px;background:#32cd32"></div>
<div class="a t" style="left:303.43px;top:262.71px;font-size:5.90px;color:#ffffff;font-weight:normal;"><span class="g" style="width:2.95px"><span class="gi" style="font-size:6.37px;transform:scaleX(0.950);">1</span></span><span class="g" style="width:2.95px"><span class="gi" style="font-size:6.37px;transform:scaleX(0.950);">9</span></span><span class="g" style="width:2.95px"><span class="gi" style="font-size:6.37px;transform:scaleX(0.950);">0</span></span></div>
<div class="c" style="left:323.29px;top:259.50px;background:#32cd32"></div>
<div class="a t" style="left:329.62px;top:262.71px;font-size:5.90px;color:#ffffff;font-weight:normal;"><span class="g" style="width:2.95px"><span class="gi" style="font-size:6.37px;transform:scaleX(0.950);">1</span></span><span class="g" style="width:2.95px"><span class="gi" style="font-size:6.37px;transform:scaleX(0.950);">9</span></span><span class="g" style="width:2.95px"><span class="gi" style="font-size:6.37px;transform:scaleX(0.950);">1</span></span></div>
<div class="c" style="left:349.48px;top:259.50px;background:#32cd32"></div>
<div class="a t" style="left:355.81px;top:262.71px;font-size:5.90px;color:#ffffff;font-weight:normal;"><span class="g" style="width:2.95px"><span class="gi" style="font-size:6.37px;transform:scaleX(0.950);">1</span></span><span class="g" style="width:2.95px"><span class="gi" style="font-size:6.37px;transform:scaleX(0.950);">9</span></span><span class="g" style="width:2.95px"><span class="gi" style="font-size:6.37px;transform:scaleX(0.950);">2</span></span></div>
<div class="c" style="left:375.67px;top:259.50px;background:#32cd32"></div>
<div class="a t" style="left:382.00px;top:262.71px;font-size:5.90px;color:#ffffff;font-weight:normal;"><span class="g" style="width:2.95px"><span class="gi" style="font-size:6.37px;transform:scaleX(0.950);">1</span></span><span class="g" style="width:2.95px"><span class="gi" style="font-size:6.37px;transform:scaleX(0.950);">9</span></span><span class="g" style="width:2.95px"><span class="gi" style="font-size:6.37px;transform:scaleX(0.950);">3</span></span></div>
<div class="c" style="left:401.86px;top:259.50px;background:#32cd32"></div>
<div class="a t" style="left:408.19px;top:262.71px;font-size:5.90px;color:#ffffff;font-weight:normal;"><span class="g" style="width:2.95px"><span class="gi" style="font-size:6.37px;transform:scaleX(0.950);">1</span></span><span class="g" style="width:2.95px"><span class="gi" style="font-size:6.37px;transform:scaleX(0.950);">9</span></span><span class="g" style="width:2.95px"><span class="gi" style="font-size:6.37px;transform:scaleX(0.950);">4</span></span></div>
<div class="c" style="left:428.05px;top:259.50px;background:#32cd32"></div>
<div class="a t" style="left:434.38px;top:262.71px;font-size:5.90px;color:#ffffff;font-weight:normal;"><span class="g" style="width:2.95px"><span class="gi" style="font-size:6.37px;transform:scaleX(0.950);">1</span></span><span class="g" style="width:2.95px"><span class="gi" style="font-size:6.37px;transform:scaleX(0.950);">9</span></span><span class="g" style="width:2.95px"><span class="gi" style="font-size:6.37px;transform:scaleX(0.950);">5</span></span></div>
<div class="c" style="left:454.24px;top:259.50px;background:#32cd32"></div>
<div class="a t" style="left:460.56px;top:262.71px;font-size:5.90px;color:#ffffff;font-weight:normal;"><span class="g" style="width:2.95px"><span class="gi" style="font-size:6.37px;transform:scaleX(0.950);">1</span></span><span class="g" style="width:2.95px"><span class="gi" style="font-size:6.37px;transform:scaleX(0.950);">9</span></span><span class="g" style="width:2.95px"><span class="gi" style="font-size:6.37px;transform:scaleX(0.950);">6</span></span></div>
<div class="c" style="left:480.43px;top:259.50px;background:#32cd32"></div>
<div class="a t" style="left:486.76px;top:262.71px;font-size:5.90px;color:#ffffff;font-weight:normal;"><span class="g" style="width:2.95px"><span class="gi" style="font-size:6.37px;transform:scaleX(0.950);">1</span></span><span class="g" style="width:2.95px"><span class="gi" style="font-size:6.37px;transform:scaleX(0.950);">9</span></span><span class="g" style="width:2.95px"><span class="gi" style="font-size:6.37px;transform:scaleX(0.950);">7</span></span></div>
<div class="c" style="left:506.62px;top:259.50px;background:#32cd32"></div>
<div class="a t" style="left:512.95px;top:262.71px;font-size:5.90px;color:#ffffff;font-weight:normal;"><span class="g" style="width:2.95px"><span class="gi" style="font-size:6.37px;transform:scaleX(0.950);">1</span></span><span class="g" style="width:2.95px"><span class="gi" style="font-size:6.37px;transform:scaleX(0.950);">9</span></span><span class="g" style="width:2.95px"><span class="gi" style="font-size:6.37px;transform:scaleX(0.950);">8</span></span></div>
<div class="c" style="left:532.81px;top:259.50px;background:#32cd32"></div>
<div class="a t" style="left:539.14px;top:262.71px;font-size:5.90px;color:#ffffff;font-weight:normal;"><span class="g" style="width:2.95px"><span class="gi" style="font-size:6.37px;transform:scaleX(0.950);">1</span></span><span class="g" style="width:2.95px"><span class="gi" style="font-size:6.37px;transform:scaleX(0.950);">9</span></span><span class="g" style="width:2.95px"><span class="gi" style="font-size:6.37px;transform:scaleX(0.950);">9</span></span></div>
<div class="c" style="left:559.00px;top:259.50px;background:#32cd32"></div>
<div class="a t" style="left:565.33px;top:262.71px;font-size:5.90px;color:#ffffff;font-weight:normal;"><span class="g" style="width:2.95px"><span class="gi" style="font-size:6.37px;transform:scaleX(0.950);">2</span></span><span class="g" style="width:2.95px"><span class="gi" style="font-size:6.37px;transform:scaleX(0.950);">0</span></span><span class="g" style="width:2.95px"><span class="gi" style="font-size:6.37px;transform:scaleX(0.950);">0</span></span></div>
<div class="c" style="left:585.19px;top:259.50px;background:#32cd32"></div>
<div class="a t" style="left:591.52px;top:262.71px;font-size:5.90px;color:#ffffff;font-weight:normal;"><span class="g" style="width:2.95px"><span class="gi" style="font-size:6.37px;transform:scaleX(0.950);">2</span></span><span class="g" style="width:2.95px"><span class="gi" style="font-size:6.37px;transform:scaleX(0.950);">0</span></span><span class="g" style="width:2.95px"><span class="gi" style="font-size:6.37px;transform:scaleX(0.950);">1</span></span></div>
<div class="c" style="left:611.38px;top:259.50px;background:#32cd32"></div>
<div class="a t" style="left:617.71px;top:262.71px;font-size:5.90px;color:#ffffff;font-weight:normal;"><span class="g" style="width:2.95px"><span class="gi" style="font-size:6.37px;transform:scaleX(0.950);">2</span></span><span class="g" style="width:2.95px"><span class="gi" style="font-size:6.37px;transform:scaleX(0.950);">0</span></span><span class="g" style="width:2.95px"><span class="gi" style="font-size:6.37px;transform:scaleX(0.950);">2</span></span></div>
<div class="c" style="left:637.57px;top:259.50px;background:#32cd32"></div>
<div class="a t" style="left:643.90px;top:262.71px;font-size:5.90px;color:#ffffff;font-weight:normal;"><span class="g" style="width:2.95px"><span class="gi" style="font-size:6.37px;transform:scaleX(0.950);">2</span></span><span class="g" style="width:2.95px"><span class="gi" style="font-size:6.37px;transform:scaleX(0.950);">0</span></span><span class="g" style="width:2.95px"><span class="gi" style="font-size:6.37px;transform:scaleX(0.950);">3</span></span></div>
<div class="c" style="left:663.76px;top:259.50px;background:#32cd32"></div>
<div class="a t" style="left:670.09px;top:262.71px;font-size:5.90px;color:#ffffff;font-weight:normal;"><span class="g" style="width:2.95px"><span class="gi" style="font-size:6.37px;transform:scaleX(0.950);">2</span></span><span class="g" style="width:2.95px"><span class="gi" style="font-size:6.37px;transform:scaleX(0.950);">0</span></span><span class="g" style="width:2.95px"><span class="gi" style="font-size:6.37px;transform:scaleX(0.950);">4</span></span></div>
<div class="c" style="left:689.95px;top:259.50px;background:#32cd32"></div>
<div class="a t" style="left:696.28px;top:262.71px;font-size:5.90px;color:#ffffff;font-weight:normal;"><span class="g" style="width:2.95px"><span class="gi" style="font-size:6.37px;transform:scaleX(0.950);">2</span></span><span class="g" style="width:2.95px"><span class="gi" style="font-size:6.37px;transform:scaleX(0.950);">0</span></span><span class="g" style="width:2.95px"><span class="gi" style="font-size:6.37px;transform:scaleX(0.950);">5</span></span></div>
<div class="c" style="left:716.14px;top:259.50px;background:#32cd32"></div>
<div class="a t" style="left:722.47px;top:262.71px;font-size:5.90px;color:#ffffff;font-weight:normal;"><span class="g" style="width:2.95px"><span class="gi" style="font-size:6.37px;transform:scaleX(0.950);">2</span></span><span class="g" style="width:2.95px"><span class="gi" style="font-size:6.37px;transform:scaleX(0.950);">0</span></span><span class="g" style="width:2.95px"><span class="gi" style="font-size:6.37px;transform:scaleX(0.950);">6</span></span></div>
<div class="c" style="left:742.33px;top:259.50px;background:#32cd32"></div>
<div class="a t" style="left:748.66px;top:262.71px;font-size:5.90px;color:#ffffff;font-weight:normal;"><span class="g" style="width:2.95px"><span class="gi" style="font-size:6.37px;transform:scaleX(0.950);">2</span></span><span class="g" style="width:2.95px"><span class="gi" style="font-size:6.37px;transform:scaleX(0.950);">0</span></span><span class="g" style="width:2.95px"><span class="gi" style="font-size:6.37px;transform:scaleX(0.950);">7</span></span></div>
<div class="c" style="left:768.52px;top:259.50px;background:#32cd32"></div>
<div class="a t" style="left:774.85px;top:262.71px;font-size:5.90px;color:#ffffff;font-weight:normal;"><span class="g" style="width:2.95px"><span class="gi" style="font-size:6.37px;transform:scaleX(0.950);">2</span></span><span class="g" style="width:2.95px"><span class="gi" style="font-size:6.37px;transform:scaleX(0.950);">0</span></span><span class="g" style="width:2.95px"><span class="gi" style="font-size:6.37px;transform:scaleX(0.950);">8</span></span></div>
<div class="c" style="left:297.10px;top:276.10px;background:#32cd32"></div>
<div class="a t" style="left:303.43px;top:279.31px;font-size:5.90px;color:#ffffff;font-weight:normal;"><span class="g" style="width:2.95px"><span class="gi" style="font-size:6.37px;transform:scaleX(0.950);">2</span></span><span class="g" style="width:2.95px"><span class="gi" style="font-size:6.37px;transform:scaleX(0.950);">0</span></span><span class="g" style="width:2.95px"><span class="gi" style="font-size:6.37px;transform:scaleX(0.950);">9</span></span></div>
<div class="c" style="left:323.29px;top:276.10px;background:#32cd32"></div>
<div class="a t" style="left:329.62px;top:279.31px;font-size:5.90px;color:#ffffff;font-weight:normal;"><span class="g" style="width:2.95px"><span class="gi" style="font-size:6.37px;transform:scaleX(0.950);">2</span></span><span class="g" style="width:2.95px"><span class="gi" style="font-size:6.37px;transform:scaleX(0.950);">1</span></span><span class="g" style="width:2.95px"><span class="gi" style="font-size:6.37px;transform:scaleX(0.950);">0</span></span></div>
<div class="c" style="left:349.48px;top:276.10px;background:#32cd32"></div>
<div class="a t" style="left:355.81px;top:279.31px;font-size:5.90px;color:#ffffff;font-weight:normal;"><span class="g" style="width:2.95px"><span class="gi" style="font-size:6.37px;transform:scaleX(0.950);">2</span></span><span class="g" style="width:2.95px"><span class="gi" style="font-size:6.37px;transform:scaleX(0.950);">1</span></span><span class="g" style="width:2.95px"><span class="gi" style="font-size:6.37px;transform:scaleX(0.950);">1</span></span></div>
<div class="c" style="left:375.67px;top:276.10px;background:#32cd32"></div>
<div class="a t" style="left:382.00px;top:279.31px;font-size:5.90px;color:#ffffff;font-weight:normal;"><span class="g" style="width:2.95px"><span class="gi" style="font-size:6.37px;transform:scaleX(0.950);">2</span></span><span class="g" style="width:2.95px"><span class="gi" style="font-size:6.37px;transform:scaleX(0.950);">1</span></span><span class="g" style="width:2.95px"><span class="gi" style="font-size:6.37px;transform:scaleX(0.950);">2</span></span></div>
<div class="c" style="left:401.86px;top:276.10px;background:#32cd32"></div>
<div class="a t" style="left:408.19px;top:279.31px;font-size:5.90px;color:#ffffff;font-weight:normal;"><span class="g" style="width:2.95px"><span class="gi" style="font-size:6.37px;transform:scaleX(0.950);">2</span></span><span class="g" style="width:2.95px"><span class="gi" style="font-size:6.37px;transform:scaleX(0.950);">1</span></span><span class="g" style="width:2.95px"><span class="gi" style="font-size:6.37px;transform:scaleX(0.950);">3</span></span></div>
<div class="c" style="left:428.05px;top:276.10px;background:#32cd32"></div>
<div class="a t" style="left:434.38px;top:279.31px;font-size:5.90px;color:#ffffff;font-weight:normal;"><span class="g" style="width:2.95px"><span class="gi" style="font-size:6.37px;transform:scaleX(0.950);">2</span></span><span class="g" style="width:2.95px"><span class="gi" style="font-size:6.37px;transform:scaleX(0.950);">1</span></span><span class="g" style="width:2.95px"><span class="gi" style="font-size:6.37px;transform:scaleX(0.950);">4</span></span></div>
<div class="c" style="left:454.24px;top:276.10px;background:#32cd32"></div>
<div class="a t" style="left:460.56px;top:279.31px;font-size:5.90px;color:#ffffff;font-weight:normal;"><span class="g" style="width:2.95px"><span class="gi" style="font-size:6.37px;transform:scaleX(0.950);">2</span></span><span class="g" style="width:2.95px"><span class="gi" style="font-size:6.37px;transform:scaleX(0.950);">1</span></span><span class="g" style="width:2.95px"><span class="gi" style="font-size:6.37px;transform:scaleX(0.950);">5</span></span></div>
<div class="c" style="left:480.43px;top:276.10px;background:#32cd32"></div>
<div class="a t" style="left:486.76px;top:279.31px;font-size:5.90px;color:#ffffff;font-weight:normal;"><span class="g" style="width:2.95px"><span class="gi" style="font-size:6.37px;transform:scaleX(0.950);">2</span></span><span class="g" style="width:2.95px"><span class="gi" style="font-size:6.37px;transform:scaleX(0.950);">1</span></span><span class="g" style="width:2.95px"><span class="gi" style="font-size:6.37px;transform:scaleX(0.950);">6</span></span></div>
<div class="c" style="left:506.62px;top:276.10px;background:#32cd32"></div>
<div class="a t" style="left:512.95px;top:279.31px;font-size:5.90px;color:#ffffff;font-weight:normal;"><span class="g" style="width:2.95px"><span class="gi" style="font-size:6.37px;transform:scaleX(0.950);">2</span></span><span class="g" style="width:2.95px"><span class="gi" style="font-size:6.37px;transform:scaleX(0.950);">1</span></span><span class="g" style="width:2.95px"><span class="gi" style="font-size:6.37px;transform:scaleX(0.950);">7</span></span></div>
<div class="c" style="left:532.81px;top:276.10px;background:#32cd32"></div>
<div class="a t" style="left:539.14px;top:279.31px;font-size:5.90px;color:#ffffff;font-weight:normal;"><span class="g" style="width:2.95px"><span class="gi" style="font-size:6.37px;transform:scaleX(0.950);">2</span></span><span class="g" style="width:2.95px"><span class="gi" style="font-size:6.37px;transform:scaleX(0.950);">1</span></span><span class="g" style="width:2.95px"><span class="gi" style="font-size:6.37px;transform:scaleX(0.950);">8</span></span></div>
<div class="c" style="left:559.00px;top:276.10px;background:#32cd32"></div>
<div class="a t" style="left:565.33px;top:279.31px;font-size:5.90px;color:#ffffff;font-weight:normal;"><span class="g" style="width:2.95px"><span class="gi" style="font-size:6.37px;transform:scaleX(0.950);">2</span></span><span class="g" style="width:2.95px"><span class="gi" style="font-size:6.37px;transform:scaleX(0.950);">1</span></span><span class="g" style="width:2.95px"><span class="gi" style="font-size:6.37px;transform:scaleX(0.950);">9</span></span></div>
<div class="c" style="left:585.19px;top:276.10px;background:#32cd32"></div>
<div class="a t" style="left:591.52px;top:279.31px;font-size:5.90px;color:#ffffff;font-weight:normal;"><span class="g" style="width:2.95px"><span class="gi" style="font-size:6.37px;transform:scaleX(0.950);">2</span></span><span class="g" style="width:2.95px"><span class="gi" style="font-size:6.37px;transform:scaleX(0.950);">2</span></span><span class="g" style="width:2.95px"><span class="gi" style="font-size:6.37px;transform:scaleX(0.950);">0</span></span></div>
<div class="c" style="left:611.38px;top:276.10px;background:#32cd32"></div>
<div class="a t" style="left:617.71px;top:279.31px;font-size:5.90px;color:#ffffff;font-weight:normal;"><span class="g" style="width:2.95px"><span class="gi" style="font-size:6.37px;transform:scaleX(0.950);">2</span></span><span class="g" style="width:2.95px"><span class="gi" style="font-size:6.37px;transform:scaleX(0.950);">2</span></span><span class="g" style="width:2.95px"><span class="gi" style="font-size:6.37px;transform:scaleX(0.950);">1</span></span></div>
<div class="c" style="left:637.57px;top:276.10px;background:#32cd32"></div>
<div class="a t" style="left:643.90px;top:279.31px;font-size:5.90px;color:#ffffff;font-weight:normal;"><span class="g" style="width:2.95px"><span class="gi" style="font-size:6.37px;transform:scaleX(0.950);">2</span></span><span class="g" style="width:2.95px"><span class="gi" style="font-size:6.37px;transform:scaleX(0.950);">2</span></span><span class="g" style="width:2.95px"><span class="gi" style="font-size:6.37px;transform:scaleX(0.950);">2</span></span></div>
<div class="c" style="left:663.76px;top:276.10px;background:#32cd32"></div>
<div class="a t" style="left:670.09px;top:279.31px;font-size:5.90px;color:#ffffff;font-weight:normal;"><span class="g" style="width:2.95px"><span class="gi" style="font-size:6.37px;transform:scaleX(0.950);">2</span></span><span class="g" style="width:2.95px"><span class="gi" style="font-size:6.37px;transform:scaleX(0.950);">2</span></span><span class="g" style="width:2.95px"><span class="gi" style="font-size:6.37px;transform:scaleX(0.950);">3</span></span></div>
<div class="c" style="left:689.95px;top:276.10px;background:#32cd32"></div>
<div class="a t" style="left:696.28px;top:279.31px;font-size:5.90px;color:#ffffff;font-weight:normal;"><span class="g" style="width:2.95px"><span class="gi" style="font-size:6.37px;transform:scaleX(0.950);">2</span></span><span class="g" style="width:2.95px"><span class="gi" style="font-size:6.37px;transform:scaleX(0.950);">2</span></span><span class="g" style="width:2.95px"><span class="gi" style="font-size:6.37px;transform:scaleX(0.950);">4</span></span></div>
<div class="c" style="left:716.14px;top:276.10px;background:#32cd32"></div>
<div class="a t" style="left:722.47px;top:279.31px;font-size:5.90px;color:#ffffff;font-weight:normal;"><span class="g" style="width:2.95px"><span class="gi" style="font-size:6.37px;transform:scaleX(0.950);">2</span></span><span class="g" style="width:2.95px"><span class="gi" style="font-size:6.37px;transform:scaleX(0.950);">2</span></span><span class="g" style="width:2.95px"><span class="gi" style="font-size:6.37px;transform:scaleX(0.950);">5</span></span></div>
<div class="c" style="left:742.33px;top:276.10px;background:#32cd32"></div>
<div class="a t" style="left:748.66px;top:279.31px;font-size:5.90px;color:#ffffff;font-weight:normal;"><span class="g" style="width:2.95px"><span class="gi" style="font-size:6.37px;transform:scaleX(0.950);">2</span></span><span class="g" style="width:2.95px"><span class="gi" style="font-size:6.37px;transform:scaleX(0.950);">2</span></span><span class="g" style="width:2.95px"><span class="gi" style="font-size:6.37px;transform:scaleX(0.950);">6</span></span></div>
<div class="c" style="left:768.52px;top:276.10px;background:#32cd32"></div>
<div class="a t" style="left:774.85px;top:279.31px;font-size:5.90px;color:#ffffff;font-weight:normal;"><span class="g" style="width:2.95px"><span class="gi" style="font-size:6.37px;transform:scaleX(0.950);">2</span></span><span class="g" style="width:2.95px"><span class="gi" style="font-size:6.37px;transform:scaleX(0.950);">2</span></span><span class="g" style="width:2.95px"><span class="gi" style="font-size:6.37px;transform:scaleX(0.950);">7</span></span></div>
<div class="c" style="left:297.10px;top:292.70px;background:#32cd32"></div>
<div class="a t" style="left:303.43px;top:295.91px;font-size:5.90px;color:#ffffff;font-weight:normal;"><span class="g" style="width:2.95px"><span class="gi" style="font-size:6.37px;transform:scaleX(0.950);">2</span></span><span class="g" style="width:2.95px"><span class="gi" style="font-size:6.37px;transform:scaleX(0.950);">2</span></span><span class="g" style="width:2.95px"><span class="gi" style="font-size:6.37px;transform:scaleX(0.950);">8</span></span></div>
<div class="c" style="left:323.29px;top:292.70px;background:#32cd32"></div>
<div class="a t" style="left:329.62px;top:295.91px;font-size:5.90px;color:#ffffff;font-weight:normal;"><span class="g" style="width:2.95px"><span class="gi" style="font-size:6.37px;transform:scaleX(0.950);">2</span></span><span class="g" style="width:2.95px"><span class="gi" style="font-size:6.37px;transform:scaleX(0.950);">2</span></span><span class="g" style="width:2.95px"><span class="gi" style="font-size:6.37px;transform:scaleX(0.950);">9</span></span></div>
<div class="c" style="left:349.48px;top:292.70px;background:#32cd32"></div>
<div class="a t" style="left:355.81px;top:295.91px;font-size:5.90px;color:#ffffff;font-weight:normal;"><span class="g" style="width:2.95px"><span class="gi" style="font-size:6.37px;transform:scaleX(0.950);">2</span></span><span class="g" style="width:2.95px"><span class="gi" style="font-size:6.37px;transform:scaleX(0.950);">3</span></span><span class="g" style="width:2.95px"><span class="gi" style="font-size:6.37px;transform:scaleX(0.950);">0</span></span></div>
<div class="c" style="left:375.67px;top:292.70px;background:#32cd32"></div>
<div class="a t" style="left:382.00px;top:295.91px;font-size:5.90px;color:#ffffff;font-weight:normal;"><span class="g" style="width:2.95px"><span class="gi" style="font-size:6.37px;transform:scaleX(0.950);">2</span></span><span class="g" style="width:2.95px"><span class="gi" style="font-size:6.37px;transform:scaleX(0.950);">3</span></span><span class="g" style="width:2.95px"><span class="gi" style="font-size:6.37px;transform:scaleX(0.950);">1</span></span></div>
<div class="c" style="left:401.86px;top:292.70px;background:#32cd32"></div>
<div class="a t" style="left:408.19px;top:295.91px;font-size:5.90px;color:#ffffff;font-weight:normal;"><span class="g" style="width:2.95px"><span class="gi" style="font-size:6.37px;transform:scaleX(0.950);">2</span></span><span class="g" style="width:2.95px"><span class="gi" style="font-size:6.37px;transform:scaleX(0.950);">3</span></span><span class="g" style="width:2.95px"><span class="gi" style="font-size:6.37px;transform:scaleX(0.950);">2</span></span></div>
<div class="c" style="left:428.05px;top:292.70px;background:#32cd32"></div>
<div class="a t" style="left:434.38px;top:295.91px;font-size:5.90px;color:#ffffff;font-weight:normal;"><span class="g" style="width:2.95px"><span class="gi" style="font-size:6.37px;transform:scaleX(0.950);">2</span></span><span class="g" style="width:2.95px"><span class="gi" style="font-size:6.37px;transform:scaleX(0.950);">3</span></span><span class="g" style="width:2.95px"><span class="gi" style="font-size:6.37px;transform:scaleX(0.950);">3</span></span></div>
<div class="c" style="left:454.24px;top:292.70px;background:#32cd32"></div>
<div class="a t" style="left:460.56px;top:295.91px;font-size:5.90px;color:#ffffff;font-weight:normal;"><span class="g" style="width:2.95px"><span class="gi" style="font-size:6.37px;transform:scaleX(0.950);">2</span></span><span class="g" style="width:2.95px"><span class="gi" style="font-size:6.37px;transform:scaleX(0.950);">3</span></span><span class="g" style="width:2.95px"><span class="gi" style="font-size:6.37px;transform:scaleX(0.950);">4</span></span></div>
<div class="c" style="left:480.43px;top:292.70px;background:#32cd32"></div>
<div class="a t" style="left:486.76px;top:295.91px;font-size:5.90px;color:#ffffff;font-weight:normal;"><span class="g" style="width:2.95px"><span class="gi" style="font-size:6.37px;transform:scaleX(0.950);">2</span></span><span class="g" style="width:2.95px"><span class="gi" style="font-size:6.37px;transform:scaleX(0.950);">3</span></span><span class="g" style="width:2.95px"><span class="gi" style="font-size:6.37px;transform:scaleX(0.950);">5</span></span></div>
<div class="c" style="left:506.62px;top:292.70px;background:#32cd32"></div>
<div class="a t" style="left:512.95px;top:295.91px;font-size:5.90px;color:#ffffff;font-weight:normal;"><span class="g" style="width:2.95px"><span class="gi" style="font-size:6.37px;transform:scaleX(0.950);">2</span></span><span class="g" style="width:2.95px"><span class="gi" style="font-size:6.37px;transform:scaleX(0.950);">3</span></span><span class="g" style="width:2.95px"><span class="gi" style="font-size:6.37px;transform:scaleX(0.950);">6</span></span></div>
<div class="c" style="left:532.81px;top:292.70px;background:#32cd32"></div>
<div class="a t" style="left:539.14px;top:295.91px;font-size:5.90px;color:#ffffff;font-weight:normal;"><span class="g" style="width:2.95px"><span class="gi" style="font-size:6.37px;transform:scaleX(0.950);">2</span></span><span class="g" style="width:2.95px"><span class="gi" style="font-size:6.37px;transform:scaleX(0.950);">3</span></span><span class="g" style="width:2.95px"><span class="gi" style="font-size:6.37px;transform:scaleX(0.950);">7</span></span></div>
<div class="c" style="left:559.00px;top:292.70px;background:#32cd32"></div>
<div class="a t" style="left:565.33px;top:295.91px;font-size:5.90px;color:#ffffff;font-weight:normal;"><span class="g" style="width:2.95px"><span class="gi" style="font-size:6.37px;transform:scaleX(0.950);">2</span></span><span class="g" style="width:2.95px"><span class="gi" style="font-size:6.37px;transform:scaleX(0.950);">3</span></span><span class="g" style="width:2.95px"><span class="gi" style="font-size:6.37px;transform:scaleX(0.950);">8</span></span></div>
<div class="c" style="left:585.19px;top:292.70px;background:#32cd32"></div>
<div class="a t" style="left:591.52px;top:295.91px;font-size:5.90px;color:#ffffff;font-weight:normal;"><span class="g" style="width:2.95px"><span class="gi" style="font-size:6.37px;transform:scaleX(0.950);">2</span></span><span class="g" style="width:2.95px"><span class="gi" style="font-size:6.37px;transform:scaleX(0.950);">3</span></span><span class="g" style="width:2.95px"><span class="gi" style="font-size:6.37px;transform:scaleX(0.950);">9</span></span></div>
<div class="c" style="left:611.38px;top:292.70px;background:#32cd32"></div>
<div class="a t" style="left:617.71px;top:295.91px;font-size:5.90px;color:#ffffff;font-weight:normal;"><span class="g" style="width:2.95px"><span class="gi" style="font-size:6.37px;transform:scaleX(0.950);">2</span></span><span class="g" style="width:2.95px"><span class="gi" style="font-size:6.37px;transform:scaleX(0.950);">4</span></span><span class="g" style="width:2.95px"><span class="gi" style="font-size:6.37px;transform:scaleX(0.950);">0</span></span></div>
<div class="c" style="left:637.57px;top:292.70px;background:#32cd32"></div>
<div class="a t" style="left:643.90px;top:295.91px;font-size:5.90px;color:#ffffff;font-weight:normal;"><span class="g" style="width:2.95px"><span class="gi" style="font-size:6.37px;transform:scaleX(0.950);">2</span></span><span class="g" style="width:2.95px"><span class="gi" style="font-size:6.37px;transform:scaleX(0.950);">4</span></span><span class="g" style="width:2.95px"><span class="gi" style="font-size:6.37px;transform:scaleX(0.950);">1</span></span></div>
<div class="c" style="left:663.76px;top:292.70px;background:#32cd32"></div>
<div class="a t" style="left:670.09px;top:295.91px;font-size:5.90px;color:#ffffff;font-weight:normal;"><span class="g" style="width:2.95px"><span class="gi" style="font-size:6.37px;transform:scaleX(0.950);">2</span></span><span class="g" style="width:2.95px"><span class="gi" style="font-size:6.37px;transform:scaleX(0.950);">4</span></span><span class="g" style="width:2.95px"><span class="gi" style="font-size:6.37px;transform:scaleX(0.950);">2</span></span></div>
<div class="c" style="left:689.95px;top:292.70px;background:#32cd32"></div>
<div class="a t" style="left:696.28px;top:295.91px;font-size:5.90px;color:#ffffff;font-weight:normal;"><span class="g" style="width:2.95px"><span class="gi" style="font-size:6.37px;transform:scaleX(0.950);">2</span></span><span class="g" style="width:2.95px"><span class="gi" style="font-size:6.37px;transform:scaleX(0.950);">4</span></span><span class="g" style="width:2.95px"><span class="gi" style="font-size:6.37px;transform:scaleX(0.950);">3</span></span></div>
<div class="c" style="left:716.14px;top:292.70px;background:#32cd32"></div>
<div class="a t" style="left:722.47px;top:295.91px;font-size:5.90px;color:#ffffff;font-weight:normal;"><span class="g" style="width:2.95px"><span class="gi" style="font-size:6.37px;transform:scaleX(0.950);">2</span></span><span class="g" style="width:2.95px"><span class="gi" style="font-size:6.37px;transform:scaleX(0.950);">4</span></span><span class="g" style="width:2.95px"><span class="gi" style="font-size:6.37px;transform:scaleX(0.950);">4</span></span></div>
<div class="c" style="left:742.33px;top:292.70px;background:#32cd32"></div>
<div class="a t" style="left:748.66px;top:295.91px;font-size:5.90px;color:#ffffff;font-weight:normal;"><span class="g" style="width:2.95px"><span class="gi" style="font-size:6.37px;transform:scaleX(0.950);">2</span></span><span class="g" style="width:2.95px"><span class="gi" style="font-size:6.37px;transform:scaleX(0.950);">4</span></span><span class="g" style="width:2.95px"><span class="gi" style="font-size:6.37px;transform:scaleX(0.950);">5</span></span></div>
<div class="c" style="left:768.52px;top:292.70px;background:#32cd32"></div>
<div class="a t" style="left:774.85px;top:295.91px;font-size:5.90px;color:#ffffff;font-weight:normal;"><span class="g" style="width:2.95px"><span class="gi" style="font-size:6.37px;transform:scaleX(0.950);">2</span></span><span class="g" style="width:2.95px"><span class="gi" style="font-size:6.37px;transform:scaleX(0.950);">4</span></span><span class="g" style="width:2.95px"><span class="gi" style="font-size:6.37px;transform:scaleX(0.950);">6</span></span></div>
<div class="c" style="left:297.10px;top:309.30px;background:#32cd32"></div>
<div class="a t" style="left:303.43px;top:312.51px;font-size:5.90px;color:#ffffff;font-weight:normal;"><span class="g" style="width:2.95px"><span class="gi" style="font-size:6.37px;transform:scaleX(0.950);">2</span></span><span class="g" style="width:2.95px"><span class="gi" style="font-size:6.37px;transform:scaleX(0.950);">4</span></span><span class="g" style="width:2.95px"><span class="gi" style="font-size:6.37px;transform:scaleX(0.950);">7</span></span></div>
<div class="c" style="left:323.29px;top:309.30px;background:#32cd32"></div>
<div class="a t" style="left:329.62px;top:312.51px;font-size:5.90px;color:#ffffff;font-weight:normal;"><span class="g" style="width:2.95px"><span class="gi" style="font-size:6.37px;transform:scaleX(0.950);">2</span></span><span class="g" style="width:2.95px"><span class="gi" style="font-size:6.37px;transform:scaleX(0.950);">4</span></span><span class="g" style="width:2.95px"><span class="gi" style="font-size:6.37px;transform:scaleX(0.950);">8</span></span></div>
<div class="c" style="left:349.48px;top:309.30px;background:#32cd32"></div>
<div class="a t" style="left:355.81px;top:312.51px;font-size:5.90px;color:#ffffff;font-weight:normal;"><span class="g" style="width:2.95px"><span class="gi" style="font-size:6.37px;transform:scaleX(0.950);">2</span></span><span class="g" style="width:2.95px"><span class="gi" style="font-size:6.37px;transform:scaleX(0.950);">4</span></span><span class="g" style="width:2.95px"><span class="gi" style="font-size:6.37px;transform:scaleX(0.950);">9</span></span></div>
<div class="c" style="left:375.67px;top:309.30px;background:#32cd32"></div>
<div class="a t" style="left:382.00px;top:312.51px;font-size:5.90px;color:#ffffff;font-weight:normal;"><span class="g" style="width:2.95px"><span class="gi" style="font-size:6.37px;transform:scaleX(0.950);">2</span></span><span class="g" style="width:2.95px"><span class="gi" style="font-size:6.37px;transform:scaleX(0.950);">5</span></span><span class="g" style="width:2.95px"><span class="gi" style="font-size:6.37px;transform:scaleX(0.950);">0</span></span></div>
<div class="c" style="left:401.86px;top:309.30px;background:#32cd32"></div>
<div class="a t" style="left:408.19px;top:312.51px;font-size:5.90px;color:#ffffff;font-weight:normal;"><span class="g" style="width:2.95px"><span class="gi" style="font-size:6.37px;transform:scaleX(0.950);">2</span></span><span class="g" style="width:2.95px"><span class="gi" style="font-size:6.37px;transform:scaleX(0.950);">5</span></span><span class="g" style="width:2.95px"><span class="gi" style="font-size:6.37px;transform:scaleX(0.950);">1</span></span></div>
<div class="c" style="left:428.05px;top:309.30px;background:#32cd32"></div>
<div class="a t" style="left:434.38px;top:312.51px;font-size:5.90px;color:#ffffff;font-weight:normal;"><span class="g" style="width:2.95px"><span class="gi" style="font-size:6.37px;transform:scaleX(0.950);">2</span></span><span class="g" style="width:2.95px"><span class="gi" style="font-size:6.37px;transform:scaleX(0.950);">5</span></span><span class="g" style="width:2.95px"><span class="gi" style="font-size:6.37px;transform:scaleX(0.950);">2</span></span></div>
<div class="c" style="left:454.24px;top:309.30px;background:#32cd32"></div>
<div class="a t" style="left:460.56px;top:312.51px;font-size:5.90px;color:#ffffff;font-weight:normal;"><span class="g" style="width:2.95px"><span class="gi" style="font-size:6.37px;transform:scaleX(0.950);">2</span></span><span class="g" style="width:2.95px"><span class="gi" style="font-size:6.37px;transform:scaleX(0.950);">5</span></span><span class="g" style="width:2.95px"><span class="gi" style="font-size:6.37px;transform:scaleX(0.950);">3</span></span></div>
<div class="c" style="left:480.43px;top:309.30px;background:#008b8b"></div>
<div class="a t" style="left:486.76px;top:312.51px;font-size:5.90px;color:#ffffff;font-weight:normal;"><span class="g" style="width:2.95px"><span class="gi" style="font-size:6.37px;transform:scaleX(0.950);">2</span></span><span class="g" style="width:2.95px"><span class="gi" style="font-size:6.37px;transform:scaleX(0.950);">5</span></span><span class="g" style="width:2.95px"><span class="gi" style="font-size:6.37px;transform:scaleX(0.950);">4</span></span></div>
<div class="c" style="left:506.62px;top:309.30px;background:#778899"></div>
<div class="a t" style="left:512.95px;top:312.51px;font-size:5.90px;color:#ffffff;font-weight:normal;"><span class="g" style="width:2.95px"><span class="gi" style="font-size:6.37px;transform:scaleX(0.950);">2</span></span><span class="g" style="width:2.95px"><span class="gi" style="font-size:6.37px;transform:scaleX(0.950);">5</span></span><span class="g" style="width:2.95px"><span class="gi" style="font-size:6.37px;transform:scaleX(0.950);">5</span></span></div>
</body></html>
